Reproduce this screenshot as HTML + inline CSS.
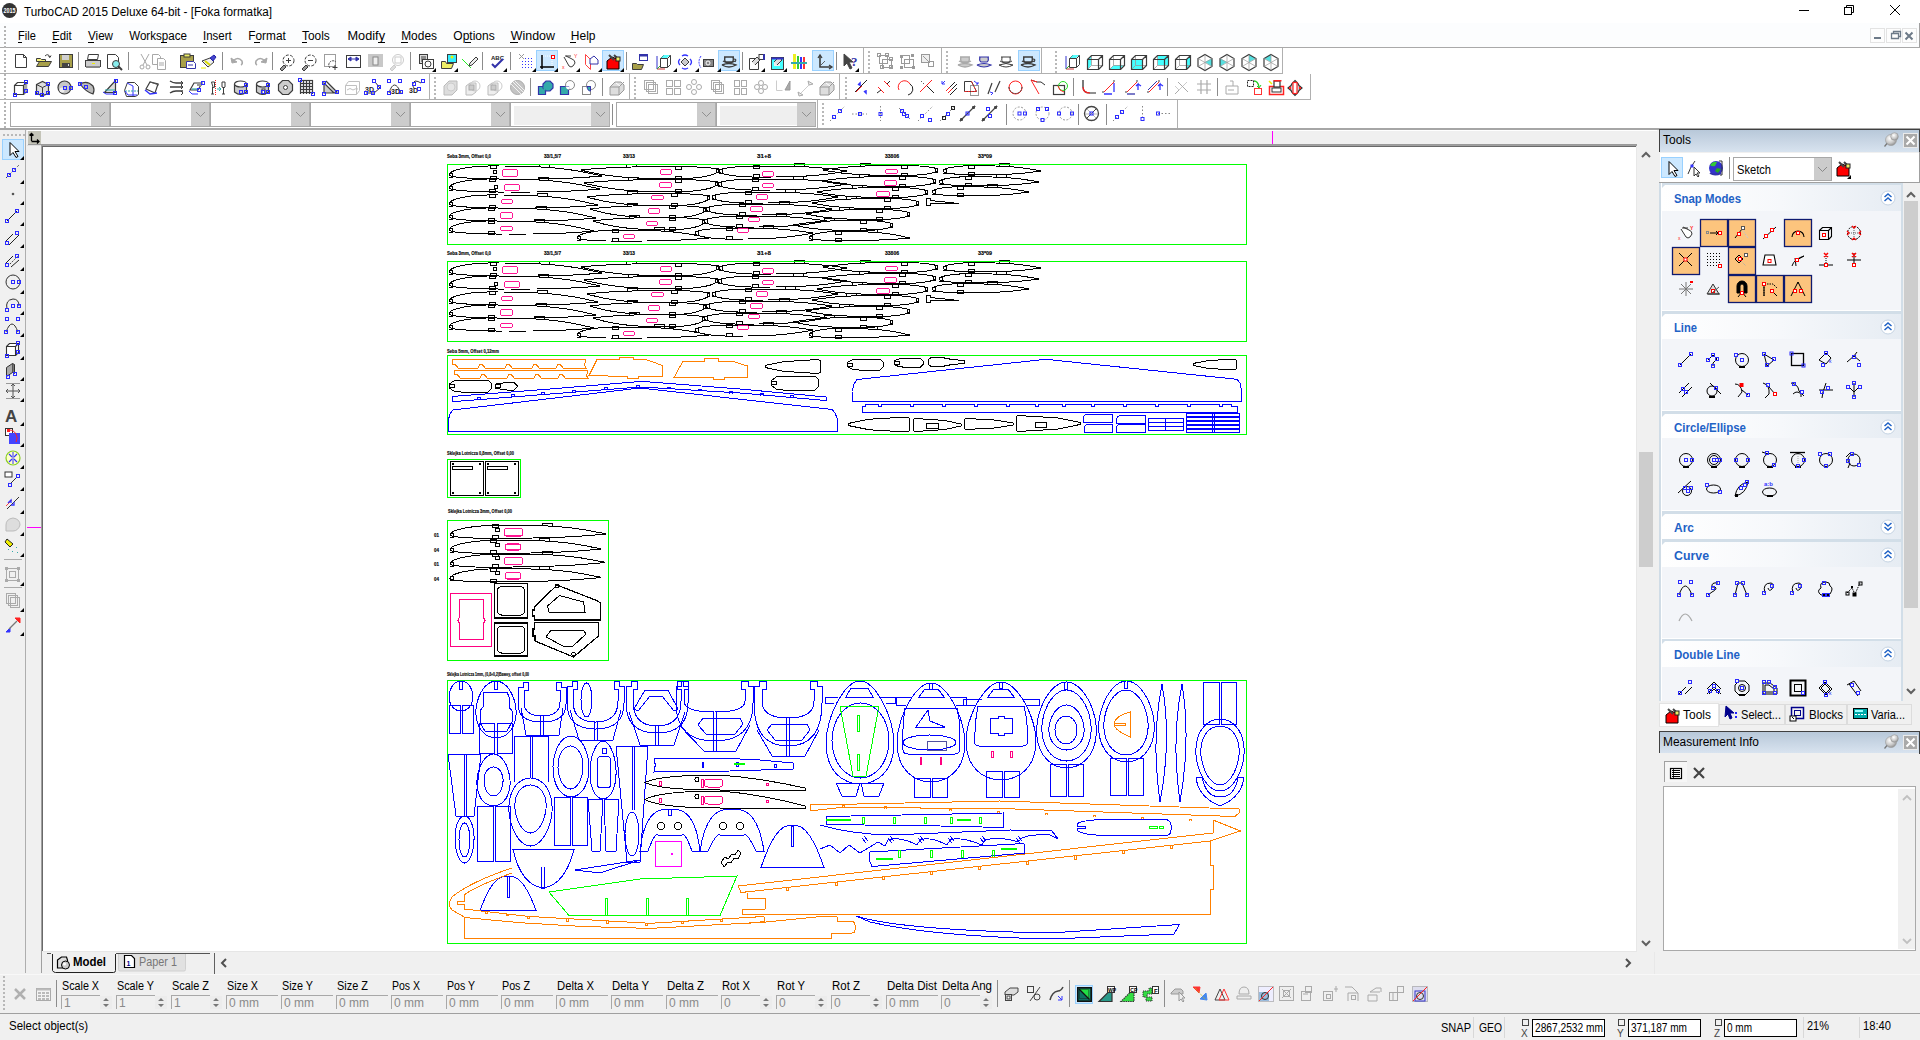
<!DOCTYPE html>
<html><head><meta charset="utf-8"><style>
html,body{margin:0;padding:0;}
body{width:1920px;height:1040px;overflow:hidden;background:#f0f0f0;}
svg{display:block;font-family:"Liberation Sans", sans-serif;}
</style></head><body>
<svg width="1920" height="1040" viewBox="0 0 1920 1040">
<rect x="0" y="0" width="1920" height="23" fill="#fff" />
<rect x="0" y="23" width="1920" height="24" fill="#fcfdfe" />
<rect x="0" y="47" width="1920" height="1" fill="#a9a9a9"/>
<rect x="0" y="48" width="1920" height="80" fill="#fff" />
<rect x="0" y="128" width="1920" height="2" fill="#a6a6a6" />
<rect x="0" y="130" width="25" height="843" fill="#f0f0f0" />
<rect x="25" y="130" width="1" height="843" fill="#aeaeae"/>
<rect x="27" y="130" width="1630" height="1" fill="#fff"/>
<rect x="28" y="144" width="1609" height="1" fill="#9a9a9a"/>
<rect x="42" y="145" width="1595" height="806" fill="#fff" />
<rect x="42" y="145" width="1595" height="1" fill="#a0a0a0"/>
<rect x="43" y="146" width="1594" height="1" fill="#696969"/>
<rect x="41" y="145" width="1" height="828" fill="#a0a0a0"/>
<rect x="42" y="146" width="1" height="805" fill="#696969"/>
<rect x="1637" y="146" width="20" height="805" fill="#f0f0f0" />
<rect x="1639" y="452" width="14" height="115" fill="#cdcdcd" />
<rect x="1037" y="956" width="166" height="15" fill="#cdcdcd" />
<rect x="0" y="1013" width="1920" height="1" fill="#a0a0a0"/>
<circle cx="9.5" cy="10.5" r="7.5" fill="#333"/>
<text x="3.5" y="13" font-size="6.5" fill="#fff" font-weight="700" textLength="12" lengthAdjust="spacingAndGlyphs" >2015</text>
<text x="24" y="16" font-size="12" fill="#000" font-weight="400" textLength="248" lengthAdjust="spacingAndGlyphs" >TurboCAD 2015 Deluxe 64-bit - [Foka formatka]</text>
<rect x="1799" y="10" width="10" height="1" fill="#000"/>
<rect x="1844.5" y="7.5" width="7" height="7" fill="none" stroke="#000"/><path d="M1846.5 7.5V5.5H1853.5V12.5H1851.5" fill="none" stroke="#000"/>
<path d="M1890 5L1900 15M1900 5L1890 15" stroke="#000" stroke-width="1"/>
<text x="18" y="40" font-size="12" fill="#000" font-weight="400" textLength="17.8" lengthAdjust="spacingAndGlyphs" >File</text>
<text x="52.2" y="40" font-size="12" fill="#000" font-weight="400" textLength="19.5" lengthAdjust="spacingAndGlyphs" >Edit</text>
<text x="88" y="40" font-size="12" fill="#000" font-weight="400" textLength="25" lengthAdjust="spacingAndGlyphs" >View</text>
<text x="129.2" y="40" font-size="12" fill="#000" font-weight="400" textLength="57.8" lengthAdjust="spacingAndGlyphs" >Workspace</text>
<text x="203" y="40" font-size="12" fill="#000" font-weight="400" textLength="28.7" lengthAdjust="spacingAndGlyphs" >Insert</text>
<text x="248.3" y="40" font-size="12" fill="#000" font-weight="400" textLength="37.5" lengthAdjust="spacingAndGlyphs" >Format</text>
<text x="302" y="40" font-size="12" fill="#000" font-weight="400" textLength="27.7" lengthAdjust="spacingAndGlyphs" >Tools</text>
<text x="347.5" y="40" font-size="12" fill="#000" font-weight="400" textLength="37.5" lengthAdjust="spacingAndGlyphs" >Modify</text>
<text x="401.2" y="40" font-size="12" fill="#000" font-weight="400" textLength="35.8" lengthAdjust="spacingAndGlyphs" >Modes</text>
<text x="453.3" y="40" font-size="12" fill="#000" font-weight="400" textLength="41.4" lengthAdjust="spacingAndGlyphs" >Options</text>
<text x="510.8" y="40" font-size="12" fill="#000" font-weight="400" textLength="44.2" lengthAdjust="spacingAndGlyphs" >Window</text>
<text x="570.8" y="40" font-size="12" fill="#000" font-weight="400" textLength="24.7" lengthAdjust="spacingAndGlyphs" >Help</text>
<rect x="1870.5" y="28.5" width="14" height="14" fill="#fdfdfd" stroke="#e3e3e3"/>
<rect x="1886.5" y="28.5" width="14" height="14" fill="#fdfdfd" stroke="#e3e3e3"/>
<rect x="1902.5" y="28.5" width="14" height="14" fill="#fdfdfd" stroke="#e3e3e3"/>
<rect x="1874" y="37" width="7" height="2" fill="#6d7a88"/>
<path d="M1891.5 33.5h7v5h-7zM1893.5 33.5v-2h7v5h-2" fill="none" stroke="#6d7a88" stroke-width="1.3"/>
<path d="M1905.5 32.5l7 7M1912.5 32.5l-7 7" stroke="#6d7a88" stroke-width="2"/>
<rect x="1919" y="23" width="1" height="24" fill="#a0a0a0"/>
<rect x="4" y="26" width="2" height="2" fill="#b4b4b4" />
<rect x="4" y="30" width="2" height="2" fill="#b4b4b4" />
<rect x="4" y="34" width="2" height="2" fill="#b4b4b4" />
<rect x="4" y="38" width="2" height="2" fill="#b4b4b4" />
<rect x="4" y="42" width="2" height="2" fill="#b4b4b4" />
<rect x="4" y="46" width="2" height="2" fill="#b4b4b4" />
<rect x="4" y="50" width="2" height="2" fill="#b4b4b4" />
<rect x="4" y="54" width="2" height="2" fill="#b4b4b4" />
<rect x="4" y="58" width="2" height="2" fill="#b4b4b4" />
<rect x="4" y="62" width="2" height="2" fill="#b4b4b4" />
<rect x="4" y="66" width="2" height="2" fill="#b4b4b4" />
<rect x="4" y="70" width="2" height="2" fill="#b4b4b4" />
<rect x="4" y="74" width="2" height="2" fill="#b4b4b4" />
<rect x="4" y="78" width="2" height="2" fill="#b4b4b4" />
<rect x="4" y="82" width="2" height="2" fill="#b4b4b4" />
<rect x="4" y="86" width="2" height="2" fill="#b4b4b4" />
<rect x="4" y="90" width="2" height="2" fill="#b4b4b4" />
<rect x="4" y="94" width="2" height="2" fill="#b4b4b4" />
<rect x="4" y="98" width="2" height="2" fill="#b4b4b4" />
<rect x="4" y="102" width="2" height="2" fill="#b4b4b4" />
<rect x="4" y="106" width="2" height="2" fill="#b4b4b4" />
<rect x="4" y="110" width="2" height="2" fill="#b4b4b4" />
<rect x="4" y="114" width="2" height="2" fill="#b4b4b4" />
<rect x="4" y="118" width="2" height="2" fill="#b4b4b4" />
<rect x="4" y="122" width="2" height="2" fill="#b4b4b4" />
<rect x="4" y="126" width="2" height="2" fill="#b4b4b4" />
<g transform="translate(14,54)"><path d="M1.5 0.5h8l3 3v10h-11z" stroke="#3c3c3c" fill="#fff" stroke-width="1" /><path d="M9.5 0.5v3h3" stroke="#3c3c3c" fill="none" stroke-width="1" /></g>
<g transform="translate(36,54)"><path d="M0.5 4.5h4l1 1h4v2h-9z" stroke="#3c3c3c" fill="#f6f27a" stroke-width="1" /><path d="M0.5 12.5l3-5h12l-3 5z" stroke="#3c3c3c" fill="#a8a04a" stroke-width="1" /><path d="M9 2q3-3 5 1" stroke="#3c3c3c" fill="none" stroke-width="1" /><path d="M12.5 2.5l1.5 1l1-2" stroke="#3c3c3c" fill="none" stroke-width="1" /></g>
<g transform="translate(59,54)"><rect x="0.5" y="0.5" width="13" height="13" stroke="#3c3c3c" fill="#a8a04a" stroke-width="1" /><rect x="3" y="1" width="7" height="5" stroke="none" fill="#d0d0d0" stroke-width="1" /><rect x="3" y="9" width="8" height="4" stroke="none" fill="#444" stroke-width="1" /><rect x="9" y="10" width="1" height="2" stroke="none" fill="#ddd" stroke-width="1" /></g>
<g transform="translate(85,54)"><path d="M3.5 0.5h10l-1 5h-10z" stroke="#3c3c3c" fill="#fff" stroke-width="1" /><rect x="0.5" y="6.5" width="15" height="6" stroke="#3c3c3c" fill="#ccc" stroke-width="1" /><rect x="7" y="9" width="3" height="1" stroke="none" fill="#ee0" stroke-width="1" /><rect x="1" y="12" width="14" height="2" stroke="none" fill="#888" stroke-width="1" /></g>
<g transform="translate(107,54)"><path d="M0.5 0.5h8l3 3v11h-11z" stroke="#3c3c3c" fill="#fff" stroke-width="1" /><circle cx="9" cy="10" r="3.5" stroke="#3c3c3c" fill="#8ee" stroke-width="1" /><line x1="11" y1="12" x2="15" y2="16" stroke="#3c3c3c" stroke-width="2" /></g>
<g transform="translate(138,54)"><circle cx="4" cy="13" r="2" stroke="#a8a8a8" fill="none" stroke-width="1" /><circle cx="10" cy="13" r="2" stroke="#a8a8a8" fill="none" stroke-width="1" /><line x1="3" y1="0" x2="9" y2="11" stroke="#a8a8a8" stroke-width="1" /><line x1="11" y1="0" x2="5" y2="11" stroke="#a8a8a8" stroke-width="1" /></g>
<g transform="translate(152,54)"><path d="M0.5 0.5h6l2 2v8h-8z" stroke="#a8a8a8" fill="#fff" stroke-width="1" /><path d="M5.5 4.5h6l2 2v9h-8z" stroke="#a8a8a8" fill="#fff" stroke-width="1" /><line x1="7" y1="9" x2="12" y2="9" stroke="#a8a8a8" stroke-width="1" /><line x1="7" y1="11" x2="12" y2="11" stroke="#a8a8a8" stroke-width="1" /></g>
<g transform="translate(180,54)"><rect x="0.5" y="1.5" width="13" height="12" stroke="#3c3c3c" fill="#a8a04a" stroke-width="1" /><rect x="4" y="0" width="6" height="3" stroke="#3c3c3c" fill="#ee6" stroke-width="1" /><path d="M6.5 7.5h7l2 2v5h-9z" stroke="#33a" fill="#fff" stroke-width="1" /><line x1="8" y1="11" x2="13" y2="11" stroke="#33a" stroke-width="1" /></g>
<g transform="translate(201,54)"><path d="M1 7l8-3l4 4l-6 5z" stroke="#3c3c3c" fill="#eee" stroke-width="1" /><line x1="4" y1="7" x2="9" y2="11" stroke="#dd0" stroke-width="2" /><path d="M9 4l4-3l2 2l-3 4z" stroke="#22a" fill="#44c" stroke-width="1" /><path d="M0 14h5" stroke="#ee0" fill="1" stroke-width="stroke-dasharray="1 1"" /></g>
<g transform="translate(230,54)"><path d="M3 7q5-5 9 0q1 3-1 4" stroke="#a8a8a8" fill="none" stroke-width="1.5" /><path d="M1 4l1 5l5-1z" stroke="#a8a8a8" fill="#a8a8a8" stroke-width="1" /></g>
<g transform="translate(252,54)"><path d="M13 7q-5-5-9 0q-1 3 1 4" stroke="#a8a8a8" fill="none" stroke-width="1.5" /><path d="M15 4l-1 5l-5-1z" stroke="#a8a8a8" fill="#a8a8a8" stroke-width="1" /></g>
<g transform="translate(279,54)"><circle cx="9.5" cy="6.5" r="5.5" stroke="#3c3c3c" fill="none" stroke-width="1" stroke-dasharray="3 1.5"/><line x1="7" y1="6.5" x2="12" y2="6.5" stroke="#3c3c3c" stroke-width="1" /><line x1="9.5" y1="4" x2="9.5" y2="9" stroke="#3c3c3c" stroke-width="1" /><path d="M1 15l4-4l2 2l-4 4z" stroke="#3c3c3c" fill="#999" stroke-width="1" /></g>
<g transform="translate(301,54)"><circle cx="9.5" cy="6.5" r="5.5" stroke="#3c3c3c" fill="none" stroke-width="1" stroke-dasharray="3 1.5"/><line x1="7" y1="6.5" x2="12" y2="6.5" stroke="#3c3c3c" stroke-width="1" /><path d="M1 15l4-4l2 2l-4 4z" stroke="#3c3c3c" fill="#999" stroke-width="1" /></g>
<g transform="translate(324,54)"><rect x="0.5" y="0.5" width="11" height="12" stroke="#3c3c3c" fill="none" stroke-width="1" stroke-dasharray="1 1"/><path d="M6 14a4 4 0 0 1 6-6" stroke="#3c3c3c" fill="none" stroke-width="1" stroke-dasharray="2 1"/><line x1="11" y1="11" x2="11" y2="16" stroke="#3c3c3c" stroke-width="1" /><line x1="8.5" y1="13.5" x2="13.5" y2="13.5" stroke="#3c3c3c" stroke-width="1" /></g>
<g transform="translate(346,54)"><rect x="0.5" y="1.5" width="14" height="12" stroke="#3c3c3c" fill="#fff" stroke-width="1" /><path d="M2 5h11" stroke="#33a" fill="none" stroke-width="1" /><path d="M2 5l3-2v4zM13 5l-3-2v4z" stroke="#33a" fill="#33a" stroke-width="1" /></g>
<g transform="translate(368,54)"><rect x="0" y="0" width="15" height="13" stroke="none" fill="#c8c8c8" stroke-width="1" /><rect x="5" y="3" width="5" height="8" stroke="#888" fill="#eee" stroke-width="1" /></g>
<g transform="translate(389,54)"><circle cx="9" cy="6" r="5.5" stroke="#ccc" fill="none" stroke-width="1" /><rect x="6" y="3" width="6" height="6" stroke="#ccc" fill="none" stroke-width="1" /><path d="M1 15l4-4l2 2l-4 4z" stroke="#ccc" fill="#ddd" stroke-width="1" /></g>
<g transform="translate(419,54)"><rect x="0.5" y="0.5" width="8" height="9" stroke="#3c3c3c" fill="#ddd" stroke-width="1" /><line x1="2" y1="3" x2="7" y2="3" stroke="#3c3c3c" stroke-width="1" /><line x1="2" y1="5" x2="7" y2="5" stroke="#3c3c3c" stroke-width="1" /><line x1="2" y1="7" x2="7" y2="7" stroke="#3c3c3c" stroke-width="1" /><rect x="3.5" y="5.5" width="11" height="9" stroke="#3c3c3c" fill="#fff" stroke-width="1" /><circle cx="9" cy="10" r="3" stroke="#3c3c3c" fill="none" stroke-width="1" /></g>
<g transform="translate(441,54)"><rect x="6.5" y="0.5" width="9" height="8" stroke="#3c3c3c" fill="#3ef" stroke-width="1" /><circle cx="11" cy="3" r="1.5" stroke="none" fill="#ee0" stroke-width="1" /><path d="M0.5 7.5h4l1 2h7l-2 5h-10z" stroke="#3c3c3c" fill="#ee6" stroke-width="1" /></g>
<g transform="translate(462,54)"><line x1="0" y1="5" x2="9" y2="14" stroke="#2e2" stroke-width="1" /><path d="M8 9l6-6l2 2l-6 6l-3 1z" stroke="#3c3c3c" fill="#eee" stroke-width="1" /></g>
<rect x="78" y="52" width="1" height="18" fill="#8c8c8c"/>
<rect x="128" y="52" width="1" height="18" fill="#8c8c8c"/>
<rect x="222" y="52" width="1" height="18" fill="#8c8c8c"/>
<rect x="272" y="52" width="1" height="18" fill="#8c8c8c"/>
<rect x="410" y="52" width="1" height="18" fill="#8c8c8c"/>
<rect x="482" y="52" width="1" height="18" fill="#8c8c8c"/>
<rect x="510" y="52" width="1" height="18" fill="#8c8c8c"/>
<rect x="626" y="52" width="1" height="18" fill="#8c8c8c"/>
<rect x="742" y="52" width="1" height="18" fill="#8c8c8c"/>
<rect x="836" y="52" width="1" height="18" fill="#8c8c8c"/>
<path d="M436 72h-4l4-4z" fill="#000"/>
<path d="M458 72h-4l4-4z" fill="#000"/>
<path d="M507 72h-4l4-4z" fill="#000"/>
<rect x="536.5" y="50.5" width="21" height="20" fill="#cce8ff" stroke="#99d1ff"/>
<rect x="602.5" y="50.5" width="21" height="20" fill="#cce8ff" stroke="#99d1ff"/>
<rect x="718.5" y="50.5" width="21" height="20" fill="#cce8ff" stroke="#99d1ff"/>
<rect x="812.5" y="50.5" width="21" height="20" fill="#cce8ff" stroke="#99d1ff"/>
<g transform="translate(490,54)"><text x="1" y="6" font-size="6" font-weight="700" fill="#222">ABC</text><path d="M2 10l3 3l8-8" stroke="#33a" fill="none" stroke-width="2" /></g>
<g transform="translate(519,54)"><line x1="0" y1="0" x2="5" y2="5" stroke="#999" stroke-width="1" /><line x1="5" y1="0" x2="0" y2="5" stroke="#999" stroke-width="1" /><rect x="3" y="7" width="1" height="1" fill="#33f"/><rect x="3" y="10" width="1" height="1" fill="#33f"/><rect x="3" y="13" width="1" height="1" fill="#33f"/><rect x="6" y="4" width="1" height="1" fill="#33f"/><rect x="6" y="7" width="1" height="1" fill="#33f"/><rect x="6" y="10" width="1" height="1" fill="#33f"/><rect x="6" y="13" width="1" height="1" fill="#33f"/><rect x="9" y="4" width="1" height="1" fill="#33f"/><rect x="9" y="7" width="1" height="1" fill="#33f"/><rect x="9" y="10" width="1" height="1" fill="#33f"/><rect x="9" y="13" width="1" height="1" fill="#33f"/><rect x="12" y="4" width="1" height="1" fill="#33f"/><rect x="12" y="7" width="1" height="1" fill="#33f"/><rect x="12" y="10" width="1" height="1" fill="#33f"/><rect x="12" y="13" width="1" height="1" fill="#33f"/></g>
<g transform="translate(540,54)"><line x1="2" y1="1" x2="2" y2="15" stroke="#000" stroke-width="1.5" /><line x1="0" y1="13" x2="14" y2="13" stroke="#000" stroke-width="1.5" /><path d="M3 2h9v10" stroke="#fff" fill="none" stroke-width="1" stroke-dasharray="1 1"/><rect x="11.5" y="1.5" width="3" height="3" stroke="#f00" fill="#fff" stroke-width="1" /></g>
<g transform="translate(562,54)"><path d="M3 2h6M2 3l5 9q2 2 4 0l2-3q0-3-3-4l-6-3" stroke="#3c3c3c" fill="#fff" stroke-width="1" /><text x="12" y="4" font-size="5" fill="#f22">Y</text><text x="0" y="15" font-size="5" fill="#f22">x</text></g>
<g transform="translate(585,54)"><path d="M0.5 0.5l5 5v10l-5-5z" stroke="#f44" fill="none" stroke-width="1" /><path d="M5 5l4-3l4 4v4h-8z" stroke="#33a" fill="#fff" stroke-width="1" /></g>
<g transform="translate(606,54)"><path d="M1 7l5-4l7 3v9h-12z" stroke="#000" fill="#f00" stroke-width="1" /><path d="M3 1l5 5M8 1l4 4" stroke="#444" fill="#fff" stroke-width="2" /><rect x="10" y="3" width="4" height="4" stroke="#222" fill="#ee6" stroke-width="1" /></g>
<g transform="translate(632,54)"><rect x="7.5" y="0.5" width="8" height="6" stroke="#33a" fill="#fff" stroke-width="1" /><rect x="7.5" y="0.5" width="8" height="2" stroke="none" fill="#33a" stroke-width="1" /><path d="M0.5 9.5h4l1 1h6l-2 5h-9z" stroke="#3c3c3c" fill="#a8a04a" stroke-width="1" /></g>
<g transform="translate(655,54)"><path d="M5.5 4.5l3-3h7v9l-3 3h-7z" stroke="#3c3c3c" fill="#fff" stroke-width="1" /><path d="M5.5 4.5h7v9M12.5 4.5l3-3" stroke="#3c3c3c" fill="none" stroke-width="1" /><path d="M6 4l3-3h6l-3 3z" stroke="none" fill="#5ff" stroke-width="1" /><line x1="2" y1="2" x2="2" y2="15" stroke="#33c" stroke-width="1" /><line x1="2" y1="15" x2="10" y2="15" stroke="#c33" stroke-width="1" /><line x1="2" y1="15" x2="5" y2="12" stroke="#3a3" stroke-width="1" /></g>
<g transform="translate(677,54)"><path d="M8 4l4 4l-4 4l-4-4z" stroke="#3c3c3c" fill="#ccc" stroke-width="1" /><path d="M3 5q-3 3 0 6M13 5q3 3 0 6M5 2q3-2 6 0M5 14q3 2 6 0" stroke="#33f" fill="none" stroke-width="1.3" /></g>
<g transform="translate(698,54)"><rect x="5.5" y="5.5" width="10" height="7" stroke="#3c3c3c" fill="#888" stroke-width="1" /><circle cx="10" cy="9" r="2" stroke="#fff" fill="none" stroke-width="1" /><path d="M3 2q-4 6 0 12" stroke="#33f" fill="none" stroke-width="1" stroke-dasharray="2 1"/></g>
<g transform="translate(722,54)"><path d="M2 3h10M1 7q6 4 12 0M3 3q-1 4 1 5h6q2-1 1-5M0 11q7 4 14 0q-7-3-14 0" stroke="#3c3c3c" fill="none" stroke-width="1.4" /><path d="M12 5q3 0 1 3" stroke="#3c3c3c" fill="none" stroke-width="1.2" /></g>
<g transform="translate(749,54)"><path d="M0.5 4.5h9v11h-9z" stroke="#3c3c3c" fill="#fff" stroke-width="1" /><path d="M3 8l5-5l3 3l-5 5" stroke="#3c3c3c" fill="#ddd" stroke-width="1" /><rect x="10" y="0.5" width="5" height="5" stroke="#3c3c3c" fill="#fff" stroke-width="1" /><line x1="15" y1="0" x2="15" y2="6" stroke="#33a" stroke-width="2" /></g>
<g transform="translate(771,54)"><rect x="0.5" y="3.5" width="12" height="12" stroke="#3c3c3c" fill="#4ff" stroke-width="1" /><rect x="3" y="7" width="6" height="5" stroke="none" fill="#eee" stroke-width="1" /><path d="M3 8l5-5l3 3l-5 5" stroke="#3c3c3c" fill="#ddd" stroke-width="1" /><rect x="0.5" y="3.5" width="12" height="2" stroke="none" fill="#33c" stroke-width="1" /></g>
<g transform="translate(791,54)"><rect x="2" y="0" width="3" height="15" stroke="none" fill="#ee2" stroke-width="1" /><rect x="6" y="2" width="2" height="13" stroke="none" fill="#3c3" stroke-width="1" /><rect x="9" y="3" width="2" height="12" stroke="none" fill="#33f" stroke-width="1" /><rect x="12" y="3" width="2" height="12" stroke="none" fill="#f33" stroke-width="1" /><rect x="0" y="8" width="16" height="2" stroke="none" fill="#3aa" stroke-width="1" /></g>
<g transform="translate(816,54)"><path d="M4 2v11h11" stroke="#3c3c3c" fill="none" stroke-width="1.6" /><path d="M2 4l2-3l2 3M13 11l3 2l-3 2" stroke="#3c3c3c" fill="none" stroke-width="1.3" /><line x1="5" y1="11" x2="9" y2="7" stroke="#3c3c3c" stroke-width="0.8" /></g>
<g transform="translate(843,54)"><path d="M1 0l9 8h-4l3 6l-2 1l-3-6l-3 3z" stroke="#444" fill="#444" stroke-width="1" /><text x="8" y="12" font-size="13" font-weight="700" fill="#33a" font-family="Liberation Serif">?</text></g>
<path d="M536 72h-4l4-4z" fill="#000"/>
<path d="M558 72h-4l4-4z" fill="#000"/>
<path d="M580 72h-4l4-4z" fill="#000"/>
<path d="M602 72h-4l4-4z" fill="#000"/>
<path d="M624 72h-4l4-4z" fill="#000"/>
<path d="M677 72h-4l4-4z" fill="#000"/>
<path d="M699 72h-4l4-4z" fill="#000"/>
<path d="M721 72h-4l4-4z" fill="#000"/>
<path d="M740 72h-4l4-4z" fill="#000"/>
<path d="M765 72h-4l4-4z" fill="#000"/>
<path d="M787 72h-4l4-4z" fill="#000"/>
<path d="M859 72h-4l4-4z" fill="#000"/>
<rect x="863" y="48" width="1" height="26" fill="#b0b0b0"/>
<rect x="868" y="51" width="2" height="2" fill="#b8b8b8"/>
<rect x="868" y="55" width="2" height="2" fill="#b8b8b8"/>
<rect x="868" y="59" width="2" height="2" fill="#b8b8b8"/>
<rect x="868" y="63" width="2" height="2" fill="#b8b8b8"/>
<rect x="868" y="67" width="2" height="2" fill="#b8b8b8"/>
<rect x="868" y="71" width="2" height="2" fill="#b8b8b8"/>
<g transform="translate(877,54)"><rect x="2.5" y="1.5" width="8" height="8" stroke="#999" fill="none" stroke-width="1" /><rect x="5.5" y="5.5" width="9" height="8" stroke="#999" fill="none" stroke-width="1" /><rect x="0.5" y="-0.5" width="3" height="3" fill="none" stroke="#999" stroke-width="1"/><rect x="8.5" y="-0.5" width="3" height="3" fill="none" stroke="#999" stroke-width="1"/><rect x="3.5" y="11.5" width="3" height="3" fill="none" stroke="#999" stroke-width="1"/><rect x="12.5" y="11.5" width="3" height="3" fill="none" stroke="#999" stroke-width="1"/><rect x="12.5" y="3.5" width="3" height="3" fill="none" stroke="#999" stroke-width="1"/></g>
<g transform="translate(899,54)"><rect x="2.5" y="1.5" width="8" height="8" stroke="#999" fill="none" stroke-width="1" /><rect x="5.5" y="5.5" width="9" height="8" stroke="#999" fill="none" stroke-width="1" /><rect x="1" y="1" width="3" height="3" stroke="none" fill="#999" stroke-width="1" /><rect x="12" y="0" width="3" height="3" stroke="none" fill="#999" stroke-width="1" /><rect x="1" y="12" width="3" height="3" stroke="none" fill="#999" stroke-width="1" /><rect x="13" y="12" width="3" height="3" stroke="none" fill="#999" stroke-width="1" /></g>
<g transform="translate(921,54)"><rect x="0.5" y="0.5" width="8" height="8" stroke="#999" fill="#eee" stroke-width="1" /><rect x="7.5" y="7.5" width="5" height="5" stroke="#999" fill="none" stroke-width="1" /><line x1="2" y1="2" x2="7" y2="7" stroke="#999" stroke-width="1" /></g>
<rect x="941" y="48" width="1" height="26" fill="#b0b0b0"/>
<rect x="946" y="51" width="2" height="2" fill="#b8b8b8"/>
<rect x="946" y="55" width="2" height="2" fill="#b8b8b8"/>
<rect x="946" y="59" width="2" height="2" fill="#b8b8b8"/>
<rect x="946" y="63" width="2" height="2" fill="#b8b8b8"/>
<rect x="946" y="67" width="2" height="2" fill="#b8b8b8"/>
<rect x="946" y="71" width="2" height="2" fill="#b8b8b8"/>
<g transform="translate(958,54)"><path d="M2 3h10M1 7q6 4 12 0M3 3q-1 4 1 5h6q2-1 1-5M0 11q7 4 14 0q-7-3-14 0" stroke="#aaa" fill="#ccc" stroke-width="1.4" /></g>
<g transform="translate(977,54)"><path d="M2 3h10M3 3q-1 4 1 5h6q2-1 1-5M0 11q7 4 14 0q-7-3-14 0" stroke="#33a" fill="#ccc" stroke-width="1.2" /></g>
<g transform="translate(999,54)"><path d="M2 3h10M1 7q6 4 12 0M3 3q-1 4 1 5h6q2-1 1-5M0 11q7 4 14 0q-7-3-14 0" stroke="#3c3c3c" fill="none" stroke-width="1" /></g>
<rect x="1018.5" y="50.5" width="21" height="20" fill="#cce8ff" stroke="#99d1ff"/>
<g transform="translate(1021,54)"><path d="M2 3h10M1 7q6 4 12 0M3 3q-1 4 1 5h6q2-1 1-5M0 11q7 4 14 0q-7-3-14 0" stroke="#3c3c3c" fill="none" stroke-width="1.4" /><path d="M12 5q3 0 1 3" stroke="#3c3c3c" fill="none" stroke-width="1.2" /></g>
<rect x="1041" y="48" width="1" height="26" fill="#b0b0b0"/>
<rect x="1055" y="51" width="2" height="2" fill="#b8b8b8"/>
<rect x="1055" y="55" width="2" height="2" fill="#b8b8b8"/>
<rect x="1055" y="59" width="2" height="2" fill="#b8b8b8"/>
<rect x="1055" y="63" width="2" height="2" fill="#b8b8b8"/>
<rect x="1055" y="67" width="2" height="2" fill="#b8b8b8"/>
<rect x="1055" y="71" width="2" height="2" fill="#b8b8b8"/>
<g transform="translate(1064,54)"><path d="M5.5 4.5l3-3h7v9l-3 3h-7z" stroke="#3c3c3c" fill="#fff" stroke-width="1" /><path d="M5.5 4.5h7v9M12.5 4.5l3-3" stroke="#3c3c3c" fill="none" stroke-width="1" /><path d="M6 4l3-3h6l-3 3z" stroke="none" fill="#5ff" stroke-width="1" /><line x1="2" y1="2" x2="2" y2="15" stroke="#33c" stroke-width="1" /><line x1="2" y1="15" x2="10" y2="15" stroke="#c33" stroke-width="1" /><line x1="2" y1="15" x2="5" y2="12" stroke="#3a3" stroke-width="1" /></g>
<g transform="translate(1087,54)"><path d="M1 5l3-3v9l-3 4z" fill="#4ff"/><path d="M4.5 1.5v10h11M4.5 11.5l-4 4" stroke="#999" fill="none" stroke-width="0.8" /><path d="M0.5 5.5h11v10h-11zM0.5 5.5l4-4h11v10l-4 4M11.5 5.5l4-4" stroke="#3c3c3c" fill="none" stroke-width="1.2" /></g>
<g transform="translate(1109,54)"><path d="M1 15l4-4h10l-4 4z" fill="#4ff"/><path d="M4.5 1.5v10h11M4.5 11.5l-4 4" stroke="#999" fill="none" stroke-width="0.8" /><path d="M0.5 5.5h11v10h-11zM0.5 5.5l4-4h11v10l-4 4M11.5 5.5l4-4" stroke="#3c3c3c" fill="none" stroke-width="1.2" /></g>
<g transform="translate(1131,54)"><path d="M1 6h10v9h-10z" fill="#4ff"/><path d="M4.5 1.5v10h11M4.5 11.5l-4 4" stroke="#999" fill="none" stroke-width="0.8" /><path d="M0.5 5.5h11v10h-11zM0.5 5.5l4-4h11v10l-4 4M11.5 5.5l4-4" stroke="#3c3c3c" fill="none" stroke-width="1.2" /></g>
<g transform="translate(1153,54)"><path d="M5 2h10v9h-10z" fill="#4ff"/><path d="M4.5 1.5v10h11M4.5 11.5l-4 4" stroke="#999" fill="none" stroke-width="0.8" /><path d="M0.5 5.5h11v10h-11zM0.5 5.5l4-4h11v10l-4 4M11.5 5.5l4-4" stroke="#3c3c3c" fill="none" stroke-width="1.2" /></g>
<g transform="translate(1175,54)"><path d="M12 5l3-3v9l-3 4z" fill="#4ff"/><path d="M4.5 1.5v10h11M4.5 11.5l-4 4" stroke="#999" fill="none" stroke-width="0.8" /><path d="M0.5 5.5h11v10h-11zM0.5 5.5l4-4h11v10l-4 4M11.5 5.5l4-4" stroke="#3c3c3c" fill="none" stroke-width="1.2" /></g>
<g transform="translate(1197,54)"><path d="M8 8l7-3.5v8z" fill="#4dd" opacity="0.9"/><path d="M8 0.5l7 4v8l-7 4l-7-4v-8z" stroke="#3c3c3c" fill="none" stroke-width="1.2" /><path d="M8 0.5v16M1 4.5l14 8M15 4.5l-14 8" stroke="#999" fill="none" stroke-width="0.7" /></g>
<g transform="translate(1219,54)"><path d="M8 8l-7-3.5v8z" fill="#4dd" opacity="0.9"/><path d="M8 0.5l7 4v8l-7 4l-7-4v-8z" stroke="#3c3c3c" fill="none" stroke-width="1.2" /><path d="M8 0.5v16M1 4.5l14 8M15 4.5l-14 8" stroke="#999" fill="none" stroke-width="0.7" /></g>
<g transform="translate(1241,54)"><path d="M8 8v-7.5l7 4z" fill="#4dd" opacity="0.9"/><path d="M8 0.5l7 4v8l-7 4l-7-4v-8z" stroke="#3c3c3c" fill="none" stroke-width="1.2" /><path d="M8 0.5v16M1 4.5l14 8M15 4.5l-14 8" stroke="#999" fill="none" stroke-width="0.7" /></g>
<g transform="translate(1263,54)"><path d="M8 8v-7.5l-7 4z" fill="#4dd" opacity="0.9"/><path d="M8 0.5l7 4v8l-7 4l-7-4v-8z" stroke="#3c3c3c" fill="none" stroke-width="1.2" /><path d="M8 0.5v16M1 4.5l14 8M15 4.5l-14 8" stroke="#999" fill="none" stroke-width="0.7" /></g>
<rect x="1282" y="48" width="1" height="26" fill="#b0b0b0"/>
<rect x="0" y="73" width="1283" height="1" fill="#b0b0b0"/>
<g transform="translate(14,80)"><path d="M0.5 5.5h9v9h-9zM0.5 5.5l3-3h9v9l-3 3M9.5 5.5l3-3" stroke="#3c3c3c" fill="none" stroke-width="1.2" /><path d="M10 6l3-3v8l-3 3z" fill="#aaa"/><rect x="-0.5" y="13.5" width="3" height="3" fill="none" stroke="#2b2bff" stroke-width="1"/><rect x="10.5" y="0.5" width="3" height="3" fill="none" stroke="#2b2bff" stroke-width="1"/><rect x="10.5" y="9.5" width="3" height="3" fill="none" stroke="#2b2bff" stroke-width="1"/></g>
<g transform="translate(36,80)"><path d="M0.5 4.5l6-3l6 3v9l-6 2l-6-2z" stroke="#3c3c3c" fill="#ddd" stroke-width="1.2" /><path d="M0.5 4.5l6 3l6-3M6.5 7.5v8" stroke="#3c3c3c" fill="none" stroke-width="1" /><rect x="-0.5" y="11.5" width="3" height="3" fill="none" stroke="#2b2bff" stroke-width="1"/><rect x="4.5" y="13.5" width="3" height="3" fill="none" stroke="#2b2bff" stroke-width="1"/><rect x="10.5" y="2.5" width="3" height="3" fill="none" stroke="#2b2bff" stroke-width="1"/><rect x="10.5" y="11.5" width="3" height="3" fill="none" stroke="#2b2bff" stroke-width="1"/></g>
<g transform="translate(57,80)"><circle cx="7.5" cy="7.5" r="6.5" stroke="#3c3c3c" fill="#c8c8c8" stroke-width="1.2" /><circle cx="5" cy="10" r="2.5" stroke="none" fill="#eee" stroke-width="1" /><rect x="6.5" y="6.5" width="3" height="3" fill="none" stroke="#2b2bff" stroke-width="1"/><rect x="12.5" y="6.5" width="3" height="3" fill="none" stroke="#2b2bff" stroke-width="1"/></g>
<g transform="translate(79,80)"><path d="M1 4q7-4 13 2q2 4 0 8q-7-2-13-10z" stroke="#3c3c3c" fill="#bbb" stroke-width="1.2" /><rect x="-0.5" y="2.5" width="3" height="3" fill="none" stroke="#2b2bff" stroke-width="1"/><rect x="5.5" y="5.5" width="3" height="3" fill="none" stroke="#2b2bff" stroke-width="1"/></g>
<g transform="translate(102,80)"><path d="M13.5 0.5v12h-11z" stroke="#3c3c3c" fill="#ddd" stroke-width="1.2" /><line x1="3" y1="10" x2="13" y2="10" stroke="#3aa" stroke-width="1" /><rect x="12.5" y="-0.5" width="3" height="3" fill="none" stroke="#2b2bff" stroke-width="1"/><rect x="11.5" y="11.5" width="3" height="3" fill="none" stroke="#2b2bff" stroke-width="1"/><path d="M1 12l3 2h9" stroke="#33f" fill="none" stroke-width="1" /></g>
<g transform="translate(124,80)"><path d="M0.5 10.5l3-8h7l4 4v8l-3 2h-9z" stroke="#3c3c3c" fill="none" stroke-width="1" /><path d="M3 3l6 3v10" stroke="#3333ff" fill="none" stroke-width="1" /><line x1="1" y1="11" x2="14" y2="11" stroke="#3aa" stroke-width="1" stroke-dasharray="2 1"/><path d="M1 11l3 4h9" stroke="#33f" fill="none" stroke-width="1" /></g>
<g transform="translate(145,80)"><path d="M1 9l4-7l8 2l-3 9z" stroke="#3c3c3c" fill="#fff" stroke-width="1.2" /><path d="M5 2l9 3" stroke="#555" fill="none" stroke-width="1" /><path d="M0 10l5 4l7-1" stroke="#33f" fill="none" stroke-width="1.5" /></g>
<g transform="translate(168,80)"><path d="M2 1q3 2 6 2h7M2 7h13M2 13q3-2 6-2h7" stroke="#3c3c3c" fill="none" stroke-width="1.5" /><path d="M13 1l2 2l-2 2M13 5l2 2l-2 2M13 11l2 2l-2 2" stroke="#3c3c3c" fill="none" stroke-width="1" /></g>
<g transform="translate(189,80)"><path d="M1 10l4-7h8l-4 7z" stroke="#3c3c3c" fill="#fff" stroke-width="1.2" /><line x1="3" y1="9" x2="9" y2="9" stroke="#3aa" stroke-width="1.2" /><path d="M8 5l5 0" stroke="#999" fill="none" stroke-width="2" /><rect x="12.5" y="1.5" width="3" height="3" fill="none" stroke="#2b2bff" stroke-width="1"/><rect x="8.5" y="8.5" width="3" height="3" fill="none" stroke="#2b2bff" stroke-width="1"/><path d="M0 11l3 3h6" stroke="#33f" fill="none" stroke-width="1" /></g>
<g transform="translate(211,80)"><path d="M0.5 2h3v5q-1 2-1.5 0zM1.5 7v7M0 14h3" stroke="#3c3c3c" fill="none" stroke-width="1" /><line x1="4.5" y1="0" x2="4.5" y2="16" stroke="#f22" stroke-width="1" stroke-dasharray="1 1"/><path d="M6 9h4M8 7l2 2l-2 2" stroke="#3aa" fill="none" stroke-width="1" /><path d="M11 2h3v5q-1 2-3 0zM12.5 7v7M11 14h3" stroke="#3c3c3c" fill="none" stroke-width="1" /></g>
<g transform="translate(234,80)"><path d="M0.5 4v8q6 5 12 0v-8" stroke="#3c3c3c" fill="#ccc" stroke-width="1.2" /><ellipse cx="6.5" cy="4" rx="6" ry="3" fill="#fff" stroke="#3c3c3c" stroke-width="1.2"/><rect x="10.5" y="3.5" width="3" height="3" fill="none" stroke="#2b2bff" stroke-width="1"/><rect x="5.5" y="10.5" width="3" height="3" fill="none" stroke="#2b2bff" stroke-width="1"/><rect x="10.5" y="10.5" width="3" height="3" fill="none" stroke="#2b2bff" stroke-width="1"/></g>
<g transform="translate(256,80)"><path d="M0.5 4v8q6 5 12 0v-8" stroke="#3c3c3c" fill="#ccc" stroke-width="1.2" /><ellipse cx="6.5" cy="4" rx="6" ry="3" fill="#fff" stroke="#3c3c3c" stroke-width="1.2"/><rect x="6" y="9" width="3" height="5" stroke="#3c3c3c" fill="#fff" stroke-width="1" /><rect x="5.5" y="10.5" width="3" height="3" fill="none" stroke="#2b2bff" stroke-width="1"/><rect x="10.5" y="10.5" width="3" height="3" fill="none" stroke="#2b2bff" stroke-width="1"/><rect x="10.5" y="3.5" width="3" height="3" fill="none" stroke="#2b2bff" stroke-width="1"/></g>
<g transform="translate(278,80)"><path d="M4.5 0.5h6l4 4v6l-4 4h-6l-4-4v-6z" stroke="#3c3c3c" fill="#ccc" stroke-width="1.2" /><circle cx="7.5" cy="7.5" r="2" stroke="#3c3c3c" fill="#fff" stroke-width="1" /></g>
<g transform="translate(300,80)"><line x1="0.5" y1="0" x2="0.5" y2="14" stroke="#3c3c3c" stroke-width="1.2" /><line x1="3.5" y1="0" x2="3.5" y2="14" stroke="#3c3c3c" stroke-width="1.2" /><line x1="6.5" y1="0" x2="6.5" y2="14" stroke="#3c3c3c" stroke-width="1.2" /><line x1="9.5" y1="0" x2="9.5" y2="14" stroke="#3c3c3c" stroke-width="1.2" /><line x1="12.5" y1="0" x2="12.5" y2="14" stroke="#3c3c3c" stroke-width="1.2" /><line x1="0" y1="0.5" x2="13" y2="0.5" stroke="#3c3c3c" stroke-width="1.2" /><line x1="0" y1="3.5" x2="13" y2="3.5" stroke="#3c3c3c" stroke-width="1.2" /><line x1="0" y1="6.5" x2="13" y2="6.5" stroke="#3c3c3c" stroke-width="1.2" /><line x1="0" y1="9.5" x2="13" y2="9.5" stroke="#3c3c3c" stroke-width="1.2" /><line x1="0" y1="12.5" x2="13" y2="12.5" stroke="#3c3c3c" stroke-width="1.2" /><rect x="-1.5" y="-1.5" width="3" height="3" fill="none" stroke="#2b2bff" stroke-width="1"/><rect x="11.5" y="12.5" width="3" height="3" fill="none" stroke="#2b2bff" stroke-width="1"/></g>
<g transform="translate(323,80)"><path d="M1 3v10h10zM3 1l11 11l-3 1" stroke="#3c3c3c" fill="#ccc" stroke-width="1.2" /><rect x="-0.5" y="1.5" width="3" height="3" fill="none" stroke="#2b2bff" stroke-width="1"/><rect x="-0.5" y="12.5" width="3" height="3" fill="none" stroke="#2b2bff" stroke-width="1"/><rect x="12.5" y="10.5" width="3" height="3" fill="none" stroke="#2b2bff" stroke-width="1"/></g>
<g transform="translate(345,80)"><path d="M0.5 5.5h11v9h-11zM0.5 5.5l3-4h11v9l-3 4" stroke="#c0c0c0" fill="none" stroke-width="1" /><path d="M2 10q3-3 6 0q3-2 5-1" stroke="#c0c0c0" fill="none" stroke-width="1" /></g>
<g transform="translate(365,80)"><text x="0" y="12" font-size="7" font-weight="700" fill="#222">3D</text><path d="M1 13h8l6-5l-5-6" stroke="#333" fill="none" stroke-width="1" /><rect x="-0.5" y="11.5" width="3" height="3" fill="none" stroke="#2b2bff" stroke-width="1"/><rect x="6.5" y="11.5" width="3" height="3" fill="none" stroke="#2b2bff" stroke-width="1"/><rect x="12.5" y="5.5" width="3" height="3" fill="none" stroke="#2b2bff" stroke-width="1"/><rect x="7.5" y="-0.5" width="3" height="3" fill="none" stroke="#2b2bff" stroke-width="1"/></g>
<g transform="translate(387,80)"><path d="M2 13q5-16 12 0" stroke="#3c3c3c" fill="none" stroke-width="1" /><text x="4" y="14" font-size="7" font-weight="700" fill="#222">3D</text><rect x="0.5" y="11.5" width="3" height="3" fill="none" stroke="#2b2bff" stroke-width="1"/><rect x="0.5" y="-0.5" width="3" height="3" fill="none" stroke="#2b2bff" stroke-width="1"/><rect x="11.5" y="-0.5" width="3" height="3" fill="none" stroke="#2b2bff" stroke-width="1"/><rect x="12.5" y="10.5" width="3" height="3" fill="none" stroke="#2b2bff" stroke-width="1"/></g>
<g transform="translate(409,80)"><text x="0" y="13" font-size="7" font-weight="700" fill="#222">3D</text><path d="M5 8q-3-4 1-7q3 0 6 2" stroke="#3c3c3c" fill="none" stroke-width="1" /><rect x="3.5" y="2.5" width="3" height="3" fill="none" stroke="#2b2bff" stroke-width="1"/><rect x="12.5" y="-0.5" width="3" height="3" fill="none" stroke="#2b2bff" stroke-width="1"/><rect x="8.5" y="7.5" width="3" height="3" fill="none" stroke="#2b2bff" stroke-width="1"/></g>
<rect x="429" y="74" width="1" height="26" fill="#b0b0b0"/>
<rect x="434" y="77" width="2" height="2" fill="#b8b8b8"/>
<rect x="434" y="81" width="2" height="2" fill="#b8b8b8"/>
<rect x="434" y="85" width="2" height="2" fill="#b8b8b8"/>
<rect x="434" y="89" width="2" height="2" fill="#b8b8b8"/>
<rect x="434" y="93" width="2" height="2" fill="#b8b8b8"/>
<rect x="434" y="97" width="2" height="2" fill="#b8b8b8"/>
<g transform="translate(443,80)"><path d="M1 6l5-5h8v9l-5 5h-8z" stroke="#bbb" fill="#ddd" stroke-width="1" /><circle cx="8" cy="7" r="4" stroke="#ccc" fill="#e6e6e6" stroke-width="1" /></g>
<g transform="translate(487,80)"><path d="M1 6l4-3h6v9l-4 3h-6z" stroke="#bbb" fill="#eee" stroke-width="1" /><circle cx="10" cy="6" r="5" stroke="#ccc" fill="none" stroke-width="1" /><rect x="4" y="5" width="5" height="5" stroke="#aaa" fill="#ccc" stroke-width="1" /></g>
<g transform="translate(510,80)"><circle cx="7.5" cy="7.5" r="7" stroke="#aaa" fill="#c4c4c4" stroke-width="1" /><path d="M1 4l10 10M3 2l10 10M5 1l10 10" stroke="#fff" fill="none" stroke-width="0.8" /></g>
<g transform="translate(538,80)"><path d="M0.5 6.5h7v8h-7z" stroke="#33a" fill="#3aa" stroke-width="1.2" /><path d="M5 4l3-3h4l3 3v4l-3 3h-4l-3-3z" stroke="#33a" fill="#3aa" stroke-width="1.2" /><rect x="5.5" y="6.5" width="2" height="4" stroke="none" fill="#3aa" stroke-width="1" /></g>
<g transform="translate(560,80)"><path d="M0.5 6.5h8v8h-8z" stroke="#33a" fill="#3aa" stroke-width="1.2" /><circle cx="10" cy="5" r="4.5" stroke="#888" fill="none" stroke-width="1" /><path d="M6 6.5h3v3q-3 0-3-3" stroke="none" fill="#fff" stroke-width="1" /></g>
<g transform="translate(582,80)"><rect x="0.5" y="6.5" width="8" height="8" stroke="#888" fill="none" stroke-width="1" /><circle cx="9" cy="5" r="4.5" stroke="#888" fill="none" stroke-width="1" /><path d="M5 6.5h3.5v4.5q-3 0-3.5-4.5z" stroke="#33a" fill="#3aa" stroke-width="1" /></g>
<g transform="translate(609,80)"><path d="M1 7l5-5h6l3 3v5l-5 5h-9z" stroke="#999" fill="#ddd" stroke-width="1" /><path d="M1 7h9l5-5M10 7v8" stroke="#999" fill="none" stroke-width="1" /><path d="M7 3l4 3" stroke="#fff" fill="none" stroke-width="1" /></g>
<g transform="translate(465,80)"><path d="M1 6l4-3h6v9l-4 3h-6z" stroke="#bbb" fill="#eee" stroke-width="1" /><circle cx="10" cy="6" r="5" stroke="#ccc" fill="none" stroke-width="1" /><rect x="4" y="5" width="5" height="5" stroke="#aaa" fill="#ccc" stroke-width="1" /></g>
<rect x="530" y="78" width="1" height="18" fill="#8c8c8c"/>
<rect x="602" y="78" width="1" height="18" fill="#8c8c8c"/>
<rect x="629" y="74" width="1" height="26" fill="#b0b0b0"/>
<rect x="634" y="77" width="2" height="2" fill="#b8b8b8"/>
<rect x="634" y="81" width="2" height="2" fill="#b8b8b8"/>
<rect x="634" y="85" width="2" height="2" fill="#b8b8b8"/>
<rect x="634" y="89" width="2" height="2" fill="#b8b8b8"/>
<rect x="634" y="93" width="2" height="2" fill="#b8b8b8"/>
<rect x="634" y="97" width="2" height="2" fill="#b8b8b8"/>
<g transform="translate(644,80)"><rect x="0.5" y="0.5" width="9" height="9" stroke="#aaa" fill="none" stroke-width="1" /><rect x="2.5" y="2.5" width="9" height="9" stroke="#aaa" fill="none" stroke-width="1" /><rect x="4.5" y="4.5" width="9" height="9" stroke="#aaa" fill="none" stroke-width="1" /></g>
<g transform="translate(666,80)"><rect x="0.5" y="0.5" width="6" height="6" stroke="#aaa" fill="none" stroke-width="1" /><rect x="0.5" y="8.5" width="6" height="6" stroke="#aaa" fill="none" stroke-width="1" /><rect x="8.5" y="0.5" width="6" height="6" stroke="#aaa" fill="none" stroke-width="1" /><rect x="8.5" y="8.5" width="6" height="6" stroke="#aaa" fill="none" stroke-width="1" /></g>
<g transform="translate(687,80)"><circle cx="7" cy="2" r="2.5" stroke="#aaa" fill="none" stroke-width="1" /><circle cx="2" cy="7" r="2.5" stroke="#aaa" fill="none" stroke-width="1" /><circle cx="12" cy="7" r="2.5" stroke="#aaa" fill="none" stroke-width="1" /><circle cx="7" cy="12" r="2.5" stroke="#aaa" fill="none" stroke-width="1" /></g>
<g transform="translate(711,80)"><rect x="0.5" y="0.5" width="8" height="9" stroke="#aaa" fill="none" stroke-width="1" /><rect x="2.5" y="2.5" width="8" height="9" stroke="#aaa" fill="none" stroke-width="1" /><rect x="4.5" y="4.5" width="8" height="9" stroke="#aaa" fill="none" stroke-width="1" /></g>
<g transform="translate(734,80)"><rect x="0.5" y="0.5" width="5" height="6" stroke="#aaa" fill="none" stroke-width="1" /><rect x="0.5" y="8.5" width="5" height="6" stroke="#aaa" fill="none" stroke-width="1" /><rect x="7.5" y="0.5" width="5" height="6" stroke="#aaa" fill="none" stroke-width="1" /><rect x="7.5" y="8.5" width="5" height="6" stroke="#aaa" fill="none" stroke-width="1" /></g>
<g transform="translate(754,80)"><circle cx="7" cy="3" r="2.5" stroke="#aaa" fill="none" stroke-width="1" /><circle cx="3" cy="7" r="2.5" stroke="#aaa" fill="none" stroke-width="1" /><circle cx="11" cy="7" r="2.5" stroke="#aaa" fill="none" stroke-width="1" /><circle cx="7" cy="11" r="2.5" stroke="#aaa" fill="none" stroke-width="1" /></g>
<g transform="translate(776,80)"><path d="M0.5 0.5v10h6" stroke="#ccc" fill="none" stroke-width="1" /><path d="M9 10l5-9v9z" stroke="#999" fill="#aaa" stroke-width="1" /></g>
<g transform="translate(798,80)"><path d="M1 15l12-12" stroke="#ccc" fill="none" stroke-width="1" /><path d="M10 1l5 3l-4 1zM0 12l5 3l-4 1z" stroke="#aaa" fill="#eee" stroke-width="1" /></g>
<g transform="translate(819,80)"><path d="M1 7l5-5h6l3 3v5l-5 5h-9z" stroke="#999" fill="#ddd" stroke-width="1" /><path d="M1 7h9l5-5M10 7v8" stroke="#999" fill="none" stroke-width="1" /><path d="M7 3l4 3" stroke="#fff" fill="none" stroke-width="1" /></g>
<rect x="839" y="74" width="1" height="26" fill="#b0b0b0"/>
<rect x="845" y="77" width="2" height="2" fill="#b8b8b8"/>
<rect x="845" y="81" width="2" height="2" fill="#b8b8b8"/>
<rect x="845" y="85" width="2" height="2" fill="#b8b8b8"/>
<rect x="845" y="89" width="2" height="2" fill="#b8b8b8"/>
<rect x="845" y="93" width="2" height="2" fill="#b8b8b8"/>
<rect x="845" y="97" width="2" height="2" fill="#b8b8b8"/>
<g transform="translate(855,80)"><line x1="0" y1="12" x2="12" y2="0" stroke="#222" stroke-width="1" /><line x1="1" y1="12" x2="7" y2="6" stroke="#f22" stroke-width="1" /><path d="M3 5l2-2l0 3M9 11l2 2l0-3" stroke="#33f" fill="none" stroke-width="1.5" /></g>
<g transform="translate(877,80)"><line x1="1" y1="7" x2="7" y2="13" stroke="#f22" stroke-width="1" /><line x1="0" y1="13" x2="4" y2="10" stroke="#222" stroke-width="1" /><line x1="7" y1="1" x2="13" y2="7" stroke="#f22" stroke-width="1" /><line x1="10" y1="4" x2="13" y2="1" stroke="#222" stroke-width="1" /></g>
<g transform="translate(898,80)"><path d="M1 10a6 6 0 0 1 11-6" stroke="#f22" fill="none" stroke-width="1" /><path d="M12 4a6 6 0 0 1 -2 11" stroke="#222" fill="none" stroke-width="1" /></g>
<g transform="translate(920,80)"><line x1="0" y1="12" x2="12" y2="0" stroke="#f22" stroke-width="1" /><line x1="7" y1="6" x2="14" y2="13" stroke="#222" stroke-width="1" /><line x1="1" y1="1" x2="5" y2="5" stroke="#222" stroke-width="1" stroke-dasharray="1 2"/></g>
<g transform="translate(942,80)"><path d="M4 11l9-9M6 13l9-9M8 15l7-7" stroke="#222" fill="none" stroke-width="1" /><path d="M4 11l4-4M6 13l4-4" stroke="#f22" fill="none" stroke-width="1" /><path d="M0 4l3 -3M0 4h3M0 4v-3" stroke="#33f" fill="none" stroke-width="1" /></g>
<g transform="translate(964,80)"><path d="M0.5 1.5h7l5 10h-12z" stroke="#3c3c3c" fill="none" stroke-width="1" /><path d="M7.5 1.5l5 10h-12" stroke="#f22" fill="none" stroke-width="1" stroke-dasharray="2 1"/><rect x="6.5" y="5.5" width="8" height="10" stroke="#333" fill="none" stroke-width="1" stroke-dasharray="1 1"/><path d="M10 1l4 3M14 4v-2M14 4h-2" stroke="#33f" fill="none" stroke-width="1" /></g>
<g transform="translate(987,80)"><line x1="1" y1="14" x2="5" y2="3" stroke="#3c3c3c" stroke-width="1.2" /><line x1="8" y1="12" x2="13" y2="1" stroke="#3c3c3c" stroke-width="1.2" /><path d="M3 12l3 1l-2 2" stroke="#33f" fill="none" stroke-width="1" /></g>
<g transform="translate(1008,80)"><circle cx="7.5" cy="7.5" r="6.5" stroke="#f22" fill="none" stroke-width="1" /><path d="M1 7a6.5 6.5 0 0 0 13 0" stroke="#333" fill="none" stroke-width="1" stroke-dasharray="2 1"/></g>
<g transform="translate(1030,80)"><path d="M1 0l8 14" stroke="#f22" fill="none" stroke-width="1" /><path d="M1 0l6 2h4l4 3" stroke="#333" fill="none" stroke-width="1" /><path d="M1 0l6 2" stroke="#f22" fill="none" stroke-width="1" /></g>
<g transform="translate(1053,80)"><rect x="0.5" y="5.5" width="11" height="9" stroke="#3c3c3c" fill="none" stroke-width="1.2" /><circle cx="10" cy="6" r="4.5" stroke="#2d2" fill="none" stroke-width="1" /><path d="M5 6q1 5 6 6" stroke="#f22" fill="none" stroke-width="1" /></g>
<g transform="translate(1082,80)"><path d="M1 0v7q0 6 7 6h6" stroke="#222" fill="none" stroke-width="1.2" /><path d="M1 7q0 6 7 6" stroke="#f22" fill="none" stroke-width="1.2" /></g>
<g transform="translate(1102,80)"><line x1="2" y1="12" x2="12" y2="2" stroke="#f22" stroke-width="1" /><path d="M0 12h2M12 0v2" stroke="#3c3c3c" fill="none" stroke-width="1" /><path d="M2 14h8M12 3v9" stroke="#33f" fill="none" stroke-width="1.3" /></g>
<g transform="translate(1125,80)"><line x1="2" y1="12" x2="12" y2="2" stroke="#f22" stroke-width="1" /><path d="M0 12h2M12 0v2" stroke="#3c3c3c" fill="none" stroke-width="1" /><path d="M2 14h8" stroke="#33a" fill="none" stroke-width="1.3" /><path d="M11 6l2-2v6M13 4l3 2" stroke="#33f" fill="none" stroke-width="1.3" /></g>
<g transform="translate(1147,80)"><line x1="2" y1="12" x2="12" y2="2" stroke="#f22" stroke-width="1" /><line x1="1" y1="10" x2="10" y2="1" stroke="#33a" stroke-width="1" /><path d="M0 12h2M12 0v2" stroke="#3c3c3c" fill="none" stroke-width="1" /><path d="M11 6l2-2v6M13 4l3 2" stroke="#33f" fill="none" stroke-width="1.3" /></g>
<g transform="translate(1174,80)"><line x1="1" y1="14" x2="9" y2="6" stroke="#aaa" stroke-width="1" /><line x1="5" y1="10" x2="13" y2="2" stroke="#ccc" stroke-width="1" /><line x1="4" y1="2" x2="14" y2="12" stroke="#aaa" stroke-width="1" /><line x1="1" y1="6" x2="5" y2="10" stroke="#ccc" stroke-width="1" /></g>
<g transform="translate(1197,80)"><path d="M4 0v14M10 0v14M0 4h14M0 10h14" stroke="#aaa" fill="none" stroke-width="1.2" /></g>
<g transform="translate(1225,80)"><path d="M1 6h12v8h-12zM5 1h3v5" stroke="#aaa" fill="#fff" stroke-width="1" /><path d="M3 10h6" stroke="#aaa" fill="none" stroke-width="1" /></g>
<g transform="translate(1247,80)"><rect x="0.5" y="0.5" width="6" height="6" stroke="#222" fill="none" stroke-width="1" stroke-dasharray="2 1"/><rect x="7.5" y="8.5" width="7" height="6" stroke="#f33" fill="none" stroke-width="1" /><path d="M7 1q4 0 5 6" stroke="#2c2" fill="none" stroke-width="1.3" /><path d="M10 6l2 2l2-3" stroke="#2c2" fill="none" stroke-width="1" /></g>
<g transform="translate(1269,80)"><rect x="0.5" y="6.5" width="14" height="8" stroke="#f22" fill="#fff" stroke-width="1.5" /><rect x="3" y="8" width="9" height="4" stroke="#333" fill="#fff" stroke-width="1" /><rect x="5" y="1" width="6" height="6" stroke="#333" fill="#fff" stroke-width="1.2" /><rect x="5" y="0.5" width="7" height="0.5" stroke="#f22" fill="none" stroke-width="1" /><line x1="0" y1="1" x2="3" y2="4" stroke="#ee0" stroke-width="1.5" /></g>
<g transform="translate(1287,80)"><path d="M8 0.5l3 3l1 2l3 2.5l-3 2.5l-1 2l-3 3l-3-3l-1-2l-3-2.5l3-2.5l1-2z" stroke="#333" fill="#ccc" stroke-width="1.2" /><rect x="6" y="2.5" width="4" height="11" stroke="#f22" fill="#fff" stroke-width="1.2" /><rect x="2" y="7" width="2" height="2" stroke="none" fill="#f22" stroke-width="1" /><rect x="12" y="7" width="2" height="2" stroke="none" fill="#f22" stroke-width="1" /></g>
<rect x="1073" y="78" width="1" height="18" fill="#8c8c8c"/>
<rect x="1167" y="78" width="1" height="18" fill="#8c8c8c"/>
<rect x="1217" y="78" width="1" height="18" fill="#8c8c8c"/>
<rect x="1310" y="74" width="1" height="26" fill="#b0b0b0"/>
<rect x="0" y="99" width="1311" height="1" fill="#b0b0b0"/>
<rect x="10" y="102" width="100" height="25" fill="#fff" />
<rect x="10.5" y="102.5" width="99" height="24" fill="none" stroke="#a6a6a6" stroke-width="1" />
<rect x="91" y="103" width="18" height="23" fill="#cccccc" />
<rect x="109" y="103" width="1" height="23" fill="#b0b0b0"/>
<path d="M96 112l4.5 4.5l4.5-4.5" fill="none" stroke="#909090"/>
<rect x="110" y="102" width="100" height="25" fill="#fff" />
<rect x="110.5" y="102.5" width="99" height="24" fill="none" stroke="#a6a6a6" stroke-width="1" />
<rect x="191" y="103" width="18" height="23" fill="#cccccc" />
<rect x="209" y="103" width="1" height="23" fill="#b0b0b0"/>
<path d="M196 112l4.5 4.5l4.5-4.5" fill="none" stroke="#909090"/>
<rect x="210" y="102" width="100" height="25" fill="#fff" />
<rect x="210.5" y="102.5" width="99" height="24" fill="none" stroke="#a6a6a6" stroke-width="1" />
<rect x="291" y="103" width="18" height="23" fill="#cccccc" />
<rect x="309" y="103" width="1" height="23" fill="#b0b0b0"/>
<path d="M296 112l4.5 4.5l4.5-4.5" fill="none" stroke="#909090"/>
<rect x="310" y="102" width="100" height="25" fill="#fff" />
<rect x="310.5" y="102.5" width="99" height="24" fill="none" stroke="#a6a6a6" stroke-width="1" />
<rect x="391" y="103" width="18" height="23" fill="#cccccc" />
<rect x="409" y="103" width="1" height="23" fill="#b0b0b0"/>
<path d="M396 112l4.5 4.5l4.5-4.5" fill="none" stroke="#909090"/>
<rect x="410" y="102" width="100" height="25" fill="#fff" />
<rect x="410.5" y="102.5" width="99" height="24" fill="none" stroke="#a6a6a6" stroke-width="1" />
<rect x="491" y="103" width="18" height="23" fill="#cccccc" />
<rect x="509" y="103" width="1" height="23" fill="#b0b0b0"/>
<path d="M496 112l4.5 4.5l4.5-4.5" fill="none" stroke="#909090"/>
<rect x="510" y="102" width="100" height="25" fill="#fff" />
<rect x="510.5" y="102.5" width="99" height="24" fill="none" stroke="#a6a6a6" stroke-width="1" />
<rect x="514" y="106" width="77" height="19" fill="#efefef" />
<rect x="591" y="103" width="18" height="23" fill="#cccccc" />
<rect x="609" y="103" width="1" height="23" fill="#b0b0b0"/>
<path d="M596 112l4.5 4.5l4.5-4.5" fill="none" stroke="#909090"/>
<rect x="616" y="102" width="100" height="25" fill="#fff" />
<rect x="616.5" y="102.5" width="99" height="24" fill="none" stroke="#a6a6a6" stroke-width="1" />
<rect x="697" y="103" width="18" height="23" fill="#cccccc" />
<rect x="715" y="103" width="1" height="23" fill="#b0b0b0"/>
<path d="M702 112l4.5 4.5l4.5-4.5" fill="none" stroke="#909090"/>
<rect x="716" y="102" width="100" height="25" fill="#fff" />
<rect x="716.5" y="102.5" width="99" height="24" fill="none" stroke="#a6a6a6" stroke-width="1" />
<rect x="720" y="106" width="77" height="19" fill="#efefef" />
<rect x="797" y="103" width="18" height="23" fill="#cccccc" />
<rect x="815" y="103" width="1" height="23" fill="#b0b0b0"/>
<path d="M802 112l4.5 4.5l4.5-4.5" fill="none" stroke="#909090"/>
<rect x="612" y="104" width="1" height="21" fill="#8c8c8c"/>
<rect x="817" y="100" width="1" height="28" fill="#b0b0b0"/>
<rect x="822" y="103" width="2" height="2" fill="#b8b8b8"/>
<rect x="822" y="107" width="2" height="2" fill="#b8b8b8"/>
<rect x="822" y="111" width="2" height="2" fill="#b8b8b8"/>
<rect x="822" y="115" width="2" height="2" fill="#b8b8b8"/>
<rect x="822" y="119" width="2" height="2" fill="#b8b8b8"/>
<rect x="822" y="123" width="2" height="2" fill="#b8b8b8"/>
<g transform="translate(830,106)"><line x1="0" y1="15" x2="15" y2="0" stroke="#666" stroke-width="0.8" stroke-dasharray="1.5 2"/><rect x="2.5" y="9.5" width="3" height="3" fill="none" stroke="#2b2bff" stroke-width="1"/><rect x="8.5" y="3.5" width="3" height="3" fill="none" stroke="#2b2bff" stroke-width="1"/></g>
<g transform="translate(852,106)"><line x1="0" y1="8" x2="15" y2="8" stroke="#666" stroke-width="0.8" stroke-dasharray="1.5 2"/><rect x="6.5" y="6.5" width="3" height="3" fill="none" stroke="#2b2bff" stroke-width="1"/></g>
<g transform="translate(873,106)"><line x1="7.5" y1="0" x2="7.5" y2="15" stroke="#666" stroke-width="0.8" stroke-dasharray="1.5 2"/><rect x="6.0" y="6.5" width="3" height="3" fill="none" stroke="#2b2bff" stroke-width="1"/></g>
<g transform="translate(897,106)"><line x1="2" y1="2" x2="14" y2="14" stroke="#666" stroke-width="0.8" stroke-dasharray="1.5 2"/><rect x="3.5" y="3.5" width="3" height="3" fill="none" stroke="#2b2bff" stroke-width="1"/><rect x="8.5" y="8.5" width="3" height="3" fill="none" stroke="#2b2bff" stroke-width="1"/><rect x="5.5" y="6.5" width="3" height="3" fill="none" stroke="#2b2bff" stroke-width="1"/></g>
<g transform="translate(918,106)"><line x1="0" y1="15" x2="15" y2="0" stroke="#666" stroke-width="0.8" stroke-dasharray="1.5 2"/><rect x="2.5" y="8.5" width="3" height="3" fill="none" stroke="#2b2bff" stroke-width="1"/><rect x="10.5" y="12.5" width="3" height="3" fill="none" stroke="#2b2bff" stroke-width="1"/></g>
<g transform="translate(940,106)"><line x1="0" y1="15" x2="15" y2="0" stroke="#666" stroke-width="0.8" stroke-dasharray="1.5 2"/><rect x="2.5" y="10.5" width="3" height="3" fill="none" stroke="#222" stroke-width="1"/><rect x="11.5" y="0.5" width="3" height="3" fill="none" stroke="#222" stroke-width="1"/><rect x="6.5" y="6.5" width="3" height="3" fill="none" stroke="#2b2bff" stroke-width="1"/></g>
<g transform="translate(960,106)"><line x1="0" y1="15" x2="15" y2="0" stroke="#444" stroke-width="1.2" /><path d="M0 15l3-1l-2-2zM15 0l-1 3l-2-2z" stroke="#444" fill="#444" stroke-width="1" /><rect x="6.0" y="6.0" width="3" height="3" fill="none" stroke="#2b2bff" stroke-width="1"/></g>
<g transform="translate(982,106)"><line x1="0" y1="15" x2="15" y2="0" stroke="#444" stroke-width="1.2" /><path d="M0 15l3-1l-2-2zM15 0l-1 3l-2-2z" stroke="#444" fill="#444" stroke-width="1" /><rect x="4.5" y="1.5" width="3" height="3" fill="none" stroke="#2b2bff" stroke-width="1"/><rect x="6.5" y="8.5" width="3" height="3" fill="none" stroke="#2b2bff" stroke-width="1"/></g>
<g transform="translate(1012,106)"><circle cx="7.5" cy="7.5" r="6.5" stroke="#999" fill="none" stroke-width="1" stroke-dasharray="2 1.5"/><rect x="6.0" y="6.0" width="3" height="3" fill="none" stroke="#2b2bff" stroke-width="1"/><rect x="11.5" y="6.0" width="3" height="3" fill="none" stroke="#2b2bff" stroke-width="1"/></g>
<g transform="translate(1035,106)"><circle cx="7.5" cy="7.5" r="6.5" stroke="#999" fill="none" stroke-width="1" stroke-dasharray="2 1.5"/><rect x="1.5" y="1.5" width="3" height="3" fill="none" stroke="#2b2bff" stroke-width="1"/><rect x="10.5" y="1.5" width="3" height="3" fill="none" stroke="#2b2bff" stroke-width="1"/><rect x="6.0" y="12.5" width="3" height="3" fill="none" stroke="#2b2bff" stroke-width="1"/></g>
<g transform="translate(1058,106)"><circle cx="7.5" cy="7.5" r="6.5" stroke="#999" fill="none" stroke-width="1" stroke-dasharray="2 1.5"/><rect x="-0.5" y="6.0" width="3" height="3" fill="none" stroke="#2b2bff" stroke-width="1"/><rect x="12.5" y="6.0" width="3" height="3" fill="none" stroke="#2b2bff" stroke-width="1"/></g>
<g transform="translate(1084,106)"><circle cx="7.5" cy="7.5" r="7" stroke="#444" fill="#fff" stroke-width="1.3" /><path d="M2 13l11-11" stroke="#444" fill="none" stroke-width="1" /><path d="M3 3l9 9M1 8h13" stroke="#999" fill="none" stroke-width="0.7" /><rect x="6.0" y="6.0" width="3" height="3" fill="none" stroke="#2b2bff" stroke-width="1"/></g>
<g transform="translate(1113,106)"><line x1="0" y1="15" x2="15" y2="0" stroke="#666" stroke-width="0.8" stroke-dasharray="1.5 2"/><rect x="2.5" y="9.5" width="3" height="3" fill="none" stroke="#2b2bff" stroke-width="1"/><rect x="7.5" y="4.5" width="3" height="3" fill="none" stroke="#2b2bff" stroke-width="1"/></g>
<g transform="translate(1135,106)"><line x1="7.5" y1="0" x2="7.5" y2="15" stroke="#666" stroke-width="0.8" stroke-dasharray="1.5 2"/><rect x="6.0" y="11.5" width="3" height="3" fill="none" stroke="#2b2bff" stroke-width="1"/></g>
<g transform="translate(1156,106)"><line x1="2" y1="7.5" x2="15" y2="7.5" stroke="#666" stroke-width="0.8" stroke-dasharray="1.5 2"/><rect x="0.5" y="6.0" width="3" height="3" fill="none" stroke="#2b2bff" stroke-width="1"/></g>
<rect x="1006" y="104" width="1" height="21" fill="#8c8c8c"/>
<rect x="1078" y="104" width="1" height="21" fill="#8c8c8c"/>
<rect x="1106" y="104" width="1" height="21" fill="#8c8c8c"/>
<rect x="1177" y="100" width="1" height="28" fill="#b0b0b0"/>
<rect x="18" y="42" width="4" height="1" fill="#000"/>
<rect x="52" y="42" width="5" height="1" fill="#000"/>
<rect x="88" y="42" width="6" height="1" fill="#000"/>
<rect x="161" y="42" width="6" height="1" fill="#000"/>
<rect x="203" y="42" width="4" height="1" fill="#000"/>
<rect x="254" y="42" width="6" height="1" fill="#000"/>
<rect x="302" y="42" width="5" height="1" fill="#000"/>
<rect x="378" y="42" width="7" height="1" fill="#000"/>
<rect x="401" y="42" width="7" height="1" fill="#000"/>
<rect x="465" y="42" width="6" height="1" fill="#000"/>
<rect x="510" y="42" width="8" height="1" fill="#000"/>
<rect x="570" y="42" width="6" height="1" fill="#000"/>
<rect x="3" y="134" width="2" height="2" fill="#b8b8b8" />
<rect x="7" y="134" width="2" height="2" fill="#b8b8b8" />
<rect x="11" y="134" width="2" height="2" fill="#b8b8b8" />
<rect x="15" y="134" width="2" height="2" fill="#b8b8b8" />
<rect x="19" y="134" width="2" height="2" fill="#b8b8b8" />
<rect x="23" y="134" width="2" height="2" fill="#b8b8b8" />
<rect x="2.5" y="139.5" width="21" height="20" fill="#cce8ff" stroke="#99d1ff"/>
<g transform="translate(9,142)"><path d="M1 0.5v13l3-3l3 5l2-1l-3-5h4z" stroke="#000" fill="#fff" stroke-width="1" /></g>
<path d="M24 160h-4l4-4z" fill="#000"/>
<g transform="translate(5,164)"><line x1="1" y1="14" x2="14" y2="1" stroke="#444" stroke-width="1" stroke-dasharray="2 2"/><rect x="2.5" y="9.5" width="3" height="3" fill="none" stroke="#2b2bff" stroke-width="1"/><rect x="7.5" y="4.5" width="3" height="3" fill="none" stroke="#2b2bff" stroke-width="1"/></g>
<path d="M24 184h-4l4-4z" fill="#000"/>
<g transform="translate(5,186)"><circle cx="8" cy="8" r="1.3" stroke="none" fill="#555" stroke-width="1" /></g>
<path d="M24 205h-4l4-4z" fill="#000"/>
<g transform="translate(5,207)"><line x1="2" y1="14" x2="12" y2="4" stroke="#222" stroke-width="1" /><rect x="0.5" y="12.5" width="3" height="3" fill="none" stroke="#2b2bff" stroke-width="1"/><rect x="10.5" y="2.5" width="3" height="3" fill="none" stroke="#2b2bff" stroke-width="1"/></g>
<path d="M24 226h-4l4-4z" fill="#000"/>
<g transform="translate(5,230)"><line x1="1" y1="11" x2="8" y2="4" stroke="#222" stroke-width="1" /><line x1="4" y1="15" x2="14" y2="5" stroke="#222" stroke-width="1" /><rect x="0.5" y="11.5" width="3" height="3" fill="none" stroke="#2b2bff" stroke-width="1"/><rect x="10.5" y="1.5" width="3" height="3" fill="none" stroke="#2b2bff" stroke-width="1"/></g>
<path d="M24 248h-4l4-4z" fill="#000"/>
<g transform="translate(5,252)"><line x1="1" y1="11" x2="8" y2="4" stroke="#222" stroke-width="1" /><line x1="3" y1="14" x2="13" y2="4" stroke="#222" stroke-width="1" stroke-dasharray="1.5 1.5"/><line x1="6" y1="15" x2="14" y2="8" stroke="#222" stroke-width="1" /><rect x="0.5" y="11.5" width="3" height="3" fill="none" stroke="#2b2bff" stroke-width="1"/><rect x="10.5" y="2.5" width="3" height="3" fill="none" stroke="#2b2bff" stroke-width="1"/></g>
<path d="M24 271h-4l4-4z" fill="#000"/>
<g transform="translate(5,274)"><circle cx="8" cy="8" r="7" stroke="#333" fill="none" stroke-width="1" /><rect x="6.5" y="6.5" width="3" height="3" fill="none" stroke="#2b2bff" stroke-width="1"/><rect x="12.5" y="6.5" width="3" height="3" fill="none" stroke="#2b2bff" stroke-width="1"/></g>
<path d="M24 294h-4l4-4z" fill="#000"/>
<g transform="translate(5,296)"><path d="M2 13q-2-9 6-10q6 0 6 7" stroke="#333" fill="none" stroke-width="1" /><rect x="0.5" y="12.5" width="3" height="3" fill="none" stroke="#2b2bff" stroke-width="1"/><rect x="6.5" y="8.5" width="3" height="3" fill="none" stroke="#2b2bff" stroke-width="1"/><rect x="12.5" y="8.5" width="3" height="3" fill="none" stroke="#2b2bff" stroke-width="1"/></g>
<path d="M24 315h-4l4-4z" fill="#000"/>
<g transform="translate(5,318)"><path d="M1 14q6-16 12 0" stroke="#333" fill="none" stroke-width="1" /><rect x="-0.5" y="12.5" width="3" height="3" fill="none" stroke="#2b2bff" stroke-width="1"/><rect x="0.5" y="-0.5" width="3" height="3" fill="none" stroke="#2b2bff" stroke-width="1"/><rect x="11.5" y="-0.5" width="3" height="3" fill="none" stroke="#2b2bff" stroke-width="1"/><rect x="11.5" y="12.5" width="3" height="3" fill="none" stroke="#2b2bff" stroke-width="1"/></g>
<path d="M24 337h-4l4-4z" fill="#000"/>
<g transform="translate(5,341)"><path d="M1.5 5.5h9v9h-9zM1.5 5.5l3-3h9v9l-3 3M10.5 5.5l3-3" stroke="#333" fill="#fff" stroke-width="1.1" /><rect x="0.5" y="13.5" width="3" height="3" fill="none" stroke="#2b2bff" stroke-width="1"/><rect x="11.5" y="0.5" width="3" height="3" fill="none" stroke="#2b2bff" stroke-width="1"/><rect x="11.5" y="9.5" width="3" height="3" fill="none" stroke="#2b2bff" stroke-width="1"/></g>
<path d="M24 360h-4l4-4z" fill="#000"/>
<g transform="translate(5,362)"><path d="M1.5 5.5l6-4v9l-6 4z" stroke="#333" fill="#aaa" stroke-width="1" /><path d="M7.5 1.5l2 1v9l-2-1" stroke="#333" fill="#777" stroke-width="1" /><rect x="1.5" y="13.5" width="3" height="3" fill="none" stroke="#2b2bff" stroke-width="1"/><rect x="8.5" y="10.5" width="3" height="3" fill="none" stroke="#2b2bff" stroke-width="1"/></g>
<path d="M24 381h-4l4-4z" fill="#000"/>
<g transform="translate(5,383)"><path d="M8 1v14M1 8h14M8 1l-2 2M8 1l2 2M8 15l-2-2M8 15l2-2M1 8l2-2M1 8l2 2M15 8l-2-2M15 8l-2 2" stroke="#555" fill="none" stroke-width="1" /><line x1="1" y1="0.5" x2="15" y2="0.5" stroke="#999" stroke-width="1" /><line x1="1" y1="15.5" x2="15" y2="15.5" stroke="#999" stroke-width="1" /></g>
<path d="M24 402h-4l4-4z" fill="#000"/>
<g transform="translate(5,407)"><text x="0" y="15" font-size="17" font-weight="700" fill="#444" font-family="Liberation Sans">A</text></g>
<path d="M24 426h-4l4-4z" fill="#000"/>
<g transform="translate(5,428)"><rect x="0.5" y="0.5" width="7" height="7" stroke="#333" fill="#fff" stroke-width="1" /><rect x="4" y="5" width="11" height="11" stroke="none" fill="#44f" stroke-width="1" /><path d="M4 2a8 8 0 0 1 7 12" stroke="#f22" fill="none" stroke-width="1" /><rect x="2" y="1" width="3" height="3" stroke="none" fill="#f22" stroke-width="1" /></g>
<path d="M24 447h-4l4-4z" fill="#000"/>
<g transform="translate(5,450)"><circle cx="8" cy="8" r="7" stroke="#8c2" fill="#ffc" stroke-width="1.2" /><path d="M4 4l3 3M12 4l-3 3M4 12l3-3M12 12l-3-3" stroke="#33f" fill="none" stroke-width="1.2" /><path d="M8 2v12" stroke="#33f" fill="none" stroke-width="1" /></g>
<path d="M24 469h-4l4-4z" fill="#000"/>
<g transform="translate(5,472)"><rect x="0" y="0" width="7" height="5" stroke="#333" fill="#fff" stroke-width="1" /><line x1="5" y1="12" x2="12" y2="5" stroke="#333" stroke-width="1" /><rect x="3.5" y="11.5" width="3" height="3" fill="none" stroke="#2b2bff" stroke-width="1"/><rect x="11.5" y="2.5" width="3" height="3" fill="none" stroke="#2b2bff" stroke-width="1"/></g>
<path d="M24 491h-4l4-4z" fill="#000"/>
<g transform="translate(5,494)"><line x1="2" y1="15" x2="14" y2="3" stroke="#333" stroke-width="1" /><line x1="1" y1="12" x2="7" y2="6" stroke="#f44" stroke-width="1" /><path d="M3 9l3-3v3M6 11l3 0l0-3" stroke="#33f" fill="none" stroke-width="1.3" /></g>
<path d="M24 514h-4l4-4z" fill="#000"/>
<g transform="translate(5,517)"><path d="M1 8q0-6 7-7q7 1 7 7q-2 6-7 6h-7z" stroke="#bbb" fill="#ddd" stroke-width="1" /></g>
<path d="M24 536h-4l4-4z" fill="#000"/>
<g transform="translate(5,538)"><path d="M2 1l6 5l-3 3l-5-5z" stroke="#222" fill="#ee0" stroke-width="1" /><path d="M3 11l1 1M7 13l1 1M11 9l1 1M12 14l1 1" stroke="#3aa" fill="none" stroke-width="1" /></g>
<path d="M24 557h-4l4-4z" fill="#000"/>
<g transform="translate(5,567)"><rect x="1.5" y="1.5" width="12" height="12" stroke="#aaa" fill="none" stroke-width="1" /><rect x="0" y="0" width="3" height="3" stroke="none" fill="#aaa" stroke-width="1" /><rect x="12" y="0" width="3" height="3" stroke="none" fill="#aaa" stroke-width="1" /><rect x="0" y="12" width="3" height="3" stroke="none" fill="#aaa" stroke-width="1" /><rect x="12" y="12" width="3" height="3" stroke="none" fill="#aaa" stroke-width="1" /><rect x="4.5" y="4.5" width="6" height="6" stroke="#aaa" fill="none" stroke-width="1" /></g>
<path d="M24 586h-4l4-4z" fill="#000"/>
<g transform="translate(5,593)"><rect x="1.5" y="0.5" width="9" height="10" stroke="#aaa" fill="none" stroke-width="1" /><rect x="3.5" y="2.5" width="9" height="10" stroke="#aaa" fill="none" stroke-width="1" /><rect x="5.5" y="4.5" width="9" height="10" stroke="#aaa" fill="none" stroke-width="1" /></g>
<path d="M24 612h-4l4-4z" fill="#000"/>
<g transform="translate(5,617)"><path d="M1 15l4-4l0 4z" stroke="#33f" fill="#33f" stroke-width="1" /><path d="M15 1l-5 0l5 5z" stroke="#f22" fill="#f22" stroke-width="1" /><path d="M4 12l8-8" stroke="#777" fill="none" stroke-width="1.2" /></g>
<path d="M24 636h-4l4-4z" fill="#000"/>
<rect x="4" y="559" width="18" height="1" fill="#aaaaaa"/>
<rect x="4" y="587" width="18" height="1" fill="#aaaaaa"/>
<rect x="28" y="131" width="13" height="13" fill="#c4c4b8" />
<path d="M31.5 141V133.5M29.5 135.5l2-2l2 2M31.5 141.5H39M37 139.5l2 2l-2 2" fill="none" stroke="#000" stroke-width="1.3"/>
<rect x="27" y="145" width="14" height="1" fill="#e0e0e0"/>
<rect x="1272" y="131" width="1" height="13" fill="#ff00ff" />
<rect x="27" y="527" width="14" height="1" fill="#ff00ff" />
<path d="M1642 157l4-4l4 4" fill="none" stroke="#606060" stroke-width="2"/>
<path d="M1642 941l4 4l4-4" fill="none" stroke="#606060" stroke-width="2"/>
<rect x="1636" y="146" width="1" height="806" fill="#e8e8e8"/>
<defs>
<linearGradient id="tbar" x1="0" y1="0" x2="0" y2="1"><stop offset="0" stop-color="#b8c8d9"/><stop offset="1" stop-color="#d8e3ef"/></linearGradient>
<linearGradient id="shdr" x1="0" y1="0" x2="1" y2="0"><stop offset="0" stop-color="#ffffff"/><stop offset="0.5" stop-color="#f6f8fb"/><stop offset="1" stop-color="#e6ecf3"/></linearGradient>
<radialGradient id="pin" cx="0.4" cy="0.35" r="0.7"><stop offset="0" stop-color="#fff"/><stop offset="0.6" stop-color="#c8c8c8"/><stop offset="1" stop-color="#8a8a8a"/></radialGradient>
</defs>
<rect x="1657" y="130" width="263" height="822" fill="#f0f0f0" />
<rect x="1659" y="129" width="261" height="1" fill="#404040" />
<rect x="1659" y="129" width="1" height="23" fill="#404040"/>
<rect x="1919" y="129" width="1" height="24" fill="#404040"/>
<rect x="1660" y="130" width="259" height="22" fill="url(#tbar)" />
<text x="1663" y="144" font-size="12" fill="#000" font-weight="400" textLength="28" lengthAdjust="spacingAndGlyphs" >Tools</text>
<g transform="translate(1884,132)"><circle cx="7" cy="8" r="5.5" fill="url(#pin)" stroke="#9a9a9a" stroke-width="0.6"/><circle cx="10.5" cy="4.5" r="3.8" fill="url(#pin)" stroke="#9a9a9a" stroke-width="0.6"/><line x1="3" y1="11.5" x2="0.5" y2="14.5" stroke="#777" stroke-width="1.2"/></g>
<rect x="1903.5" y="133.5" width="14" height="14" fill="#a9a9a9" stroke="#eaeaea"/>
<path d="M1906.5 136.5l8 8M1914.5 136.5l-8 8" stroke="#fff" stroke-width="2"/>
<rect x="1660" y="153" width="259" height="29" fill="#ffffff" />
<rect x="1659" y="182" width="261" height="1" fill="#a0a0a0"/>
<rect x="1919" y="152" width="1" height="31" fill="#a0a0a0"/>
<rect x="1661.5" y="157.5" width="21" height="20" fill="#cce8ff" stroke="#99d1ff"/>
<g transform="translate(1668,161)"><path d="M1 0.5v13l3-3l3 5l2-1l-3-5h4z" stroke="#000" fill="#fff" stroke-width="1" /></g>
<g transform="translate(1688,161)"><line x1="0" y1="13" x2="3" y2="6" stroke="#333" stroke-width="1" /><line x1="3" y1="6" x2="7" y2="0" stroke="#333" stroke-width="1" /><rect x="2.5" y="3.5" width="3" height="3" stroke="none" fill="#33f" stroke-width="1" /><path d="M6 6v9l2-2l2 3l1-1l-2-3h3z" stroke="#333" fill="#fff" stroke-width="1" /></g>
<g transform="translate(1708,160)"><circle cx="8" cy="8" r="7" stroke="none" fill="#33c" stroke-width="1" /><path d="M2 5q3-4 7-3l-2 4q-3 1-5-1z" stroke="none" fill="#3c3" stroke-width="1" /><path d="M9 8l4 1l-3 4l-3-2z" stroke="none" fill="#2a2" stroke-width="1" /><path d="M11 1h3v14h-2" stroke="#333" fill="none" stroke-width="1" /><path d="M2 13q5 3 11 0" stroke="#33a" fill="none" stroke-width="2" /></g>
<rect x="1729" y="157" width="1" height="22" fill="#8c8c8c"/>
<rect x="1733" y="157" width="99" height="24" fill="#fff" />
<rect x="1733.5" y="157.5" width="98" height="23" fill="none" stroke="#a8a8a8" stroke-width="1" />
<rect x="1814" y="158" width="17" height="22" fill="#cccccc" />
<path d="M1818 167l4.5 4.5l4.5-4.5" fill="none" stroke="#888"/>
<text x="1737" y="174" font-size="12" fill="#000" font-weight="400" textLength="34" lengthAdjust="spacingAndGlyphs" >Sketch</text>
<g transform="translate(1836,161)"><path d="M1 7l5-4l7 3v9h-12z" stroke="#000" fill="#f00" stroke-width="1" /><path d="M3 1l5 5M8 1l4 4" stroke="#444" fill="#fff" stroke-width="2" /><rect x="10" y="3" width="4" height="4" stroke="#222" fill="#ee6" stroke-width="1" /></g>
<path d="M1851 179h-4l4-4z" fill="#000"/>
<rect x="1659" y="183" width="261" height="520" fill="#f0f0f0" />
<rect x="1659" y="183" width="1" height="518" fill="#d0dce6"/>
<rect x="1660" y="183" width="1" height="518" fill="#d0dce6"/>
<rect x="1661" y="183" width="1" height="518" fill="#ffffff"/>
<rect x="1662" y="183" width="241" height="518" fill="#d2dee8" />
<rect x="1903" y="183" width="16" height="518" fill="#f0f0f0" />
<rect x="1904" y="201" width="14" height="407" fill="#cdcdcd" />
<path d="M1907 197l4-4l4 4" fill="none" stroke="#606060" stroke-width="2"/>
<path d="M1907 689l4 4l4-4" fill="none" stroke="#606060" stroke-width="2"/>
<path d="M1662 211V188l3-3H1901V211z" fill="url(#shdr)"/>
<text x="1674" y="203" font-size="12.3" fill="#1f62c6" font-weight="700" textLength="67" lengthAdjust="spacingAndGlyphs" >Snap Modes</text>
<circle cx="1888" cy="198" r="7" fill="#fff" stroke="#c5d3e3"/>
<path d="M1884.5 197l3.5-3l3.5 3M1884.5 201l3.5-3l3.5 3" fill="none" stroke="#1f62c6" stroke-width="1.5"/>
<rect x="1662" y="211" width="239" height="99" fill="#f3f5f9" />
<rect x="1662" y="310" width="239" height="1" fill="#ffffff"/>
<path d="M1662 339V317l3-3H1901V339z" fill="url(#shdr)"/>
<text x="1674" y="332" font-size="12.3" fill="#1f62c6" font-weight="700" textLength="23" lengthAdjust="spacingAndGlyphs" >Line</text>
<circle cx="1888" cy="327" r="7" fill="#fff" stroke="#c5d3e3"/>
<path d="M1884.5 326l3.5-3l3.5 3M1884.5 330l3.5-3l3.5 3" fill="none" stroke="#1f62c6" stroke-width="1.5"/>
<rect x="1662" y="339" width="239" height="71" fill="#f3f5f9" />
<rect x="1662" y="410" width="239" height="1" fill="#ffffff"/>
<path d="M1662 438V417l3-3H1901V438z" fill="url(#shdr)"/>
<text x="1674" y="432" font-size="12.3" fill="#1f62c6" font-weight="700" textLength="72" lengthAdjust="spacingAndGlyphs" >Circle/Ellipse</text>
<circle cx="1888" cy="427" r="7" fill="#fff" stroke="#c5d3e3"/>
<path d="M1884.5 426l3.5-3l3.5 3M1884.5 430l3.5-3l3.5 3" fill="none" stroke="#1f62c6" stroke-width="1.5"/>
<rect x="1662" y="438" width="239" height="72" fill="#f3f5f9" />
<rect x="1662" y="510" width="239" height="1" fill="#ffffff"/>
<path d="M1662 539V517l3-3H1901V539z" fill="url(#shdr)"/>
<text x="1674" y="532" font-size="12.3" fill="#1f62c6" font-weight="700" textLength="20" lengthAdjust="spacingAndGlyphs" >Arc</text>
<circle cx="1888" cy="527" r="7" fill="#fff" stroke="#c5d3e3"/>
<path d="M1884.5 523l3.5 3l3.5-3M1884.5 527l3.5 3l3.5-3" fill="none" stroke="#1f62c6" stroke-width="1.5"/>
<path d="M1662 567V545l3-3H1901V567z" fill="url(#shdr)"/>
<text x="1674" y="560" font-size="12.3" fill="#1f62c6" font-weight="700" textLength="35" lengthAdjust="spacingAndGlyphs" >Curve</text>
<circle cx="1888" cy="555" r="7" fill="#fff" stroke="#c5d3e3"/>
<path d="M1884.5 554l3.5-3l3.5 3M1884.5 558l3.5-3l3.5 3" fill="none" stroke="#1f62c6" stroke-width="1.5"/>
<rect x="1662" y="567" width="239" height="71" fill="#f3f5f9" />
<rect x="1662" y="638" width="239" height="1" fill="#ffffff"/>
<path d="M1662 667V644l3-3H1901V667z" fill="url(#shdr)"/>
<text x="1674" y="659" font-size="12.3" fill="#1f62c6" font-weight="700" textLength="66" lengthAdjust="spacingAndGlyphs" >Double Line</text>
<circle cx="1888" cy="654" r="7" fill="#fff" stroke="#c5d3e3"/>
<path d="M1884.5 653l3.5-3l3.5 3M1884.5 657l3.5-3l3.5 3" fill="none" stroke="#1f62c6" stroke-width="1.5"/>
<rect x="1662" y="667" width="239" height="34" fill="#f3f5f9" />
<rect x="1662" y="701" width="239" height="1" fill="#ffffff"/>
<rect x="1657" y="701" width="263" height="30" fill="#f0f0f0" />
<rect x="1659" y="703" width="60" height="23" fill="#ffffff" />
<rect x="1659.5" y="703.5" width="59" height="23" fill="none" stroke="#e3e3e3" stroke-width="1" />
<rect x="1719.5" y="704.5" width="65" height="20" fill="none" stroke="#dcdcdc" stroke-width="1" />
<rect x="1785.5" y="704.5" width="61" height="20" fill="none" stroke="#dcdcdc" stroke-width="1" />
<rect x="1847.5" y="704.5" width="64" height="20" fill="none" stroke="#dcdcdc" stroke-width="1" />
<g transform="translate(1665,708)"><path d="M1 7l5-4l7 3v9h-12z" stroke="#000" fill="#f00" stroke-width="1" /><path d="M3 1l5 5M8 1l4 4" stroke="#444" fill="#fff" stroke-width="2" /><rect x="10" y="3" width="4" height="4" stroke="#222" fill="#ee6" stroke-width="1" /></g>
<text x="1683" y="719" font-size="12" fill="#000" font-weight="400" textLength="28" lengthAdjust="spacingAndGlyphs" >Tools</text>
<g transform="translate(1726,706)"><path d="M0 0l8 7h-4l2 5l-2 1l-2-5l-3 3z" stroke="#00008b" fill="#00008b" stroke-width="1" /><rect x="9" y="6" width="2" height="2" stroke="none" fill="#22f" stroke-width="1" /><rect x="9" y="10" width="2" height="2" stroke="none" fill="#22f" stroke-width="1" /></g>
<text x="1741" y="719" font-size="12" fill="#000" font-weight="400" textLength="40" lengthAdjust="spacingAndGlyphs" >Select...</text>
<g transform="translate(1790,706)"><rect x="1.5" y="1.5" width="12" height="11" stroke="#00008b" fill="none" stroke-width="1.5" /><rect x="4.5" y="4.5" width="6" height="5" stroke="#00008b" fill="none" stroke-width="1" /><rect x="0" y="10" width="6" height="5" stroke="#000" fill="#fff" stroke-width="1" /><line x1="2" y1="11" x2="4" y2="13" stroke="#000" stroke-width="1" /></g>
<text x="1809" y="719" font-size="12" fill="#000" font-weight="400" textLength="34" lengthAdjust="spacingAndGlyphs" >Blocks</text>
<g transform="translate(1853,708)"><rect x="0.5" y="0.5" width="14" height="10" stroke="#000" fill="#0aa" stroke-width="1" /><rect x="2" y="6" width="2" height="1" stroke="none" fill="#fff" stroke-width="1" /><rect x="5" y="6" width="2" height="1" stroke="none" fill="#fff" stroke-width="1" /><rect x="8" y="6" width="2" height="1" stroke="none" fill="#fff" stroke-width="1" /><rect x="11" y="6" width="2" height="1" stroke="none" fill="#fff" stroke-width="1" /><rect x="2" y="2" width="8" height="2" stroke="none" fill="#9ff" stroke-width="1" /></g>
<text x="1871" y="719" font-size="12" fill="#000" font-weight="400" textLength="34" lengthAdjust="spacingAndGlyphs" >Varia...</text>
<rect x="1659" y="731" width="261" height="1" fill="#404040" />
<rect x="1659" y="731" width="1" height="22" fill="#404040"/>
<rect x="1919" y="731" width="1" height="23" fill="#404040"/>
<rect x="1660" y="732" width="259" height="21" fill="url(#tbar)" />
<text x="1663" y="746" font-size="12" fill="#000" font-weight="400" textLength="96" lengthAdjust="spacingAndGlyphs" >Measurement Info</text>
<g transform="translate(1884,734)"><circle cx="7" cy="8" r="5.5" fill="url(#pin)" stroke="#9a9a9a" stroke-width="0.6"/><circle cx="10.5" cy="4.5" r="3.8" fill="url(#pin)" stroke="#9a9a9a" stroke-width="0.6"/><line x1="3" y1="11.5" x2="0.5" y2="14.5" stroke="#777" stroke-width="1.2"/></g>
<rect x="1903.5" y="735.5" width="14" height="14" fill="#a9a9a9" stroke="#eaeaea"/>
<path d="M1906.5 738.5l8 8M1914.5 738.5l-8 8" stroke="#fff" stroke-width="2"/>
<rect x="1660" y="754" width="259" height="198" fill="#f0f0f0" />
<rect x="1664" y="761" width="23" height="21" fill="#f6f6f6" />
<rect x="1664" y="761" width="23" height="1" fill="#a0a0a0"/>
<rect x="1664" y="761" width="1" height="21" fill="#a0a0a0"/>
<g transform="translate(1670,768)"><rect x="0.5" y="0.5" width="11" height="10" stroke="#000" fill="#fff" stroke-width="1.2" /><line x1="2" y1="2.5" x2="10" y2="2.5" stroke="#000" stroke-width="1" /><line x1="2" y1="4.5" x2="10" y2="4.5" stroke="#000" stroke-width="1" /><line x1="2" y1="6.5" x2="10" y2="6.5" stroke="#000" stroke-width="1" /><line x1="2" y1="8.5" x2="10" y2="8.5" stroke="#000" stroke-width="1" /><line x1="3.5" y1="1" x2="3.5" y2="10" stroke="#000" stroke-width="0.8" /></g>
<path d="M1694 768l10 10M1704 768l-10 10" stroke="#444" stroke-width="2.2"/>
<rect x="1663" y="786" width="253" height="165" fill="#fff" />
<rect x="1663.5" y="786.5" width="252" height="164" fill="none" stroke="#a9a9a9" stroke-width="1" />
<rect x="1898" y="789" width="17" height="160" fill="#f0f0f0" />
<path d="M1903 800l4-4l4 4M1903 939l4 4l4-4" fill="none" stroke="#c0c0c0" stroke-width="1.8"/>
<rect x="1700.5" y="219.5" width="27" height="27" fill="#fcc47d" stroke="#0e1a70" stroke-width="1.3"/>
<rect x="1728.5" y="219.5" width="27" height="27" fill="#fcc47d" stroke="#0e1a70" stroke-width="1.3"/>
<rect x="1784.5" y="219.5" width="27" height="27" fill="#fcc47d" stroke="#0e1a70" stroke-width="1.3"/>
<rect x="1672.5" y="247.5" width="27" height="27" fill="#fcc47d" stroke="#0e1a70" stroke-width="1.3"/>
<rect x="1728.5" y="247.5" width="27" height="27" fill="#fcc47d" stroke="#0e1a70" stroke-width="1.3"/>
<rect x="1728.5" y="275.5" width="27" height="27" fill="#fcc47d" stroke="#0e1a70" stroke-width="1.3"/>
<rect x="1756.5" y="275.5" width="27" height="27" fill="#fcc47d" stroke="#0e1a70" stroke-width="1.3"/>
<rect x="1784.5" y="275.5" width="27" height="27" fill="#fcc47d" stroke="#0e1a70" stroke-width="1.3"/>
<g transform="translate(1678,225)"><path d="M4 3h6M3 4l5 8q2 2 4 0l2-3q0-3-3-4l-6-3" stroke="#333" fill="#fff" stroke-width="1" /><text x="12" y="5" font-size="5" fill="#f22" font-weight="700">Y</text><text x="0" y="15" font-size="5" fill="#f22">x</text></g>
<g transform="translate(1706,225)"><rect x="0.5" y="6.5" width="2" height="2" stroke="#888" fill="none" stroke-width="1" /><line x1="4" y1="8" x2="12" y2="8" stroke="#000" stroke-width="1" /><path d="M10 6l2 2l-2 2" stroke="#000" fill="none" stroke-width="1" /><rect x="12.5" y="6.5" width="3" height="3" fill="#fff" stroke="#f00" stroke-width="1"/></g>
<g transform="translate(1734,225)"><line x1="1" y1="13" x2="8" y2="4" stroke="#000" stroke-width="1" /><line x1="8" y1="4" x2="14" y2="13" stroke="#fff" stroke-width="1" stroke-dasharray="1 1"/><path d="M8 4l6 9" stroke="#aaa" fill="none" stroke-width="1" stroke-dasharray="1 1"/><rect x="3.5" y="7.5" width="3" height="3" fill="#fff" stroke="#f00" stroke-width="1"/><rect x="7.5" y="1.5" width="3" height="3" stroke="#555" fill="#fff" stroke-width="1" /></g>
<g transform="translate(1762,225)"><line x1="1" y1="14" x2="14" y2="2" stroke="#000" stroke-width="1" /><rect x="2.5" y="9.5" width="3" height="3" fill="#fff" stroke="#f00" stroke-width="1"/><rect x="8.5" y="3.5" width="3" height="3" fill="#fff" stroke="#f00" stroke-width="1"/></g>
<g transform="translate(1790,225)"><path d="M2 12a6 6 0 1 1 12 0" stroke="#000" fill="none" stroke-width="1.1" /><rect x="6.5" y="6.5" width="3" height="3" fill="#fff" stroke="#f00" stroke-width="1"/></g>
<g transform="translate(1818,225)"><path d="M1.5 5.5h9v9h-9zM1.5 5.5l3-3h9v9l-3 3M10.5 5.5l3-3" stroke="#000" fill="none" stroke-width="1.1" /><rect x="4.5" y="8.5" width="3" height="3" fill="#fff" stroke="#f00" stroke-width="1"/></g>
<g transform="translate(1846,225)"><circle cx="8" cy="8" r="6.5" stroke="#000" fill="none" stroke-width="1" stroke-dasharray="2 1"/><line x1="8" y1="3" x2="8" y2="13" stroke="#000" stroke-width="0.6" stroke-dasharray="1 1"/><line x1="3" y1="8" x2="13" y2="8" stroke="#000" stroke-width="0.6" stroke-dasharray="1 1"/><path d="M6 1l2 2l2-2M6 15l2-2l2 2M1 6l2 2l-2 2M15 6l-2 2l2 2" stroke="#f00" fill="none" stroke-width="1.2" /></g>
<g transform="translate(1678,252)"><line x1="1" y1="1" x2="14" y2="14" stroke="#000" stroke-width="1" /><line x1="14" y1="1" x2="1" y2="14" stroke="#000" stroke-width="1" /><rect x="6.0" y="6.0" width="3" height="3" fill="#fff" stroke="#f00" stroke-width="1"/></g>
<g transform="translate(1706,252)"><rect x="1" y="1" width="1" height="1" fill="#000"/><rect x="1" y="4" width="1" height="1" fill="#000"/><rect x="1" y="7" width="1" height="1" fill="#000"/><rect x="1" y="10" width="1" height="1" fill="#000"/><rect x="1" y="13" width="1" height="1" fill="#000"/><rect x="4" y="1" width="1" height="1" fill="#000"/><rect x="4" y="4" width="1" height="1" fill="#000"/><rect x="4" y="7" width="1" height="1" fill="#000"/><rect x="4" y="10" width="1" height="1" fill="#000"/><rect x="4" y="13" width="1" height="1" fill="#000"/><rect x="7" y="1" width="1" height="1" fill="#000"/><rect x="7" y="4" width="1" height="1" fill="#000"/><rect x="7" y="7" width="1" height="1" fill="#000"/><rect x="7" y="10" width="1" height="1" fill="#000"/><rect x="7" y="13" width="1" height="1" fill="#000"/><rect x="10" y="1" width="1" height="1" fill="#000"/><rect x="10" y="4" width="1" height="1" fill="#000"/><rect x="10" y="7" width="1" height="1" fill="#000"/><rect x="10" y="10" width="1" height="1" fill="#000"/><rect x="10" y="13" width="1" height="1" fill="#000"/><rect x="13" y="1" width="1" height="1" fill="#000"/><rect x="13" y="4" width="1" height="1" fill="#000"/><rect x="13" y="7" width="1" height="1" fill="#000"/><rect x="13" y="10" width="1" height="1" fill="#000"/><rect x="13" y="13" width="1" height="1" fill="#000"/><rect x="12.5" y="12.5" width="3" height="3" fill="#fff" stroke="#f00" stroke-width="1"/></g>
<g transform="translate(1734,252)"><path d="M1 7l4-4l4 4l-4 4z" stroke="#000" fill="none" stroke-width="1" /><line x1="6" y1="8" x2="12" y2="14" stroke="#aaa" stroke-width="1" stroke-dasharray="1 1"/><rect x="4.5" y="5.5" width="3" height="3" fill="#fff" stroke="#f00" stroke-width="1"/><rect x="10.5" y="1.5" width="3" height="3" stroke="#555" fill="#fff" stroke-width="1" /></g>
<g transform="translate(1762,252)"><path d="M1 13h13l-2-10h-9z" stroke="#000" fill="#fff" stroke-width="1.1" /><rect x="6.0" y="7.5" width="3" height="3" fill="#fff" stroke="#f00" stroke-width="1"/></g>
<g transform="translate(1790,252)"><path d="M2 14q2-7 12-10" stroke="#000" fill="none" stroke-width="1" /><line x1="5" y1="9" x2="14" y2="4" stroke="#000" stroke-width="1" /><line x1="5" y1="6" x2="6" y2="14" stroke="#000" stroke-width="1" /><rect x="5.5" y="6.5" width="3" height="3" fill="#fff" stroke="#f00" stroke-width="1"/></g>
<g transform="translate(1818,252)"><line x1="1" y1="13" x2="15" y2="13" stroke="#000" stroke-width="1" /><line x1="8" y1="4" x2="8" y2="13" stroke="#000" stroke-width="1" stroke-dasharray="1 1"/><rect x="6.5" y="11.5" width="3" height="3" fill="#fff" stroke="#f00" stroke-width="1"/><path d="M6 1l4 4M10 1l-4 4" stroke="#f00" fill="none" stroke-width="1.5" /></g>
<g transform="translate(1846,252)"><line x1="1" y1="8" x2="15" y2="8" stroke="#000" stroke-width="1" /><line x1="8" y1="1" x2="8" y2="15" stroke="#000" stroke-width="1" /><rect x="6.5" y="11.5" width="3" height="3" fill="#fff" stroke="#f00" stroke-width="1"/><path d="M6 1l4 4M10 1l-4 4" stroke="#f00" fill="none" stroke-width="1.5" /></g>
<g transform="translate(1678,281)"><path d="M8 1v14M1 8h14M3 3l10 10M13 3l-10 10" stroke="#777" fill="none" stroke-width="1" /><rect x="12" y="0" width="3" height="2" stroke="none" fill="#f00" stroke-width="1" /></g>
<g transform="translate(1706,281)"><path d="M1 13l6-10l6 10z" stroke="#333" fill="#ddd" stroke-width="1" /><path d="M2 13h12" stroke="#333" fill="none" stroke-width="1" /><rect x="5.5" y="8.5" width="3" height="3" fill="#fff" stroke="#f00" stroke-width="1"/><line x1="6" y1="12" x2="13" y2="6" stroke="#555" stroke-width="1" /></g>
<g transform="translate(1734,281)"><path d="M3 12v-7a5 5 0 0 1 10 0v7h-3v-7a2 2 0 0 0 -4 0v7z" stroke="#000" fill="#000" stroke-width="1" /><line x1="4" y1="16" x2="8" y2="11" stroke="#000" stroke-width="1" /><line x1="12" y1="16" x2="8" y2="11" stroke="#000" stroke-width="1" /><rect x="6.5" y="10.5" width="3" height="3" fill="#fff" stroke="#f00" stroke-width="1"/></g>
<g transform="translate(1762,281)"><path d="M2 15v-12h9l4 4" stroke="#000" fill="none" stroke-width="1" stroke-dasharray="1.5 1"/><line x1="2" y1="3" x2="2" y2="15" stroke="#000" stroke-width="1" /><line x1="10" y1="10" x2="15" y2="15" stroke="#000" stroke-width="1" /><rect x="0.5" y="1.5" width="3" height="3" fill="#fff" stroke="#f00" stroke-width="1"/><rect x="8.5" y="8.5" width="3" height="3" fill="#fff" stroke="#f00" stroke-width="1"/></g>
<g transform="translate(1790,281)"><path d="M1 15l7-14l7 14" stroke="#000" fill="none" stroke-width="1" /><line x1="8" y1="1" x2="8" y2="3" stroke="#000" stroke-width="1" /><rect x="3.5" y="8.5" width="3" height="3" fill="#fff" stroke="#f00" stroke-width="1"/><rect x="9.5" y="8.5" width="3" height="3" fill="#fff" stroke="#f00" stroke-width="1"/></g>
<g transform="translate(1678,352)"><line x1="2" y1="13" x2="13" y2="2" stroke="#000" stroke-width="1" /><rect x="0.5" y="11.5" width="3" height="3" fill="none" stroke="#2b2bff" stroke-width="1"/><rect x="11.5" y="0.5" width="3" height="3" fill="none" stroke="#2b2bff" stroke-width="1"/></g>
<g transform="translate(1706,352)"><path d="M2 8l5-5l4 4l-4 4v3" stroke="#000" fill="none" stroke-width="1" /><rect x="0.5" y="6.5" width="3" height="3" fill="none" stroke="#2b2bff" stroke-width="1"/><rect x="5.5" y="1.5" width="3" height="3" fill="none" stroke="#2b2bff" stroke-width="1"/><rect x="9.5" y="5.5" width="3" height="3" fill="none" stroke="#2b2bff" stroke-width="1"/><rect x="5.5" y="12.5" width="3" height="3" fill="none" stroke="#2b2bff" stroke-width="1"/></g>
<g transform="translate(1734,352)"><circle cx="8" cy="8" r="6.5" stroke="#000" fill="none" stroke-width="1" /><rect x="5" y="14" width="6" height="2" stroke="none" fill="#000" stroke-width="1" /><rect x="6.5" y="6.5" width="3" height="3" fill="none" stroke="#2b2bff" stroke-width="1"/><rect x="0.5" y="1.5" width="3" height="3" fill="none" stroke="#2b2bff" stroke-width="1"/></g>
<g transform="translate(1762,352)"><path d="M2 2l3 12l7-6z" stroke="#000" fill="none" stroke-width="1" /><rect x="0.5" y="0.5" width="3" height="3" fill="none" stroke="#2b2bff" stroke-width="1"/><rect x="10.5" y="5.5" width="3" height="3" fill="none" stroke="#2b2bff" stroke-width="1"/><rect x="3.5" y="11.5" width="3" height="3" fill="none" stroke="#2b2bff" stroke-width="1"/></g>
<g transform="translate(1790,352)"><rect x="1.5" y="1.5" width="12" height="12" stroke="#000" fill="none" stroke-width="1.3" /><rect x="0.0" y="0.0" width="3" height="3" fill="none" stroke="#2b2bff" stroke-width="1"/><rect x="12.0" y="12.0" width="3" height="3" fill="none" stroke="#2b2bff" stroke-width="1"/></g>
<g transform="translate(1818,352)"><path d="M1 8l7-7l5 5l-5 6z" stroke="#000" fill="none" stroke-width="1" /><rect x="6.5" y="-0.5" width="3" height="3" fill="none" stroke="#2b2bff" stroke-width="1"/><rect x="3.5" y="11.5" width="3" height="3" fill="none" stroke="#2b2bff" stroke-width="1"/><text x="11" y="11" font-size="5" fill="#33f">k</text></g>
<g transform="translate(1846,352)"><path d="M1 10l7-6l6 5M8 4l3-4" stroke="#000" fill="none" stroke-width="1" /><rect x="6.5" y="3.5" width="3" height="3" fill="none" stroke="#2b2bff" stroke-width="1"/><rect x="11.5" y="11.5" width="3" height="3" fill="none" stroke="#2b2bff" stroke-width="1"/></g>
<g transform="translate(1678,382)"><line x1="1" y1="11" x2="11" y2="1" stroke="#000" stroke-width="1" /><line x1="4" y1="15" x2="14" y2="5" stroke="#000" stroke-width="1" /><rect x="3.5" y="5.5" width="3" height="3" fill="none" stroke="#2b2bff" stroke-width="1"/><rect x="6.5" y="8.5" width="3" height="3" fill="none" stroke="#2b2bff" stroke-width="1"/></g>
<g transform="translate(1706,382)"><circle cx="6" cy="9" r="5" stroke="#000" fill="none" stroke-width="1" /><rect x="3" y="14" width="6" height="2" stroke="none" fill="#000" stroke-width="1" /><line x1="4" y1="1" x2="15" y2="12" stroke="#000" stroke-width="1" /><rect x="8.5" y="4.5" width="3" height="3" fill="none" stroke="#2b2bff" stroke-width="1"/></g>
<g transform="translate(1734,382)"><path d="M1 2q6 0 7 8l-4 5" stroke="#000" fill="none" stroke-width="1" /><line x1="8" y1="8" x2="14" y2="13" stroke="#000" stroke-width="1" /><rect x="6" y="1.5" width="3" height="3" stroke="#f00" fill="#f00" stroke-width="1" /><rect x="12.5" y="11.5" width="3" height="3" fill="none" stroke="#2b2bff" stroke-width="1"/></g>
<g transform="translate(1762,382)"><path d="M1 1q7 2 6 11l-4 4" stroke="#000" fill="none" stroke-width="1" /><line x1="7" y1="5" x2="13" y2="12" stroke="#000" stroke-width="1" /><rect x="4.5" y="1.5" width="3" height="3" fill="none" stroke="#2b2bff" stroke-width="1"/><rect x="11.5" y="10.5" width="3" height="3" stroke="#f00" fill="#fff" stroke-width="1" /></g>
<g transform="translate(1790,382)"><path d="M1 1q7 1 8 8l5 5M3 12q4-4 8 0v3" stroke="#000" fill="none" stroke-width="1" /><rect x="2.5" y="0.5" width="3" height="3" fill="none" stroke="#2b2bff" stroke-width="1"/><rect x="10.5" y="8.5" width="3" height="3" fill="none" stroke="#2b2bff" stroke-width="1"/></g>
<g transform="translate(1818,382)"><path d="M1 8h14M8 1l-3 9l-1 6" stroke="#000" fill="none" stroke-width="1" /><rect x="2.5" y="8.5" width="3" height="3" fill="none" stroke="#2b2bff" stroke-width="1"/><rect x="8.5" y="4.5" width="3" height="3" fill="none" stroke="#2b2bff" stroke-width="1"/></g>
<g transform="translate(1846,382)"><path d="M8 1v14M8 10l-5-5M8 10l5-5" stroke="#000" fill="none" stroke-width="1" /><rect x="6.5" y="-0.5" width="3" height="3" fill="none" stroke="#2b2bff" stroke-width="1"/><rect x="0.5" y="3.5" width="3" height="3" fill="none" stroke="#2b2bff" stroke-width="1"/><rect x="12.5" y="3.5" width="3" height="3" fill="none" stroke="#2b2bff" stroke-width="1"/><rect x="6.5" y="13.5" width="3" height="3" fill="none" stroke="#2b2bff" stroke-width="1"/></g>
<g transform="translate(1678,452)"><circle cx="8" cy="8" r="6.5" stroke="#000" fill="none" stroke-width="1" /><rect x="5" y="14" width="6" height="2" stroke="none" fill="#000" stroke-width="1" /><rect x="6.5" y="6.5" width="3" height="3" fill="none" stroke="#2b2bff" stroke-width="1"/><rect x="12.5" y="6.5" width="3" height="3" fill="none" stroke="#2b2bff" stroke-width="1"/></g>
<g transform="translate(1706,452)"><circle cx="8" cy="8" r="6.5" stroke="#000" fill="none" stroke-width="1" /><circle cx="8" cy="8" r="4.5" stroke="#000" fill="none" stroke-width="1" /><rect x="5" y="14" width="6" height="2" stroke="none" fill="#000" stroke-width="1" /><rect x="6.5" y="6.5" width="3" height="3" fill="none" stroke="#2b2bff" stroke-width="1"/><rect x="9.5" y="6.5" width="3" height="3" fill="none" stroke="#2b2bff" stroke-width="1"/><rect x="12.5" y="6.5" width="3" height="3" fill="none" stroke="#2b2bff" stroke-width="1"/></g>
<g transform="translate(1734,452)"><circle cx="8" cy="8" r="6.5" stroke="#000" fill="none" stroke-width="1" /><rect x="5" y="14" width="6" height="2" stroke="none" fill="#000" stroke-width="1" /><rect x="0.5" y="6.5" width="3" height="3" fill="none" stroke="#2b2bff" stroke-width="1"/><rect x="12.5" y="6.5" width="3" height="3" fill="none" stroke="#2b2bff" stroke-width="1"/></g>
<g transform="translate(1762,452)"><circle cx="8" cy="8" r="6.5" stroke="#000" fill="none" stroke-width="1" /><line x1="0" y1="0" x2="6" y2="2" stroke="#000" stroke-width="1" /><rect x="5" y="14" width="6" height="2" stroke="none" fill="#000" stroke-width="1" /><rect x="3.5" y="-0.5" width="3" height="3" fill="none" stroke="#2b2bff" stroke-width="1"/><rect x="10.5" y="11.5" width="3" height="3" fill="none" stroke="#2b2bff" stroke-width="1"/></g>
<g transform="translate(1790,452)"><circle cx="8" cy="8" r="6.5" stroke="#000" fill="none" stroke-width="1" /><line x1="0" y1="0.5" x2="15" y2="0.5" stroke="#000" stroke-width="1.3" /><line x1="8" y1="2" x2="8" y2="14" stroke="#888" stroke-width="0.7" stroke-dasharray="1 1"/><rect x="5" y="14" width="6" height="2" stroke="none" fill="#000" stroke-width="1" /><rect x="12.5" y="6.5" width="3" height="3" fill="none" stroke="#2b2bff" stroke-width="1"/><rect x="6.5" y="12.5" width="3" height="3" fill="none" stroke="#2b2bff" stroke-width="1"/></g>
<g transform="translate(1818,452)"><circle cx="8" cy="8" r="6.5" stroke="#000" fill="none" stroke-width="1" /><rect x="0.5" y="0.5" width="3" height="3" fill="none" stroke="#2b2bff" stroke-width="1"/><rect x="10.5" y="0.5" width="3" height="3" fill="none" stroke="#2b2bff" stroke-width="1"/><rect x="6.5" y="12.5" width="3" height="3" fill="none" stroke="#2b2bff" stroke-width="1"/></g>
<g transform="translate(1846,452)"><circle cx="8" cy="8" r="6" stroke="#000" fill="none" stroke-width="1" /><line x1="0" y1="5" x2="4" y2="1" stroke="#000" stroke-width="1" /><line x1="2" y1="16" x2="4" y2="11" stroke="#000" stroke-width="1" /><rect x="4.5" y="0.5" width="3" height="3" fill="none" stroke="#2b2bff" stroke-width="1"/><rect x="0.5" y="7.5" width="3" height="3" fill="none" stroke="#2b2bff" stroke-width="1"/><rect x="11.5" y="11.5" width="3" height="3" fill="none" stroke="#2b2bff" stroke-width="1"/></g>
<g transform="translate(1678,481)"><circle cx="9" cy="10" r="4.5" stroke="#000" fill="none" stroke-width="1" /><line x1="0" y1="12" x2="13" y2="0" stroke="#000" stroke-width="1" /><rect x="5.5" y="5.5" width="3" height="3" fill="none" stroke="#2b2bff" stroke-width="1"/><rect x="8.5" y="8.5" width="3" height="3" fill="none" stroke="#2b2bff" stroke-width="1"/><rect x="11.5" y="5.5" width="3" height="3" fill="none" stroke="#2b2bff" stroke-width="1"/></g>
<g transform="translate(1706,481)"><ellipse cx="7.5" cy="8" rx="7" ry="4" fill="none" stroke="#000"/><rect x="-0.5" y="2.5" width="3" height="3" fill="none" stroke="#2b2bff" stroke-width="1"/><rect x="12.5" y="9.5" width="3" height="3" fill="none" stroke="#2b2bff" stroke-width="1"/></g>
<g transform="translate(1734,481)"><path d="M1 15q2-12 13-14q-2 12-13 14z" stroke="#000" fill="none" stroke-width="1" /><rect x="1" y="13" width="3" height="3" stroke="none" fill="#000" stroke-width="1" /><rect x="5.5" y="5.5" width="3" height="3" fill="none" stroke="#2b2bff" stroke-width="1"/><rect x="9.5" y="2.5" width="3" height="3" fill="none" stroke="#2b2bff" stroke-width="1"/><rect x="11.5" y="-0.5" width="3" height="3" fill="none" stroke="#2b2bff" stroke-width="1"/></g>
<g transform="translate(1762,481)"><ellipse cx="7.5" cy="11" rx="7" ry="4" fill="none" stroke="#000"/><rect x="5" y="14" width="6" height="2" stroke="none" fill="#000" stroke-width="1" /><text x="2" y="5" font-size="6" fill="#33f" font-weight="700">a:b</text></g>
<g transform="translate(1678,581)"><path d="M1 14q6-18 13 0" stroke="#000" fill="none" stroke-width="1" /><rect x="-0.5" y="12.5" width="3" height="3" fill="none" stroke="#2b2bff" stroke-width="1"/><rect x="0.5" y="-0.5" width="3" height="3" fill="none" stroke="#2b2bff" stroke-width="1"/><rect x="11.5" y="-0.5" width="3" height="3" fill="none" stroke="#2b2bff" stroke-width="1"/><rect x="12.5" y="12.5" width="3" height="3" fill="none" stroke="#2b2bff" stroke-width="1"/></g>
<g transform="translate(1706,581)"><path d="M2 14l4-3q6-3 3-5h-3q-1-5 6-4" stroke="#000" fill="none" stroke-width="1" /><rect x="0.5" y="12.5" width="3" height="3" fill="none" stroke="#2b2bff" stroke-width="1"/><rect x="5.5" y="5.5" width="3" height="3" fill="none" stroke="#2b2bff" stroke-width="1"/><rect x="10.5" y="0.5" width="3" height="3" fill="none" stroke="#2b2bff" stroke-width="1"/></g>
<g transform="translate(1734,581)"><path d="M1 14l3-12h4l5 12" stroke="#000" fill="none" stroke-width="1" /><rect x="-0.5" y="12.5" width="3" height="3" fill="none" stroke="#2b2bff" stroke-width="1"/><rect x="1.5" y="0.5" width="3" height="3" fill="none" stroke="#2b2bff" stroke-width="1"/><rect x="7.5" y="0.5" width="3" height="3" fill="none" stroke="#2b2bff" stroke-width="1"/><rect x="11.5" y="12.5" width="3" height="3" fill="none" stroke="#2b2bff" stroke-width="1"/></g>
<g transform="translate(1762,581)"><path d="M3 12q-3-10 6-10q4 1 1 6q-3 3-4-1" stroke="#000" fill="none" stroke-width="1" /><rect x="0.5" y="10.5" width="3" height="3" fill="none" stroke="#2b2bff" stroke-width="1"/><rect x="8.5" y="3.5" width="3" height="3" fill="none" stroke="#2b2bff" stroke-width="1"/></g>
<g transform="translate(1790,581)"><path d="M3 12q-3-10 6-10q4 1 1 6q-3 3-4-1" stroke="#000" fill="none" stroke-width="1" /><rect x="0.5" y="10.5" width="3" height="3" fill="none" stroke="#2b2bff" stroke-width="1"/><rect x="8.5" y="3.5" width="3" height="3" fill="none" stroke="#2b2bff" stroke-width="1"/></g>
<g transform="translate(1818,581)"><path d="M3 14q-5-4 0-7q-2-6 5-6q4 0 4 4q4 2 0 8z" stroke="#000" fill="none" stroke-width="1" /><rect x="4" y="13" width="7" height="2" stroke="none" fill="#000" stroke-width="1" /><rect x="4.5" y="0.5" width="3" height="3" fill="none" stroke="#2b2bff" stroke-width="1"/><rect x="4.5" y="12.5" width="3" height="3" fill="none" stroke="#2b2bff" stroke-width="1"/><rect x="8.5" y="12.5" width="3" height="3" fill="none" stroke="#2b2bff" stroke-width="1"/></g>
<g transform="translate(1846,581)"><path d="M1 12l5-5l3 6l5-11" stroke="#000" fill="none" stroke-width="1" stroke-dasharray="1.5 1"/><rect x="0" y="11" width="3" height="3" stroke="#000" fill="none" stroke-width="1" /><rect x="7" y="12" width="3" height="3" stroke="#000" fill="#000" stroke-width="1" /><rect x="13" y="1" width="3" height="3" stroke="#000" fill="none" stroke-width="1" /><rect x="5" y="5" width="2" height="2" stroke="none" fill="#000" stroke-width="1" /></g>
<g transform="translate(1678,609)"><path d="M1 12q6-14 13 0" stroke="#aaa" fill="none" stroke-width="1.2" /></g>
<g transform="translate(1678,680)"><line x1="1" y1="14" x2="8" y2="7" stroke="#000" stroke-width="1" /><line x1="7" y1="14" x2="14" y2="7" stroke="#000" stroke-width="1" /><rect x="0.5" y="11.5" width="3" height="3" fill="none" stroke="#2b2bff" stroke-width="1"/><rect x="10.5" y="0.5" width="3" height="3" fill="none" stroke="#2b2bff" stroke-width="1"/></g>
<g transform="translate(1706,680)"><path d="M1 14l7-7l7 7M3 14l5-5l5 5M1 9l7-7l7 7" stroke="#000" fill="none" stroke-width="1" /><rect x="2.5" y="9.5" width="3" height="3" fill="none" stroke="#2b2bff" stroke-width="1"/><rect x="6.5" y="4.5" width="3" height="3" fill="none" stroke="#2b2bff" stroke-width="1"/><rect x="10.5" y="9.5" width="3" height="3" fill="none" stroke="#2b2bff" stroke-width="1"/></g>
<g transform="translate(1734,680)"><path d="M5 1h6l4 4v6l-4 4h-6l-4-4v-6z" stroke="#000" fill="none" stroke-width="1" /><circle cx="8" cy="8" r="3.5" stroke="#000" fill="none" stroke-width="1" /><rect x="6.5" y="6.5" width="3" height="3" fill="none" stroke="#2b2bff" stroke-width="1"/><rect x="1.5" y="-0.5" width="3" height="3" fill="none" stroke="#2b2bff" stroke-width="1"/><rect x="5" y="14" width="6" height="2" stroke="none" fill="#000" stroke-width="1" /></g>
<g transform="translate(1762,680)"><path d="M1 3h7l7 5v6h-14z" stroke="#000" fill="none" stroke-width="1" /><path d="M3 5h4l5 4v3h-9z" stroke="#000" fill="none" stroke-width="1" /><rect x="0.5" y="0.5" width="3" height="3" fill="none" stroke="#2b2bff" stroke-width="1"/><rect x="5.5" y="0.5" width="3" height="3" fill="none" stroke="#2b2bff" stroke-width="1"/><rect x="11.5" y="5.5" width="3" height="3" fill="none" stroke="#2b2bff" stroke-width="1"/><rect x="11.5" y="11.5" width="3" height="3" fill="none" stroke="#2b2bff" stroke-width="1"/><rect x="0.5" y="11.5" width="3" height="3" fill="none" stroke="#2b2bff" stroke-width="1"/></g>
<g transform="translate(1790,680)"><rect x="0.5" y="0.5" width="15" height="15" stroke="#000" fill="none" stroke-width="2" /><rect x="4.5" y="4.5" width="7" height="7" stroke="#000" fill="none" stroke-width="1" /><rect x="11.5" y="11.5" width="3" height="3" fill="none" stroke="#2b2bff" stroke-width="1"/></g>
<g transform="translate(1818,680)"><path d="M1 8l6-6l7 7l-6 6z" stroke="#000" fill="none" stroke-width="1" /><path d="M3 8l4-4l5 5l-4 4z" stroke="#000" fill="none" stroke-width="1" /><rect x="5.5" y="0.5" width="3" height="3" fill="none" stroke="#2b2bff" stroke-width="1"/><rect x="6.5" y="13.5" width="3" height="3" fill="none" stroke="#2b2bff" stroke-width="1"/><text x="11" y="15" font-size="5" fill="#33f">k</text></g>
<g transform="translate(1846,680)"><path d="M1 5l7-4l7 10M3 4l9 12" stroke="#000" fill="none" stroke-width="1" /><rect x="4.5" y="3.5" width="3" height="3" fill="none" stroke="#2b2bff" stroke-width="1"/><rect x="10.5" y="11.5" width="3" height="3" fill="none" stroke="#2b2bff" stroke-width="1"/></g>
<rect x="43" y="951" width="1594" height="1" fill="#e6e6e6"/>
<rect x="43" y="952" width="1594" height="22" fill="#f0f0f0" />
<path d="M52.5 953.5V970.5q1 2 3 2H113.5q2 0 2-2V953.5" fill="#f0f0f0" stroke="#222" stroke-width="1"/>
<rect x="52" y="953" width="64" height="1" fill="#f0f0f0"/>
<rect x="47" y="953" width="4" height="1" fill="#555"/>
<g transform="translate(57,956)"><path d="M0.5 4l4-3h5l1 3v6l-3 2h-7z" stroke="#000" fill="#ddd" stroke-width="1.2" /><circle cx="8.5" cy="9" r="4" fill="#ccc" stroke="#000" stroke-width="1"/><circle cx="7.5" cy="8" r="1.5" fill="#fff"/></g>
<text x="73" y="966" font-size="12" fill="#000" font-weight="700" textLength="33" lengthAdjust="spacingAndGlyphs" >Model</text>
<path d="M118.5 953.5H185.5V969.5q0 1.5-1.5 1.5H120q-1.5 0-1.5-1.5z" fill="#e1e1e1" stroke="#d0d0d0"/>
<rect x="116" y="953" width="94" height="1" fill="#555"/>
<g transform="translate(124,955)"><path d="M0.5 0.5h7l3 3v9h-10z" stroke="#000" fill="#fff" stroke-width="1.2" /><text x="2.5" y="11" font-size="7" font-weight="700" fill="#00008b">1</text></g>
<text x="139" y="966" font-size="12" fill="#777" font-weight="400" textLength="38" lengthAdjust="spacingAndGlyphs" >Paper 1</text>
<rect x="214" y="953" width="1" height="21" fill="#606060"/>
<path d="M226 959l-4 4l4 4" fill="none" stroke="#505050" stroke-width="2"/>
<path d="M1626 959l4 4l-4 4" fill="none" stroke="#505050" stroke-width="2"/>
<rect x="1654" y="952" width="1" height="22" fill="#e8e8e8"/>
<rect x="0" y="974" width="1920" height="39" fill="#f0f0f0" />
<rect x="0" y="974" width="1920" height="1" fill="#f8f8f8"/>
<rect x="3" y="976" width="2" height="2" fill="#b8b8b8" />
<rect x="3" y="980" width="2" height="2" fill="#b8b8b8" />
<rect x="3" y="984" width="2" height="2" fill="#b8b8b8" />
<rect x="3" y="988" width="2" height="2" fill="#b8b8b8" />
<rect x="3" y="992" width="2" height="2" fill="#b8b8b8" />
<rect x="3" y="996" width="2" height="2" fill="#b8b8b8" />
<rect x="3" y="1000" width="2" height="2" fill="#b8b8b8" />
<rect x="3" y="1004" width="2" height="2" fill="#b8b8b8" />
<rect x="3" y="1008" width="2" height="2" fill="#b8b8b8" />
<path d="M15 989l10 10M25 989l-10 10" stroke="#b0b0b0" stroke-width="2.5"/>
<g transform="translate(36,988)"><rect x="0.5" y="0.5" width="14" height="12" stroke="#aaa" fill="#f4f4f4" stroke-width="1" /><rect x="0.5" y="0.5" width="14" height="2" stroke="none" fill="#bbb" stroke-width="1" /><rect x="2" y="4" width="3" height="2" stroke="none" fill="#bbb" stroke-width="1" /><rect x="2" y="7" width="3" height="2" stroke="none" fill="#bbb" stroke-width="1" /><rect x="2" y="10" width="3" height="2" stroke="none" fill="#bbb" stroke-width="1" /><rect x="6" y="4" width="3" height="2" stroke="none" fill="#bbb" stroke-width="1" /><rect x="6" y="7" width="3" height="2" stroke="none" fill="#bbb" stroke-width="1" /><rect x="6" y="10" width="3" height="2" stroke="none" fill="#bbb" stroke-width="1" /><rect x="10" y="4" width="3" height="2" stroke="none" fill="#bbb" stroke-width="1" /><rect x="10" y="7" width="3" height="2" stroke="none" fill="#bbb" stroke-width="1" /><rect x="10" y="10" width="3" height="2" stroke="none" fill="#bbb" stroke-width="1" /></g>
<rect x="56" y="980" width="1" height="27" fill="#8c8c8c"/>
<text x="62" y="990" font-size="12" fill="#000" font-weight="400" textLength="37" lengthAdjust="spacingAndGlyphs" >Scale X</text>
<rect x="61" y="995" width="39" height="14" fill="#f0f0f0" />
<rect x="61" y="995" width="39" height="1" fill="#a8a8a8"/>
<rect x="61" y="995" width="1" height="14" fill="#a8a8a8"/>
<text x="64" y="1007" font-size="12" fill="#8a8a8a" font-weight="400" >1</text>
<rect x="100" y="996" width="12" height="13" fill="#ececec" />
<path d="M103 1001l3-3l3 3zM103 1004l3 3l3-3z" fill="#777"/>
<text x="117" y="990" font-size="12" fill="#000" font-weight="400" textLength="37" lengthAdjust="spacingAndGlyphs" >Scale Y</text>
<rect x="116" y="995" width="39" height="14" fill="#f0f0f0" />
<rect x="116" y="995" width="39" height="1" fill="#a8a8a8"/>
<rect x="116" y="995" width="1" height="14" fill="#a8a8a8"/>
<text x="119" y="1007" font-size="12" fill="#8a8a8a" font-weight="400" >1</text>
<rect x="155" y="996" width="12" height="13" fill="#ececec" />
<path d="M158 1001l3-3l3 3zM158 1004l3 3l3-3z" fill="#777"/>
<text x="172" y="990" font-size="12" fill="#000" font-weight="400" textLength="37" lengthAdjust="spacingAndGlyphs" >Scale Z</text>
<rect x="171" y="995" width="39" height="14" fill="#f0f0f0" />
<rect x="171" y="995" width="39" height="1" fill="#a8a8a8"/>
<rect x="171" y="995" width="1" height="14" fill="#a8a8a8"/>
<text x="174" y="1007" font-size="12" fill="#8a8a8a" font-weight="400" >1</text>
<rect x="210" y="996" width="12" height="13" fill="#ececec" />
<path d="M213 1001l3-3l3 3zM213 1004l3 3l3-3z" fill="#777"/>
<text x="227" y="990" font-size="12" fill="#000" font-weight="400" textLength="31" lengthAdjust="spacingAndGlyphs" >Size X</text>
<rect x="226" y="995" width="52" height="14" fill="#f0f0f0" />
<rect x="226" y="995" width="52" height="1" fill="#a8a8a8"/>
<rect x="226" y="995" width="1" height="14" fill="#a8a8a8"/>
<text x="229" y="1007" font-size="12" fill="#8a8a8a" font-weight="400" >0 mm</text>
<text x="282" y="990" font-size="12" fill="#000" font-weight="400" textLength="31" lengthAdjust="spacingAndGlyphs" >Size Y</text>
<rect x="281" y="995" width="52" height="14" fill="#f0f0f0" />
<rect x="281" y="995" width="52" height="1" fill="#a8a8a8"/>
<rect x="281" y="995" width="1" height="14" fill="#a8a8a8"/>
<text x="284" y="1007" font-size="12" fill="#8a8a8a" font-weight="400" >0 mm</text>
<text x="337" y="990" font-size="12" fill="#000" font-weight="400" textLength="31" lengthAdjust="spacingAndGlyphs" >Size Z</text>
<rect x="336" y="995" width="52" height="14" fill="#f0f0f0" />
<rect x="336" y="995" width="52" height="1" fill="#a8a8a8"/>
<rect x="336" y="995" width="1" height="14" fill="#a8a8a8"/>
<text x="339" y="1007" font-size="12" fill="#8a8a8a" font-weight="400" >0 mm</text>
<text x="392" y="990" font-size="12" fill="#000" font-weight="400" textLength="28" lengthAdjust="spacingAndGlyphs" >Pos X</text>
<rect x="391" y="995" width="52" height="14" fill="#f0f0f0" />
<rect x="391" y="995" width="52" height="1" fill="#a8a8a8"/>
<rect x="391" y="995" width="1" height="14" fill="#a8a8a8"/>
<text x="394" y="1007" font-size="12" fill="#8a8a8a" font-weight="400" >0 mm</text>
<text x="447" y="990" font-size="12" fill="#000" font-weight="400" textLength="28" lengthAdjust="spacingAndGlyphs" >Pos Y</text>
<rect x="446" y="995" width="52" height="14" fill="#f0f0f0" />
<rect x="446" y="995" width="52" height="1" fill="#a8a8a8"/>
<rect x="446" y="995" width="1" height="14" fill="#a8a8a8"/>
<text x="449" y="1007" font-size="12" fill="#8a8a8a" font-weight="400" >0 mm</text>
<text x="502" y="990" font-size="12" fill="#000" font-weight="400" textLength="28" lengthAdjust="spacingAndGlyphs" >Pos Z</text>
<rect x="501" y="995" width="52" height="14" fill="#f0f0f0" />
<rect x="501" y="995" width="52" height="1" fill="#a8a8a8"/>
<rect x="501" y="995" width="1" height="14" fill="#a8a8a8"/>
<text x="504" y="1007" font-size="12" fill="#8a8a8a" font-weight="400" >0 mm</text>
<text x="557" y="990" font-size="12" fill="#000" font-weight="400" textLength="37" lengthAdjust="spacingAndGlyphs" >Delta X</text>
<rect x="556" y="995" width="52" height="14" fill="#f0f0f0" />
<rect x="556" y="995" width="52" height="1" fill="#a8a8a8"/>
<rect x="556" y="995" width="1" height="14" fill="#a8a8a8"/>
<text x="559" y="1007" font-size="12" fill="#8a8a8a" font-weight="400" >0 mm</text>
<text x="612" y="990" font-size="12" fill="#000" font-weight="400" textLength="37" lengthAdjust="spacingAndGlyphs" >Delta Y</text>
<rect x="611" y="995" width="52" height="14" fill="#f0f0f0" />
<rect x="611" y="995" width="52" height="1" fill="#a8a8a8"/>
<rect x="611" y="995" width="1" height="14" fill="#a8a8a8"/>
<text x="614" y="1007" font-size="12" fill="#8a8a8a" font-weight="400" >0 mm</text>
<text x="667" y="990" font-size="12" fill="#000" font-weight="400" textLength="37" lengthAdjust="spacingAndGlyphs" >Delta Z</text>
<rect x="666" y="995" width="52" height="14" fill="#f0f0f0" />
<rect x="666" y="995" width="52" height="1" fill="#a8a8a8"/>
<rect x="666" y="995" width="1" height="14" fill="#a8a8a8"/>
<text x="669" y="1007" font-size="12" fill="#8a8a8a" font-weight="400" >0 mm</text>
<text x="722" y="990" font-size="12" fill="#000" font-weight="400" textLength="28" lengthAdjust="spacingAndGlyphs" >Rot X</text>
<rect x="721" y="995" width="39" height="14" fill="#f0f0f0" />
<rect x="721" y="995" width="39" height="1" fill="#a8a8a8"/>
<rect x="721" y="995" width="1" height="14" fill="#a8a8a8"/>
<text x="724" y="1007" font-size="12" fill="#8a8a8a" font-weight="400" >0</text>
<rect x="760" y="996" width="12" height="13" fill="#ececec" />
<path d="M763 1001l3-3l3 3zM763 1004l3 3l3-3z" fill="#777"/>
<text x="777" y="990" font-size="12" fill="#000" font-weight="400" textLength="28" lengthAdjust="spacingAndGlyphs" >Rot Y</text>
<rect x="776" y="995" width="39" height="14" fill="#f0f0f0" />
<rect x="776" y="995" width="39" height="1" fill="#a8a8a8"/>
<rect x="776" y="995" width="1" height="14" fill="#a8a8a8"/>
<text x="779" y="1007" font-size="12" fill="#8a8a8a" font-weight="400" >0</text>
<rect x="815" y="996" width="12" height="13" fill="#ececec" />
<path d="M818 1001l3-3l3 3zM818 1004l3 3l3-3z" fill="#777"/>
<text x="832" y="990" font-size="12" fill="#000" font-weight="400" textLength="28" lengthAdjust="spacingAndGlyphs" >Rot Z</text>
<rect x="831" y="995" width="39" height="14" fill="#f0f0f0" />
<rect x="831" y="995" width="39" height="1" fill="#a8a8a8"/>
<rect x="831" y="995" width="1" height="14" fill="#a8a8a8"/>
<text x="834" y="1007" font-size="12" fill="#8a8a8a" font-weight="400" >0</text>
<rect x="870" y="996" width="12" height="13" fill="#ececec" />
<path d="M873 1001l3-3l3 3zM873 1004l3 3l3-3z" fill="#777"/>
<text x="887" y="990" font-size="12" fill="#000" font-weight="400" textLength="50" lengthAdjust="spacingAndGlyphs" >Delta Dist</text>
<rect x="886" y="995" width="52" height="14" fill="#f0f0f0" />
<rect x="886" y="995" width="52" height="1" fill="#a8a8a8"/>
<rect x="886" y="995" width="1" height="14" fill="#a8a8a8"/>
<text x="889" y="1007" font-size="12" fill="#8a8a8a" font-weight="400" >0 mm</text>
<text x="942" y="990" font-size="12" fill="#000" font-weight="400" textLength="50" lengthAdjust="spacingAndGlyphs" >Delta Ang</text>
<rect x="941" y="995" width="39" height="14" fill="#f0f0f0" />
<rect x="941" y="995" width="39" height="1" fill="#a8a8a8"/>
<rect x="941" y="995" width="1" height="14" fill="#a8a8a8"/>
<text x="944" y="1007" font-size="12" fill="#8a8a8a" font-weight="400" >0</text>
<rect x="980" y="996" width="12" height="13" fill="#ececec" />
<path d="M983 1001l3-3l3 3zM983 1004l3 3l3-3z" fill="#777"/>
<rect x="997" y="980" width="1" height="27" fill="#8c8c8c"/>
<g transform="translate(1004,986)"><path d="M1 6l5-4h8v4l-4 3h-9z" stroke="#444" fill="#ddd" stroke-width="1" /><rect x="1.5" y="8.5" width="6" height="6" stroke="#444" fill="#fff" stroke-width="1" /><rect x="3" y="10" width="3" height="3" stroke="#444" fill="none" stroke-width="1" /></g>
<g transform="translate(1027,986)"><rect x="0.5" y="0.5" width="6" height="6" stroke="#444" fill="none" stroke-width="1" /><line x1="3" y1="15" x2="13" y2="1" stroke="#444" stroke-width="1" /><circle cx="10" cy="11" r="3" stroke="#444" fill="none" stroke-width="1" /></g>
<g transform="translate(1049,986)"><path d="M1 14q2-8 8-9q3 0 5-4" stroke="#444" fill="none" stroke-width="1.5" /><path d="M9 10l4 4M13 10v4h-4" stroke="#33f" fill="none" stroke-width="1" /></g>
<rect x="1069" y="980" width="1" height="27" fill="#8c8c8c"/>
<rect x="1075.5" y="985.5" width="17" height="18" fill="#cce8ff" stroke="#99d1ff"/>
<g transform="translate(1077,987)"><rect x="0.75" y="0.75" width="13.5" height="13.5" stroke="#111" fill="#0f7060" stroke-width="1.5" /><path d="M2 2H12.5V12.5z" fill="#22dd44"/><line x1="2" y1="2" x2="12.5" y2="12.5" stroke="#111" stroke-width="1.2" /><rect x="2.5" y="2.5" width="9" height="9" stroke="#111" fill="none" stroke-width="0.8" stroke-dasharray="1 1"/></g>
<g transform="translate(1098,986)"><path d="M1 15.5h13v-13z" stroke="#333" fill="#2a9a8a" stroke-width="1.2" /><rect x="9.5" y="0.5" width="7" height="6" stroke="#333" fill="#fff" stroke-width="1" /><text x="10" y="5.5" font-size="5" font-weight="700" fill="#000">WP</text></g>
<g transform="translate(1120,986)"><path d="M1 15.5h13v-13z" stroke="#333" fill="#33dd44" stroke-width="1.2" stroke-dasharray="1.5 0.8"/><rect x="9.5" y="0.5" width="7" height="6" stroke="#333" fill="#fff" stroke-width="1" /><text x="10.3" y="5.5" font-size="5" font-weight="700" fill="#000">CP</text></g>
<g transform="translate(1142,986)"><path d="M1 5h6v-3h3v6h-5v3h5v4h-6v-4h-3z" stroke="#333" fill="#33dd44" stroke-width="1" stroke-dasharray="1.2 0.8"/><rect x="10.5" y="0.5" width="6" height="7" stroke="#333" fill="#fff" stroke-width="1" /><text x="12" y="6.5" font-size="6" font-weight="700" fill="#000">F</text></g>
<rect x="1164" y="980" width="1" height="27" fill="#8c8c8c"/>
<g transform="translate(1170,986)"><path d="M1 7l4-4h6l2 2v3h-12z" stroke="#999" fill="#ccc" stroke-width="1" /><path d="M9 6l0 9l2-2l2 3l1-1l-2-3h3z" stroke="#999" fill="#eee" stroke-width="1" /></g>
<g transform="translate(1192,986)"><path d="M1 1h7l-1 6z" stroke="#f33" fill="#f33" stroke-width="1" /><path d="M8 13l6-6l1 7z" stroke="#4488ee" fill="#4488ee" stroke-width="1" /><line x1="3" y1="2" x2="13" y2="13" stroke="#bb2" stroke-width="1" stroke-dasharray="1 1"/></g>
<g transform="translate(1214,986)"><path d="M1 14l5-11l5 11z" stroke="#444" fill="none" stroke-width="1" /><path d="M5 14l5-11l5 11z" stroke="#f33" fill="none" stroke-width="1" /></g>
<g transform="translate(1236,986)"><path d="M3 8q0-7 5-7q5 0 5 7zM1 10h14v3h-14z" stroke="#aaa" fill="#eee" stroke-width="1" /></g>
<g transform="translate(1258,986)"><rect x="0.5" y="0.5" width="15" height="15" stroke="#888" fill="#eef" stroke-width="1" stroke-dasharray="1 1"/><rect x="1" y="6" width="10" height="9" stroke="none" fill="#9bd" stroke-width="1" /><circle cx="7" cy="10" r="3.5" stroke="#333" fill="none" stroke-width="1" /><line x1="1" y1="15" x2="15" y2="1" stroke="#f22" stroke-width="1" /></g>
<g transform="translate(1279,986)"><rect x="0.5" y="0.5" width="14" height="14" stroke="#aaa" fill="#eee" stroke-width="1" /><path d="M3 3l9 9M12 3l-9 9" stroke="#aaa" fill="none" stroke-width="1" /><rect x="4.5" y="4.5" width="6" height="6" stroke="#aaa" fill="none" stroke-width="1" /></g>
<g transform="translate(1301,986)"><rect x="0.5" y="5.5" width="9" height="9" stroke="#aaa" fill="none" stroke-width="1" /><rect x="4.5" y="0.5" width="6" height="6" stroke="#aaa" fill="none" stroke-width="1" /><line x1="2" y1="8" x2="7" y2="8" stroke="#aaa" stroke-width="1" /></g>
<g transform="translate(1323,986)"><rect x="0.5" y="5.5" width="9" height="9" stroke="#aaa" fill="none" stroke-width="1" /><rect x="3.5" y="8.5" width="4" height="4" stroke="#aaa" fill="none" stroke-width="1" /><line x1="13" y1="0" x2="13" y2="6" stroke="#aaa" stroke-width="1" /><line x1="11" y1="3" x2="15" y2="3" stroke="#aaa" stroke-width="1" /></g>
<g transform="translate(1345,986)"><path d="M0 1h7l6 6M3 15v-8h10v8" stroke="#aaa" fill="none" stroke-width="1" /><rect x="6.5" y="9.5" width="4" height="4" stroke="#aaa" fill="none" stroke-width="1" /></g>
<g transform="translate(1367,986)"><path d="M1 9h9v6h-9zM3 6l6-4h5v4M3 6h10" stroke="#aaa" fill="none" stroke-width="1" /></g>
<g transform="translate(1389,986)"><rect x="0.5" y="6.5" width="8" height="8" stroke="#aaa" fill="none" stroke-width="1" /><rect x="8.5" y="0.5" width="6" height="6" stroke="#aaa" fill="none" stroke-width="1" /><line x1="4" y1="7" x2="4" y2="15" stroke="#aaa" stroke-width="1" /></g>
<g transform="translate(1412,986)"><rect x="0.5" y="0.5" width="15" height="15" stroke="#888" fill="#dde" stroke-width="1" stroke-dasharray="1 1"/><rect x="3" y="5" width="10" height="10" stroke="#33c" fill="none" stroke-width="1" /><circle cx="8" cy="10" r="3.5" stroke="#333" fill="none" stroke-width="1" /><line x1="1" y1="15" x2="15" y2="1" stroke="#f22" stroke-width="1" /></g>
<rect x="0" y="1014" width="1920" height="26" fill="#f0f0f0" />
<text x="9" y="1030" font-size="12" fill="#000" font-weight="400" textLength="79" lengthAdjust="spacingAndGlyphs" >Select object(s)</text>
<text x="1441" y="1032" font-size="12" fill="#000" font-weight="400" textLength="30" lengthAdjust="spacingAndGlyphs" >SNAP</text>
<rect x="1473" y="1017" width="1" height="21" fill="#d8d8d8"/>
<text x="1479" y="1032" font-size="12" fill="#000" font-weight="400" textLength="23" lengthAdjust="spacingAndGlyphs" >GEO</text>
<rect x="1504" y="1017" width="1" height="21" fill="#d8d8d8"/>
<rect x="1522.5" y="1019.5" width="6" height="6" fill="none" stroke="#444"/>
<text x="1521" y="1037" font-size="10" fill="#444" font-weight="400" >X</text>
<rect x="1532" y="1019" width="73" height="18" fill="#fff" />
<rect x="1532.5" y="1019.5" width="72" height="17" fill="none" stroke="#000" stroke-width="1" />
<rect x="1618.5" y="1019.5" width="6" height="6" fill="none" stroke="#444"/>
<text x="1617" y="1037" font-size="10" fill="#444" font-weight="400" >Y</text>
<rect x="1628" y="1019" width="73" height="18" fill="#fff" />
<rect x="1628.5" y="1019.5" width="72" height="17" fill="none" stroke="#000" stroke-width="1" />
<rect x="1715.5" y="1019.5" width="6" height="6" fill="none" stroke="#444"/>
<text x="1714" y="1037" font-size="10" fill="#444" font-weight="400" >Z</text>
<rect x="1724" y="1019" width="73" height="18" fill="#fff" />
<rect x="1724.5" y="1019.5" width="72" height="17" fill="none" stroke="#000" stroke-width="1" />
<text x="1535" y="1032" font-size="12" fill="#000" font-weight="400" textLength="68" lengthAdjust="spacingAndGlyphs" >2867,2532 mm</text>
<text x="1631" y="1032" font-size="12" fill="#000" font-weight="400" textLength="56" lengthAdjust="spacingAndGlyphs" >371,187 mm</text>
<text x="1727" y="1032" font-size="12" fill="#000" font-weight="400" textLength="25" lengthAdjust="spacingAndGlyphs" >0 mm</text>
<rect x="1803" y="1017" width="1" height="21" fill="#d8d8d8"/>
<text x="1807" y="1030" font-size="12" fill="#000" font-weight="400" textLength="22" lengthAdjust="spacingAndGlyphs" >21%</text>
<rect x="1859" y="1017" width="1" height="21" fill="#d8d8d8"/>
<text x="1863" y="1030" font-size="12" fill="#000" font-weight="400" textLength="28" lengthAdjust="spacingAndGlyphs" >18:40</text>
<g shape-rendering="crispEdges" font-family="Liberation Sans"><text x="447" y="158" font-size="5.5" font-weight="700" fill="#000" stroke="#000" stroke-width="0.15" textLength="44" lengthAdjust="spacingAndGlyphs">Seba 3mm, Offset 0,0</text><text x="544" y="158" font-size="5.5" font-weight="700" fill="#000" stroke="#000" stroke-width="0.15" textLength="17" lengthAdjust="spacingAndGlyphs">33/1,5/7</text><text x="623" y="158" font-size="5.5" font-weight="700" fill="#000" stroke="#000" stroke-width="0.15" textLength="12" lengthAdjust="spacingAndGlyphs">33/13</text><text x="757" y="158" font-size="5.5" font-weight="700" fill="#000" stroke="#000" stroke-width="0.15" textLength="14" lengthAdjust="spacingAndGlyphs">31+8</text><text x="885" y="158" font-size="5.5" font-weight="700" fill="#000" stroke="#000" stroke-width="0.15" textLength="14" lengthAdjust="spacingAndGlyphs">33806</text><text x="978" y="158" font-size="5.5" font-weight="700" fill="#000" stroke="#000" stroke-width="0.15" textLength="14" lengthAdjust="spacingAndGlyphs">33*09</text><path d="M449.0 175.0 L449.7 173.3 L451.2 172.1 L453.3 171.1 L455.8 170.1 L458.7 169.3 L461.9 168.6 L465.5 167.9 L469.5 167.3 L473.7 166.8 L478.3 166.5 L483.1 166.2 L488.2 166.0 L493.5 165.9 L499.1 166.0 L505.0 166.0 L511.1 166.1 L517.4 166.2 L524.0 166.3 L530.7 166.5 L537.7 166.8 L544.9 167.3 L552.3 167.8 L560.0 168.5 L567.8 169.5 L575.8 170.6 L584.0 172.1 L592.4 173.9 L601.0 175.6 L601.0 176.1 L592.4 176.8 L584.0 177.4 L575.8 177.9 L567.8 178.2 L560.0 178.5 L552.3 178.7 L544.9 178.9 L537.7 179.0 L530.7 179.0 L524.0 179.1 L517.4 179.1 L511.1 179.0 L505.0 179.0 L499.1 179.0 L493.5 178.9 L488.2 178.9 L483.1 178.7 L478.3 178.6 L473.7 178.4 L469.5 178.2 L465.5 177.9 L461.9 177.6 L458.7 177.3 L455.8 177.0 L453.3 176.6 L451.2 176.1 L449.7 175.7 L449.0 175.0Z" stroke="#000" fill="none" stroke-width="1"/><path d="M449.0 173.0h3v4h-3" stroke="#000" fill="none"/><rect x="490.5" y="165.4" width="6" height="3" fill="none" stroke="#000"/><rect x="490.5" y="176.4" width="6" height="3" fill="none" stroke="#000"/><path d="M539.9 167.3v-3h10v3" fill="none" stroke="#000"/><rect x="502.5" y="169.5" width="15" height="7" rx="2" fill="none" stroke="#ff1493" stroke-width="1.2"/><circle cx="495" cy="172" r="2" fill="none" stroke="#000"/><path d="M449.0 188.0 L449.7 186.3 L451.2 185.1 L453.2 184.1 L455.7 183.1 L458.5 182.3 L461.8 181.6 L465.3 180.9 L469.2 180.3 L473.4 179.8 L477.9 179.5 L482.6 179.2 L487.7 179.0 L492.9 178.9 L498.5 179.0 L504.3 179.0 L510.3 179.1 L516.5 179.2 L523.0 179.3 L529.7 179.5 L536.6 179.8 L543.7 180.3 L551.0 180.8 L558.5 181.5 L566.2 182.5 L574.1 183.6 L582.2 185.1 L590.5 186.9 L599.0 188.6 L599.0 189.1 L590.5 189.8 L582.2 190.4 L574.1 190.9 L566.2 191.2 L558.5 191.5 L551.0 191.7 L543.7 191.9 L536.6 192.0 L529.7 192.0 L523.0 192.1 L516.5 192.1 L510.3 192.0 L504.3 192.0 L498.5 192.0 L492.9 191.9 L487.7 191.9 L482.6 191.7 L477.9 191.6 L473.4 191.4 L469.2 191.2 L465.3 190.9 L461.8 190.6 L458.5 190.3 L455.7 190.0 L453.2 189.6 L451.2 189.1 L449.7 188.7 L449.0 188.0Z" stroke="#000" fill="none" stroke-width="1"/><path d="M449.0 186.0h3v4h-3" stroke="#000" fill="none"/><rect x="489.9" y="178.4" width="6" height="3" fill="none" stroke="#000"/><rect x="489.9" y="189.4" width="6" height="3" fill="none" stroke="#000"/><path d="M538.7 180.3v-3h10v3" fill="none" stroke="#000"/><rect x="504.5" y="184.5" width="15" height="6" rx="2" fill="none" stroke="#ff1493" stroke-width="1.2"/><circle cx="496" cy="187" r="2" fill="none" stroke="#000"/><path d="M449.0 204.0 L449.7 202.3 L451.2 201.1 L453.2 200.1 L455.6 199.1 L458.4 198.3 L461.6 197.6 L465.1 196.9 L468.9 196.3 L473.1 195.8 L477.5 195.5 L482.2 195.2 L487.2 195.0 L492.4 194.9 L497.8 195.0 L503.5 195.0 L509.5 195.1 L515.6 195.2 L522.0 195.3 L528.6 195.5 L535.4 195.8 L542.4 196.3 L549.6 196.8 L557.0 197.5 L564.7 198.5 L572.5 199.6 L580.5 201.1 L588.6 202.9 L597.0 204.6 L597.0 205.1 L588.6 205.8 L580.5 206.4 L572.5 206.9 L564.7 207.2 L557.0 207.5 L549.6 207.7 L542.4 207.9 L535.4 208.0 L528.6 208.0 L522.0 208.1 L515.6 208.1 L509.5 208.0 L503.5 208.0 L497.8 208.0 L492.4 207.9 L487.2 207.9 L482.2 207.7 L477.5 207.6 L473.1 207.4 L468.9 207.2 L465.1 206.9 L461.6 206.6 L458.4 206.3 L455.6 206.0 L453.2 205.6 L451.2 205.1 L449.7 204.7 L449.0 204.0Z" stroke="#000" fill="none" stroke-width="1"/><path d="M449.0 202.0h3v4h-3" stroke="#000" fill="none"/><rect x="489.4" y="194.4" width="6" height="3" fill="none" stroke="#000"/><rect x="489.4" y="205.4" width="6" height="3" fill="none" stroke="#000"/><path d="M537.4 196.3v-3h10v3" fill="none" stroke="#000"/><rect x="501.5" y="199.5" width="11" height="4" rx="2" fill="none" stroke="#ff1493" stroke-width="1.2"/><path d="M449.0 217.0 L449.7 215.3 L451.1 214.1 L453.1 213.1 L455.5 212.1 L458.3 211.3 L461.4 210.6 L464.9 209.9 L468.7 209.3 L472.8 208.8 L477.1 208.5 L481.7 208.2 L486.6 208.0 L491.8 207.9 L497.2 208.0 L502.8 208.0 L508.6 208.1 L514.7 208.2 L521.0 208.3 L527.5 208.5 L534.2 208.8 L541.1 209.3 L548.3 209.8 L555.6 210.5 L563.1 211.5 L570.8 212.6 L578.7 214.1 L586.7 215.9 L595.0 217.6 L595.0 218.1 L586.7 218.8 L578.7 219.4 L570.8 219.9 L563.1 220.2 L555.6 220.5 L548.3 220.7 L541.1 220.9 L534.2 221.0 L527.5 221.0 L521.0 221.1 L514.7 221.1 L508.6 221.0 L502.8 221.0 L497.2 221.0 L491.8 220.9 L486.6 220.9 L481.7 220.7 L477.1 220.6 L472.8 220.4 L468.7 220.2 L464.9 219.9 L461.4 219.6 L458.3 219.3 L455.5 219.0 L453.1 218.6 L451.1 218.1 L449.7 217.7 L449.0 217.0Z" stroke="#000" fill="none" stroke-width="1"/><path d="M449.0 215.0h3v4h-3" stroke="#000" fill="none"/><rect x="488.8" y="207.4" width="6" height="3" fill="none" stroke="#000"/><rect x="488.8" y="218.4" width="6" height="3" fill="none" stroke="#000"/><path d="M536.1 209.3v-3h10v3" fill="none" stroke="#000"/><rect x="500.5" y="212.5" width="12" height="6" rx="2" fill="none" stroke="#ff1493" stroke-width="1.2"/><path d="M449.0 230.0 L449.7 228.3 L451.1 227.1 L453.0 226.1 L455.4 225.1 L458.1 224.3 L461.2 223.6 L464.7 222.9 L468.4 222.3 L472.4 221.8 L476.7 221.5 L481.3 221.2 L486.1 221.0 L491.2 220.9 L496.5 221.0 L502.0 221.0 L507.8 221.1 L513.8 221.2 L520.0 221.3 L526.4 221.5 L533.1 221.8 L539.9 222.3 L546.9 222.8 L554.1 223.5 L561.5 224.5 L569.1 225.6 L576.9 227.1 L584.9 228.9 L593.0 230.6 L593.0 231.1 L584.9 231.8 L576.9 232.4 L569.1 232.9 L561.5 233.2 L554.1 233.5 L546.9 233.7 L539.9 233.9 L533.1 234.0 L526.4 234.0 L520.0 234.1 L513.8 234.1 L507.8 234.0 L502.0 234.0 L496.5 234.0 L491.2 233.9 L486.1 233.9 L481.3 233.7 L476.7 233.6 L472.4 233.4 L468.4 233.2 L464.7 232.9 L461.2 232.6 L458.1 232.3 L455.4 232.0 L453.0 231.6 L451.1 231.1 L449.7 230.7 L449.0 230.0Z" stroke="#000" fill="none" stroke-width="1"/><path d="M449.0 228.0h3v4h-3" stroke="#000" fill="none"/><rect x="488.2" y="220.4" width="6" height="3" fill="none" stroke="#000"/><rect x="488.2" y="231.4" width="6" height="3" fill="none" stroke="#000"/><path d="M534.9 222.3v-3h10v3" fill="none" stroke="#000"/><rect x="500.5" y="226.5" width="12" height="4" rx="2" fill="none" stroke="#ff1493" stroke-width="1.2"/><path d="M719.0 170.0 L718.3 169.4 L717.0 169.0 L715.1 168.6 L712.9 168.2 L710.2 167.9 L707.3 167.7 L704.0 167.4 L700.4 167.2 L696.6 167.0 L692.4 166.9 L688.1 166.7 L683.4 166.7 L678.6 166.6 L673.5 166.6 L668.2 166.6 L662.6 166.7 L656.9 166.7 L650.9 166.7 L644.8 166.8 L638.4 166.9 L631.9 167.0 L625.2 167.2 L618.3 167.4 L611.2 167.7 L603.9 168.1 L596.4 168.6 L588.8 169.2 L581.0 169.9 L581.0 170.3 L588.8 171.9 L596.4 173.5 L603.9 174.8 L611.2 175.8 L618.3 176.6 L625.2 177.3 L631.9 177.7 L638.4 178.1 L644.8 178.3 L650.9 178.5 L656.9 178.6 L662.6 178.6 L668.2 178.6 L673.5 178.6 L678.6 178.6 L683.4 178.6 L688.1 178.4 L692.4 178.1 L696.6 177.7 L700.4 177.2 L704.0 176.7 L707.3 176.0 L710.2 175.3 L712.9 174.5 L715.1 173.6 L717.0 172.7 L718.3 171.5 L719.0 170.0Z" stroke="#000" fill="none" stroke-width="1"/><path d="M719.0 168.0h-3v4h3" stroke="#000" fill="none"/><rect x="675.6" y="166.1" width="6" height="3" fill="none" stroke="#000"/><rect x="675.6" y="176.1" width="6" height="3" fill="none" stroke="#000"/><path d="M626.9 167.0v-3h10v3" fill="none" stroke="#000"/><rect x="660.5" y="169.5" width="11" height="5" rx="2" fill="none" stroke="#ff1493" stroke-width="1.2"/><path d="M718.0 183.0 L717.4 182.4 L716.0 182.0 L714.2 181.6 L712.0 181.2 L709.5 180.9 L706.6 180.7 L703.4 180.4 L699.9 180.2 L696.2 180.0 L692.2 179.9 L687.9 179.7 L683.5 179.7 L678.7 179.6 L673.8 179.6 L668.6 179.6 L663.3 179.7 L657.7 179.7 L651.9 179.7 L645.9 179.8 L639.8 179.9 L633.4 180.0 L626.9 180.2 L620.2 180.4 L613.3 180.7 L606.2 181.1 L599.0 181.6 L591.6 182.2 L584.0 182.9 L584.0 183.3 L591.6 184.9 L599.0 186.5 L606.2 187.8 L613.3 188.8 L620.2 189.6 L626.9 190.3 L633.4 190.7 L639.8 191.1 L645.9 191.3 L651.9 191.5 L657.7 191.6 L663.3 191.6 L668.6 191.6 L673.8 191.6 L678.7 191.6 L683.5 191.6 L687.9 191.4 L692.2 191.1 L696.2 190.7 L699.9 190.2 L703.4 189.7 L706.6 189.0 L709.5 188.3 L712.0 187.5 L714.2 186.6 L716.0 185.7 L717.4 184.5 L718.0 183.0Z" stroke="#000" fill="none" stroke-width="1"/><path d="M718.0 181.0h-3v4h3" stroke="#000" fill="none"/><rect x="675.7" y="179.1" width="6" height="3" fill="none" stroke="#000"/><rect x="675.7" y="189.1" width="6" height="3" fill="none" stroke="#000"/><path d="M628.4 180.0v-3h10v3" fill="none" stroke="#000"/><rect x="659.5" y="182.5" width="12" height="5" rx="2" fill="none" stroke="#ff1493" stroke-width="1.2"/><path d="M710.0 197.0 L709.4 196.4 L708.2 196.0 L706.5 195.6 L704.5 195.2 L702.2 194.9 L699.5 194.7 L696.6 194.4 L693.4 194.2 L690.0 194.0 L686.3 193.9 L682.4 193.7 L678.3 193.7 L674.0 193.6 L669.4 193.6 L664.7 193.6 L659.8 193.7 L654.6 193.7 L649.3 193.7 L643.9 193.8 L638.2 193.9 L632.4 194.0 L626.4 194.2 L620.2 194.4 L613.9 194.7 L607.4 195.1 L600.8 195.6 L594.0 196.2 L587.0 196.9 L587.0 197.3 L594.0 198.9 L600.8 200.5 L607.4 201.8 L613.9 202.8 L620.2 203.6 L626.4 204.3 L632.4 204.7 L638.2 205.1 L643.9 205.3 L649.3 205.5 L654.6 205.6 L659.8 205.6 L664.7 205.6 L669.4 205.6 L674.0 205.6 L678.3 205.6 L682.4 205.4 L686.3 205.1 L690.0 204.7 L693.4 204.2 L696.6 203.7 L699.5 203.0 L702.2 202.3 L704.5 201.5 L706.5 200.6 L708.2 199.7 L709.4 198.5 L710.0 197.0Z" stroke="#000" fill="none" stroke-width="1"/><path d="M710.0 195.0h-3v4h3" stroke="#000" fill="none"/><rect x="671.0" y="193.1" width="6" height="3" fill="none" stroke="#000"/><rect x="671.0" y="203.1" width="6" height="3" fill="none" stroke="#000"/><path d="M627.4 194.0v-3h10v3" fill="none" stroke="#000"/><rect x="651.5" y="195.5" width="12" height="4" rx="2" fill="none" stroke="#ff1493" stroke-width="1.2"/><path d="M706.0 209.0 L705.4 208.4 L704.3 208.0 L702.7 207.6 L700.8 207.2 L698.6 206.9 L696.1 206.7 L693.4 206.4 L690.4 206.2 L687.1 206.0 L683.7 205.9 L680.0 205.7 L676.1 205.7 L672.0 205.6 L667.7 205.6 L663.3 205.6 L658.6 205.7 L653.8 205.7 L648.8 205.7 L643.6 205.8 L638.3 205.9 L632.8 206.0 L627.1 206.2 L621.3 206.4 L615.4 206.7 L609.2 207.1 L603.0 207.6 L596.6 208.2 L590.0 208.9 L590.0 209.3 L596.6 210.9 L603.0 212.5 L609.2 213.8 L615.4 214.8 L621.3 215.6 L627.1 216.3 L632.8 216.7 L638.3 217.1 L643.6 217.3 L648.8 217.5 L653.8 217.6 L658.6 217.6 L663.3 217.6 L667.7 217.6 L672.0 217.6 L676.1 217.6 L680.0 217.4 L683.7 217.1 L687.1 216.7 L690.4 216.2 L693.4 215.7 L696.1 215.0 L698.6 214.3 L700.8 213.5 L702.7 212.6 L704.3 211.7 L705.4 210.5 L706.0 209.0Z" stroke="#000" fill="none" stroke-width="1"/><path d="M706.0 207.0h-3v4h3" stroke="#000" fill="none"/><rect x="669.0" y="205.1" width="6" height="3" fill="none" stroke="#000"/><rect x="669.0" y="215.1" width="6" height="3" fill="none" stroke="#000"/><path d="M627.8 206.0v-3h10v3" fill="none" stroke="#000"/><rect x="648.5" y="208.5" width="11" height="5" rx="2" fill="none" stroke="#ff1493" stroke-width="1.2"/><path d="M705.0 221.0 L704.5 220.4 L703.4 220.0 L701.9 219.6 L700.0 219.2 L697.9 218.9 L695.5 218.7 L692.8 218.4 L689.9 218.2 L686.8 218.0 L683.4 217.9 L679.9 217.7 L676.1 217.7 L672.2 217.6 L668.1 217.6 L663.7 217.6 L659.3 217.7 L654.6 217.7 L649.8 217.7 L644.8 217.8 L639.6 217.9 L634.3 218.0 L628.9 218.2 L623.2 218.4 L617.5 218.7 L611.6 219.1 L605.5 219.6 L599.3 220.2 L593.0 220.9 L593.0 221.3 L599.3 222.9 L605.5 224.5 L611.6 225.8 L617.5 226.8 L623.2 227.6 L628.9 228.3 L634.3 228.7 L639.6 229.1 L644.8 229.3 L649.8 229.5 L654.6 229.6 L659.3 229.6 L663.7 229.6 L668.1 229.6 L672.2 229.6 L676.1 229.6 L679.9 229.4 L683.4 229.1 L686.8 228.7 L689.9 228.2 L692.8 227.7 L695.5 227.0 L697.9 226.3 L700.0 225.5 L701.9 224.6 L703.4 223.7 L704.5 222.5 L705.0 221.0Z" stroke="#000" fill="none" stroke-width="1"/><path d="M705.0 219.0h-3v4h3" stroke="#000" fill="none"/><rect x="669.2" y="217.1" width="6" height="3" fill="none" stroke="#000"/><rect x="669.2" y="227.1" width="6" height="3" fill="none" stroke="#000"/><path d="M629.3 218.0v-3h10v3" fill="none" stroke="#000"/><rect x="646.5" y="221.5" width="11" height="4" rx="2" fill="none" stroke="#ff1493" stroke-width="1.2"/><path d="M577.0 238.0 L577.6 236.6 L578.9 235.6 L580.7 234.7 L582.8 233.9 L585.3 233.1 L588.1 232.5 L591.3 231.9 L594.7 231.4 L598.3 231.0 L602.2 230.6 L606.4 230.3 L610.8 230.2 L615.4 230.1 L620.2 230.1 L625.3 230.1 L630.5 230.1 L636.0 230.2 L641.6 230.2 L647.4 230.4 L653.5 230.6 L659.7 230.9 L666.1 231.3 L672.6 231.9 L679.4 232.7 L686.3 233.6 L693.4 234.8 L700.6 236.2 L708.0 237.7 L708.0 238.1 L700.6 238.7 L693.4 239.3 L686.3 239.7 L679.4 240.1 L672.6 240.4 L666.1 240.6 L659.7 240.8 L653.5 240.9 L647.4 241.0 L641.6 241.0 L636.0 241.0 L630.5 241.1 L625.3 241.1 L620.2 241.1 L615.4 241.1 L610.8 241.0 L606.4 241.0 L602.2 240.9 L598.3 240.7 L594.7 240.6 L591.3 240.4 L588.1 240.1 L585.3 239.9 L582.8 239.6 L580.7 239.3 L578.9 239.0 L577.6 238.6 L577.0 238.0Z" stroke="#000" fill="none" stroke-width="1"/><path d="M577.0 236.0h3v4h-3" stroke="#000" fill="none"/><rect x="612.4" y="229.6" width="6" height="3" fill="none" stroke="#000"/><rect x="612.4" y="238.6" width="6" height="3" fill="none" stroke="#000"/><path d="M654.7 230.9v-3h10v3" fill="none" stroke="#000"/><rect x="623.5" y="234.5" width="11" height="4" rx="2" fill="none" stroke="#ff1493" stroke-width="1.2"/><path d="M719.0 171.0 L719.6 170.1 L720.9 169.5 L722.6 168.9 L724.6 168.4 L727.1 168.0 L729.8 167.5 L732.8 167.2 L736.1 166.9 L739.7 166.6 L743.5 166.4 L747.5 166.2 L751.7 166.1 L756.2 166.1 L760.9 166.1 L765.8 166.1 L770.9 166.1 L776.2 166.1 L781.6 166.2 L787.3 166.2 L793.1 166.4 L799.1 166.6 L805.3 166.8 L811.7 167.2 L818.2 167.7 L824.9 168.2 L831.8 169.0 L838.8 169.9 L846.0 170.8 L846.0 171.2 L838.8 172.4 L831.8 173.5 L824.9 174.4 L818.2 175.1 L811.7 175.6 L805.3 176.1 L799.1 176.4 L793.1 176.6 L787.3 176.8 L781.6 176.9 L776.2 177.0 L770.9 177.0 L765.8 177.0 L760.9 177.0 L756.2 177.0 L751.7 177.0 L747.5 176.9 L743.5 176.6 L739.7 176.4 L736.1 176.0 L732.8 175.7 L729.8 175.2 L727.1 174.7 L724.6 174.2 L722.6 173.6 L720.9 172.9 L719.6 172.1 L719.0 171.0Z" stroke="#000" fill="none" stroke-width="1"/><path d="M719.0 169.0h3v4h-3" stroke="#000" fill="none"/><rect x="753.2" y="165.6" width="6" height="3" fill="none" stroke="#000"/><rect x="753.2" y="174.5" width="6" height="3" fill="none" stroke="#000"/><path d="M794.1 166.6v-3h10v3" fill="none" stroke="#000"/><rect x="762.5" y="171.5" width="11" height="5" rx="2" fill="none" stroke="#ff1493" stroke-width="1.2"/><path d="M718.0 184.0 L718.6 183.1 L719.9 182.5 L721.6 181.9 L723.7 181.4 L726.1 181.0 L728.9 180.5 L731.9 180.2 L735.2 179.9 L738.8 179.6 L742.6 179.4 L746.7 179.2 L751.0 179.1 L755.5 179.1 L760.2 179.1 L765.2 179.1 L770.3 179.1 L775.6 179.1 L781.1 179.2 L786.8 179.2 L792.7 179.4 L798.8 179.6 L805.0 179.8 L811.4 180.2 L818.0 180.7 L824.8 181.2 L831.7 182.0 L838.8 182.9 L846.0 183.8 L846.0 184.2 L838.8 185.4 L831.7 186.5 L824.8 187.4 L818.0 188.1 L811.4 188.6 L805.0 189.1 L798.8 189.4 L792.7 189.6 L786.8 189.8 L781.1 189.9 L775.6 190.0 L770.3 190.0 L765.2 190.0 L760.2 190.0 L755.5 190.0 L751.0 190.0 L746.7 189.9 L742.6 189.6 L738.8 189.4 L735.2 189.0 L731.9 188.7 L728.9 188.2 L726.1 187.7 L723.7 187.2 L721.6 186.6 L719.9 185.9 L718.6 185.1 L718.0 184.0Z" stroke="#000" fill="none" stroke-width="1"/><path d="M718.0 182.0h3v4h-3" stroke="#000" fill="none"/><rect x="752.5" y="178.6" width="6" height="3" fill="none" stroke="#000"/><rect x="752.5" y="187.5" width="6" height="3" fill="none" stroke="#000"/><path d="M793.8 179.6v-3h10v3" fill="none" stroke="#000"/><rect x="762.5" y="183.5" width="11" height="4" rx="2" fill="none" stroke="#ff1493" stroke-width="1.2"/><path d="M712.0 197.0 L712.6 196.1 L713.8 195.5 L715.5 194.9 L717.6 194.4 L719.9 194.0 L722.6 193.5 L725.6 193.2 L728.8 192.9 L732.3 192.6 L736.1 192.4 L740.0 192.2 L744.2 192.1 L748.6 192.1 L753.2 192.1 L758.0 192.1 L763.1 192.1 L768.3 192.1 L773.6 192.2 L779.2 192.2 L785.0 192.4 L790.9 192.6 L797.0 192.8 L803.2 193.2 L809.7 193.7 L816.3 194.2 L823.0 195.0 L829.9 195.9 L837.0 196.8 L837.0 197.2 L829.9 198.4 L823.0 199.5 L816.3 200.4 L809.7 201.1 L803.2 201.6 L797.0 202.1 L790.9 202.4 L785.0 202.6 L779.2 202.8 L773.6 202.9 L768.3 203.0 L763.1 203.0 L758.0 203.0 L753.2 203.0 L748.6 203.0 L744.2 203.0 L740.0 202.9 L736.1 202.6 L732.3 202.4 L728.8 202.0 L725.6 201.7 L722.6 201.2 L719.9 200.7 L717.6 200.2 L715.5 199.6 L713.8 198.9 L712.6 198.1 L712.0 197.0Z" stroke="#000" fill="none" stroke-width="1"/><path d="M712.0 195.0h3v4h-3" stroke="#000" fill="none"/><rect x="745.6" y="191.6" width="6" height="3" fill="none" stroke="#000"/><rect x="745.6" y="200.5" width="6" height="3" fill="none" stroke="#000"/><path d="M785.9 192.6v-3h10v3" fill="none" stroke="#000"/><rect x="756.5" y="194.5" width="11" height="5" rx="2" fill="none" stroke="#ff1493" stroke-width="1.2"/><path d="M706.0 209.0 L706.6 208.1 L707.8 207.5 L709.5 206.9 L711.6 206.4 L713.9 206.0 L716.6 205.5 L719.6 205.2 L722.8 204.9 L726.3 204.6 L730.1 204.4 L734.0 204.2 L738.2 204.1 L742.6 204.1 L747.2 204.1 L752.0 204.1 L757.1 204.1 L762.3 204.1 L767.6 204.2 L773.2 204.2 L779.0 204.4 L784.9 204.6 L791.0 204.8 L797.2 205.2 L803.7 205.7 L810.3 206.2 L817.0 207.0 L823.9 207.9 L831.0 208.8 L831.0 209.2 L823.9 210.4 L817.0 211.5 L810.3 212.4 L803.7 213.1 L797.2 213.6 L791.0 214.1 L784.9 214.4 L779.0 214.6 L773.2 214.8 L767.6 214.9 L762.3 215.0 L757.1 215.0 L752.0 215.0 L747.2 215.0 L742.6 215.0 L738.2 215.0 L734.0 214.9 L730.1 214.6 L726.3 214.4 L722.8 214.0 L719.6 213.7 L716.6 213.2 L713.9 212.7 L711.6 212.2 L709.5 211.6 L707.8 210.9 L706.6 210.1 L706.0 209.0Z" stroke="#000" fill="none" stroke-width="1"/><path d="M706.0 207.0h3v4h-3" stroke="#000" fill="none"/><rect x="739.6" y="203.6" width="6" height="3" fill="none" stroke="#000"/><rect x="739.6" y="212.5" width="6" height="3" fill="none" stroke="#000"/><path d="M779.9 204.6v-3h10v3" fill="none" stroke="#000"/><rect x="750.5" y="206.5" width="12" height="5" rx="2" fill="none" stroke="#ff1493" stroke-width="1.2"/><path d="M704.0 221.0 L704.6 220.1 L705.8 219.5 L707.4 218.9 L709.4 218.4 L711.7 218.0 L714.4 217.5 L717.3 217.2 L720.4 216.9 L723.8 216.6 L727.5 216.4 L731.4 216.2 L735.4 216.1 L739.7 216.1 L744.2 216.1 L748.9 216.1 L753.8 216.1 L758.9 216.1 L764.2 216.2 L769.6 216.2 L775.2 216.4 L781.0 216.6 L786.9 216.8 L793.1 217.2 L799.3 217.7 L805.8 218.2 L812.4 219.0 L819.1 219.9 L826.0 220.8 L826.0 221.2 L819.1 222.4 L812.4 223.5 L805.8 224.4 L799.3 225.1 L793.1 225.6 L786.9 226.1 L781.0 226.4 L775.2 226.6 L769.6 226.8 L764.2 226.9 L758.9 227.0 L753.8 227.0 L748.9 227.0 L744.2 227.0 L739.7 227.0 L735.4 227.0 L731.4 226.9 L727.5 226.6 L723.8 226.4 L720.4 226.0 L717.3 225.7 L714.4 225.2 L711.7 224.7 L709.4 224.2 L707.4 223.6 L705.8 222.9 L704.6 222.1 L704.0 221.0Z" stroke="#000" fill="none" stroke-width="1"/><path d="M704.0 219.0h3v4h-3" stroke="#000" fill="none"/><rect x="736.7" y="215.6" width="6" height="3" fill="none" stroke="#000"/><rect x="736.7" y="224.5" width="6" height="3" fill="none" stroke="#000"/><path d="M776.0 216.6v-3h10v3" fill="none" stroke="#000"/><rect x="748.5" y="217.5" width="11" height="4" rx="2" fill="none" stroke="#ff1493" stroke-width="1.2"/><path d="M695.0 233.0 L695.6 232.1 L696.7 231.5 L698.3 230.9 L700.2 230.4 L702.4 230.0 L704.9 229.5 L707.7 229.2 L710.8 228.9 L714.0 228.6 L717.5 228.4 L721.2 228.2 L725.2 228.1 L729.3 228.1 L733.6 228.1 L738.1 228.1 L742.8 228.1 L747.7 228.1 L752.7 228.2 L757.9 228.2 L763.3 228.4 L768.8 228.6 L774.5 228.8 L780.4 229.2 L786.4 229.7 L792.6 230.2 L798.9 231.0 L805.4 231.9 L812.0 232.8 L812.0 233.2 L805.4 234.4 L798.9 235.5 L792.6 236.4 L786.4 237.1 L780.4 237.6 L774.5 238.1 L768.8 238.4 L763.3 238.6 L757.9 238.8 L752.7 238.9 L747.7 239.0 L742.8 239.0 L738.1 239.0 L733.6 239.0 L729.3 239.0 L725.2 239.0 L721.2 238.9 L717.5 238.6 L714.0 238.4 L710.8 238.0 L707.7 237.7 L704.9 237.2 L702.4 236.7 L700.2 236.2 L698.3 235.6 L696.7 234.9 L695.6 234.1 L695.0 233.0Z" stroke="#000" fill="none" stroke-width="1"/><path d="M695.0 231.0h3v4h-3" stroke="#000" fill="none"/><rect x="726.3" y="227.6" width="6" height="3" fill="none" stroke="#000"/><rect x="726.3" y="236.5" width="6" height="3" fill="none" stroke="#000"/><path d="M763.8 228.6v-3h10v3" fill="none" stroke="#000"/><rect x="737.5" y="228.5" width="11" height="4" rx="2" fill="none" stroke="#ff1493" stroke-width="1.2"/><path d="M938.0 170.0 L937.4 169.2 L936.3 168.6 L934.8 168.1 L932.9 167.6 L930.7 167.2 L928.2 166.9 L925.5 166.5 L922.5 166.2 L919.3 166.0 L915.9 165.8 L912.2 165.6 L908.4 165.5 L904.3 165.5 L900.1 165.5 L895.6 165.5 L891.0 165.5 L886.2 165.5 L881.3 165.6 L876.2 165.7 L870.9 165.8 L865.4 166.0 L859.8 166.2 L854.1 166.5 L848.1 167.0 L842.1 167.5 L835.9 168.2 L829.5 169.0 L823.0 169.8 L823.0 170.2 L829.5 171.2 L835.9 172.2 L842.1 173.1 L848.1 173.7 L854.1 174.2 L859.8 174.6 L865.4 174.9 L870.9 175.1 L876.2 175.3 L881.3 175.4 L886.2 175.4 L891.0 175.5 L895.6 175.5 L900.1 175.5 L904.3 175.5 L908.4 175.4 L912.2 175.3 L915.9 175.1 L919.3 174.9 L922.5 174.6 L925.5 174.2 L928.2 173.8 L930.7 173.4 L932.9 172.9 L934.8 172.3 L936.3 171.7 L937.4 171.0 L938.0 170.0Z" stroke="#000" fill="none" stroke-width="1"/><path d="M938.0 168.0h-3v4h3" stroke="#000" fill="none"/><rect x="901.3" y="165.0" width="6" height="3" fill="none" stroke="#000"/><rect x="901.3" y="173.0" width="6" height="3" fill="none" stroke="#000"/><path d="M860.4 166.0v-3h10v3" fill="none" stroke="#000"/><rect x="885.5" y="169.5" width="12" height="4" rx="2" fill="none" stroke="#ff1493" stroke-width="1.2"/><path d="M936.0 181.0 L935.4 180.2 L934.3 179.6 L932.8 179.1 L930.9 178.6 L928.8 178.2 L926.3 177.9 L923.6 177.5 L920.6 177.2 L917.5 177.0 L914.0 176.8 L910.4 176.6 L906.6 176.5 L902.6 176.5 L898.4 176.5 L894.0 176.5 L889.4 176.5 L884.7 176.5 L879.8 176.6 L874.7 176.7 L869.5 176.8 L864.1 177.0 L858.5 177.2 L852.8 177.5 L846.9 178.0 L840.9 178.5 L834.7 179.2 L828.4 180.0 L822.0 180.8 L822.0 181.2 L828.4 182.2 L834.7 183.2 L840.9 184.1 L846.9 184.7 L852.8 185.2 L858.5 185.6 L864.1 185.9 L869.5 186.1 L874.7 186.3 L879.8 186.4 L884.7 186.4 L889.4 186.5 L894.0 186.5 L898.4 186.5 L902.6 186.5 L906.6 186.4 L910.4 186.3 L914.0 186.1 L917.5 185.9 L920.6 185.6 L923.6 185.2 L926.3 184.8 L928.8 184.4 L930.9 183.9 L932.8 183.3 L934.3 182.7 L935.4 182.0 L936.0 181.0Z" stroke="#000" fill="none" stroke-width="1"/><path d="M936.0 179.0h-3v4h3" stroke="#000" fill="none"/><rect x="899.6" y="176.0" width="6" height="3" fill="none" stroke="#000"/><rect x="899.6" y="184.0" width="6" height="3" fill="none" stroke="#000"/><path d="M859.1 177.0v-3h10v3" fill="none" stroke="#000"/><rect x="884.5" y="180.5" width="12" height="5" rx="2" fill="none" stroke="#ff1493" stroke-width="1.2"/><path d="M928.0 192.0 L927.5 191.2 L926.4 190.6 L924.9 190.1 L923.1 189.6 L920.9 189.2 L918.6 188.9 L915.9 188.5 L913.0 188.2 L909.9 188.0 L906.6 187.8 L903.1 187.6 L899.4 187.5 L895.5 187.5 L891.4 187.5 L887.1 187.5 L882.7 187.5 L878.0 187.5 L873.3 187.6 L868.3 187.7 L863.2 187.8 L857.9 188.0 L852.5 188.2 L847.0 188.5 L841.3 189.0 L835.4 189.5 L829.4 190.2 L823.3 191.0 L817.0 191.8 L817.0 192.2 L823.3 193.2 L829.4 194.2 L835.4 195.1 L841.3 195.7 L847.0 196.2 L852.5 196.6 L857.9 196.9 L863.2 197.1 L868.3 197.3 L873.3 197.4 L878.0 197.4 L882.7 197.5 L887.1 197.5 L891.4 197.5 L895.5 197.5 L899.4 197.4 L903.1 197.3 L906.6 197.1 L909.9 196.9 L913.0 196.6 L915.9 196.2 L918.6 195.8 L920.9 195.4 L923.1 194.9 L924.9 194.3 L926.4 193.7 L927.5 193.0 L928.0 192.0Z" stroke="#000" fill="none" stroke-width="1"/><path d="M928.0 190.0h-3v4h3" stroke="#000" fill="none"/><rect x="892.5" y="187.0" width="6" height="3" fill="none" stroke="#000"/><rect x="892.5" y="195.0" width="6" height="3" fill="none" stroke="#000"/><path d="M852.9 188.0v-3h10v3" fill="none" stroke="#000"/><rect x="876.5" y="191.5" width="13" height="5" rx="2" fill="none" stroke="#ff1493" stroke-width="1.2"/><path d="M919.0 203.0 L918.5 202.2 L917.4 201.6 L916.0 201.1 L914.2 200.6 L912.2 200.2 L909.9 199.9 L907.4 199.5 L904.6 199.2 L901.6 199.0 L898.4 198.8 L895.0 198.6 L891.4 198.5 L887.6 198.5 L883.7 198.5 L879.6 198.5 L875.3 198.5 L870.8 198.5 L866.2 198.6 L861.5 198.7 L856.5 198.8 L851.5 199.0 L846.3 199.2 L840.9 199.5 L835.4 200.0 L829.7 200.5 L824.0 201.2 L818.0 202.0 L812.0 202.8 L812.0 203.2 L818.0 204.2 L824.0 205.2 L829.7 206.1 L835.4 206.7 L840.9 207.2 L846.3 207.6 L851.5 207.9 L856.5 208.1 L861.5 208.3 L866.2 208.4 L870.8 208.4 L875.3 208.5 L879.6 208.5 L883.7 208.5 L887.6 208.5 L891.4 208.4 L895.0 208.3 L898.4 208.1 L901.6 207.9 L904.6 207.6 L907.4 207.2 L909.9 206.8 L912.2 206.4 L914.2 205.9 L916.0 205.3 L917.4 204.7 L918.5 204.0 L919.0 203.0Z" stroke="#000" fill="none" stroke-width="1"/><path d="M919.0 201.0h-3v4h3" stroke="#000" fill="none"/><rect x="884.6" y="198.0" width="6" height="3" fill="none" stroke="#000"/><rect x="884.6" y="206.0" width="6" height="3" fill="none" stroke="#000"/><path d="M846.5 199.0v-3h10v3" fill="none" stroke="#000"/><path d="M910.0 214.0 L909.5 213.2 L908.5 212.6 L907.1 212.1 L905.4 211.6 L903.4 211.2 L901.2 210.9 L898.7 210.5 L896.0 210.2 L893.1 210.0 L890.0 209.8 L886.7 209.6 L883.2 209.5 L879.5 209.5 L875.7 209.5 L871.7 209.5 L867.5 209.5 L863.2 209.5 L858.7 209.6 L854.1 209.7 L849.3 209.8 L844.4 210.0 L839.3 210.2 L834.1 210.5 L828.7 211.0 L823.2 211.5 L817.6 212.2 L811.9 213.0 L806.0 213.8 L806.0 214.2 L811.9 215.2 L817.6 216.2 L823.2 217.1 L828.7 217.7 L834.1 218.2 L839.3 218.6 L844.4 218.9 L849.3 219.1 L854.1 219.3 L858.7 219.4 L863.2 219.4 L867.5 219.5 L871.7 219.5 L875.7 219.5 L879.5 219.5 L883.2 219.4 L886.7 219.3 L890.0 219.1 L893.1 218.9 L896.0 218.6 L898.7 218.2 L901.2 217.8 L903.4 217.4 L905.4 216.9 L907.1 216.3 L908.5 215.7 L909.5 215.0 L910.0 214.0Z" stroke="#000" fill="none" stroke-width="1"/><path d="M910.0 212.0h-3v4h3" stroke="#000" fill="none"/><rect x="876.5" y="209.0" width="6" height="3" fill="none" stroke="#000"/><rect x="876.5" y="217.0" width="6" height="3" fill="none" stroke="#000"/><path d="M839.4 210.0v-3h10v3" fill="none" stroke="#000"/><path d="M893.0 225.0 L892.5 224.2 L891.5 223.6 L890.2 223.1 L888.6 222.6 L886.6 222.2 L884.5 221.9 L882.1 221.5 L879.5 221.2 L876.7 221.0 L873.7 220.8 L870.6 220.6 L867.2 220.5 L863.7 220.5 L860.0 220.5 L856.2 220.5 L852.2 220.5 L848.0 220.5 L843.7 220.6 L839.2 220.7 L834.6 220.8 L829.9 221.0 L825.0 221.2 L820.0 221.5 L814.9 222.0 L809.6 222.5 L804.2 223.2 L798.7 224.0 L793.0 224.8 L793.0 225.2 L798.7 226.2 L804.2 227.2 L809.6 228.1 L814.9 228.7 L820.0 229.2 L825.0 229.6 L829.9 229.9 L834.6 230.1 L839.2 230.3 L843.7 230.4 L848.0 230.4 L852.2 230.5 L856.2 230.5 L860.0 230.5 L863.7 230.5 L867.2 230.4 L870.6 230.3 L873.7 230.1 L876.7 229.9 L879.5 229.6 L882.1 229.2 L884.5 228.8 L886.6 228.4 L888.6 227.9 L890.2 227.3 L891.5 226.7 L892.5 226.0 L893.0 225.0Z" stroke="#000" fill="none" stroke-width="1"/><path d="M893.0 223.0h-3v4h3" stroke="#000" fill="none"/><rect x="860.7" y="220.0" width="6" height="3" fill="none" stroke="#000"/><rect x="860.7" y="228.0" width="6" height="3" fill="none" stroke="#000"/><path d="M824.9 221.0v-3h10v3" fill="none" stroke="#000"/><path d="M809.0 238.0 L809.5 236.8 L810.5 236.0 L811.8 235.3 L813.4 234.6 L815.4 234.0 L817.5 233.5 L819.9 233.0 L822.5 232.6 L825.3 232.2 L828.3 231.9 L831.4 231.7 L834.8 231.6 L838.3 231.5 L842.0 231.5 L845.8 231.5 L849.8 231.5 L854.0 231.6 L858.3 231.7 L862.8 231.8 L867.4 232.0 L872.1 232.2 L877.0 232.6 L882.0 233.0 L887.1 233.6 L892.4 234.4 L897.8 235.4 L903.3 236.6 L909.0 237.7 L909.0 238.1 L903.3 238.6 L897.8 239.0 L892.4 239.4 L887.1 239.7 L882.0 239.9 L877.0 240.1 L872.1 240.3 L867.4 240.4 L862.8 240.4 L858.3 240.5 L854.0 240.5 L849.8 240.5 L845.8 240.5 L842.0 240.5 L838.3 240.5 L834.8 240.5 L831.4 240.4 L828.3 240.4 L825.3 240.2 L822.5 240.1 L819.9 239.9 L817.5 239.8 L815.4 239.6 L813.4 239.3 L811.8 239.1 L810.5 238.8 L809.5 238.5 L809.0 238.0Z" stroke="#000" fill="none" stroke-width="1"/><path d="M809.0 236.0h3v4h-3" stroke="#000" fill="none"/><rect x="835.3" y="231.0" width="6" height="3" fill="none" stroke="#000"/><rect x="835.3" y="238.0" width="6" height="3" fill="none" stroke="#000"/><path d="M867.1 232.2v-3h10v3" fill="none" stroke="#000"/><path d="M943.0 171.0 L943.5 170.1 L944.4 169.4 L945.7 168.8 L947.3 168.3 L949.2 167.8 L951.2 167.4 L953.6 167.0 L956.1 166.6 L958.8 166.4 L961.7 166.1 L964.8 165.9 L968.0 165.8 L971.4 165.8 L975.0 165.8 L978.7 165.8 L982.6 165.8 L986.7 165.8 L990.8 165.9 L995.2 166.0 L999.6 166.1 L1004.2 166.3 L1008.9 166.6 L1013.8 167.0 L1018.8 167.5 L1023.9 168.1 L1029.2 168.9 L1034.5 169.8 L1040.0 170.8 L1040.0 171.2 L1034.5 171.8 L1029.2 172.5 L1023.9 173.1 L1018.8 173.6 L1013.8 173.9 L1008.9 174.2 L1004.2 174.4 L999.6 174.5 L995.2 174.6 L990.8 174.7 L986.7 174.7 L982.6 174.8 L978.7 174.8 L975.0 174.8 L971.4 174.8 L968.0 174.7 L964.8 174.7 L961.7 174.5 L958.8 174.4 L956.1 174.2 L953.6 173.9 L951.2 173.6 L949.2 173.3 L947.3 173.0 L945.7 172.6 L944.4 172.2 L943.5 171.7 L943.0 171.0Z" stroke="#000" fill="none" stroke-width="1"/><path d="M943.0 169.0h3v4h-3" stroke="#000" fill="none"/><rect x="968.4" y="165.3" width="6" height="3" fill="none" stroke="#000"/><rect x="968.4" y="172.3" width="6" height="3" fill="none" stroke="#000"/><path d="M999.2 166.3v-3h10v3" fill="none" stroke="#000"/><path d="M939.0 182.0 L939.5 181.1 L940.5 180.4 L941.8 179.8 L943.4 179.3 L945.3 178.8 L947.4 178.4 L949.8 178.0 L952.3 177.6 L955.1 177.4 L958.1 177.1 L961.2 176.9 L964.5 176.8 L968.0 176.8 L971.7 176.8 L975.5 176.8 L979.4 176.8 L983.6 176.8 L987.8 176.9 L992.2 177.0 L996.8 177.1 L1001.5 177.3 L1006.3 177.6 L1011.3 178.0 L1016.4 178.5 L1021.6 179.1 L1026.9 179.9 L1032.4 180.8 L1038.0 181.8 L1038.0 182.2 L1032.4 182.8 L1026.9 183.5 L1021.6 184.1 L1016.4 184.6 L1011.3 184.9 L1006.3 185.2 L1001.5 185.4 L996.8 185.5 L992.2 185.6 L987.8 185.7 L983.6 185.7 L979.4 185.8 L975.5 185.8 L971.7 185.8 L968.0 185.8 L964.5 185.7 L961.2 185.7 L958.1 185.5 L955.1 185.4 L952.3 185.2 L949.8 184.9 L947.4 184.6 L945.3 184.3 L943.4 184.0 L941.8 183.6 L940.5 183.2 L939.5 182.7 L939.0 182.0Z" stroke="#000" fill="none" stroke-width="1"/><path d="M939.0 180.0h3v4h-3" stroke="#000" fill="none"/><rect x="965.0" y="176.3" width="6" height="3" fill="none" stroke="#000"/><rect x="965.0" y="183.3" width="6" height="3" fill="none" stroke="#000"/><path d="M996.5 177.3v-3h10v3" fill="none" stroke="#000"/><path d="M932.0 192.0 L932.5 191.1 L933.4 190.4 L934.7 189.8 L936.3 189.3 L938.1 188.8 L940.2 188.4 L942.4 188.0 L944.9 187.6 L947.6 187.4 L950.5 187.1 L953.5 186.9 L956.7 186.8 L960.1 186.8 L963.7 186.8 L967.4 186.8 L971.2 186.8 L975.2 186.8 L979.3 186.9 L983.6 187.0 L988.0 187.1 L992.6 187.3 L997.3 187.6 L1002.1 188.0 L1007.0 188.5 L1012.1 189.1 L1017.3 189.9 L1022.6 190.8 L1028.0 191.8 L1028.0 192.2 L1022.6 192.8 L1017.3 193.5 L1012.1 194.1 L1007.0 194.6 L1002.1 194.9 L997.3 195.2 L992.6 195.4 L988.0 195.5 L983.6 195.6 L979.3 195.7 L975.2 195.7 L971.2 195.8 L967.4 195.8 L963.7 195.8 L960.1 195.8 L956.7 195.7 L953.5 195.7 L950.5 195.5 L947.6 195.4 L944.9 195.2 L942.4 194.9 L940.2 194.6 L938.1 194.3 L936.3 194.0 L934.7 193.6 L933.4 193.2 L932.5 192.7 L932.0 192.0Z" stroke="#000" fill="none" stroke-width="1"/><path d="M932.0 190.0h3v4h-3" stroke="#000" fill="none"/><rect x="957.1" y="186.3" width="6" height="3" fill="none" stroke="#000"/><rect x="957.1" y="193.3" width="6" height="3" fill="none" stroke="#000"/><path d="M987.6 187.3v-3h10v3" fill="none" stroke="#000"/><path d="M926.5 198.5h4v2l28 3h-28v2h-4z" stroke="#000" fill="none" stroke-width="1"/><text x="447" y="255" font-size="5.5" font-weight="700" fill="#000" stroke="#000" stroke-width="0.15" textLength="44" lengthAdjust="spacingAndGlyphs">Seba 3mm, Offset 0,0</text><text x="544" y="255" font-size="5.5" font-weight="700" fill="#000" stroke="#000" stroke-width="0.15" textLength="17" lengthAdjust="spacingAndGlyphs">33/1,5/7</text><text x="623" y="255" font-size="5.5" font-weight="700" fill="#000" stroke="#000" stroke-width="0.15" textLength="12" lengthAdjust="spacingAndGlyphs">33/13</text><text x="757" y="255" font-size="5.5" font-weight="700" fill="#000" stroke="#000" stroke-width="0.15" textLength="14" lengthAdjust="spacingAndGlyphs">31+8</text><text x="885" y="255" font-size="5.5" font-weight="700" fill="#000" stroke="#000" stroke-width="0.15" textLength="14" lengthAdjust="spacingAndGlyphs">33806</text><text x="978" y="255" font-size="5.5" font-weight="700" fill="#000" stroke="#000" stroke-width="0.15" textLength="14" lengthAdjust="spacingAndGlyphs">33*09</text><path d="M449.0 272.0 L449.7 270.3 L451.2 269.1 L453.3 268.1 L455.8 267.1 L458.7 266.3 L461.9 265.6 L465.5 264.9 L469.5 264.3 L473.7 263.8 L478.3 263.5 L483.1 263.2 L488.2 263.0 L493.5 262.9 L499.1 263.0 L505.0 263.0 L511.1 263.1 L517.4 263.2 L524.0 263.3 L530.7 263.5 L537.7 263.8 L544.9 264.3 L552.3 264.8 L560.0 265.5 L567.8 266.5 L575.8 267.6 L584.0 269.1 L592.4 270.9 L601.0 272.6 L601.0 273.1 L592.4 273.8 L584.0 274.4 L575.8 274.9 L567.8 275.2 L560.0 275.5 L552.3 275.7 L544.9 275.9 L537.7 276.0 L530.7 276.0 L524.0 276.1 L517.4 276.1 L511.1 276.0 L505.0 276.0 L499.1 276.0 L493.5 275.9 L488.2 275.9 L483.1 275.7 L478.3 275.6 L473.7 275.4 L469.5 275.2 L465.5 274.9 L461.9 274.6 L458.7 274.3 L455.8 274.0 L453.3 273.6 L451.2 273.1 L449.7 272.7 L449.0 272.0Z" stroke="#000" fill="none" stroke-width="1"/><path d="M449.0 270.0h3v4h-3" stroke="#000" fill="none"/><rect x="490.5" y="262.4" width="6" height="3" fill="none" stroke="#000"/><rect x="490.5" y="273.4" width="6" height="3" fill="none" stroke="#000"/><path d="M539.9 264.3v-3h10v3" fill="none" stroke="#000"/><rect x="502.5" y="266.5" width="15" height="7" rx="2" fill="none" stroke="#ff1493" stroke-width="1.2"/><circle cx="495" cy="269" r="2" fill="none" stroke="#000"/><path d="M449.0 285.0 L449.7 283.3 L451.2 282.1 L453.2 281.1 L455.7 280.1 L458.5 279.3 L461.8 278.6 L465.3 277.9 L469.2 277.3 L473.4 276.8 L477.9 276.5 L482.6 276.2 L487.7 276.0 L492.9 275.9 L498.5 276.0 L504.3 276.0 L510.3 276.1 L516.5 276.2 L523.0 276.3 L529.7 276.5 L536.6 276.8 L543.7 277.3 L551.0 277.8 L558.5 278.5 L566.2 279.5 L574.1 280.6 L582.2 282.1 L590.5 283.9 L599.0 285.6 L599.0 286.1 L590.5 286.8 L582.2 287.4 L574.1 287.9 L566.2 288.2 L558.5 288.5 L551.0 288.7 L543.7 288.9 L536.6 289.0 L529.7 289.0 L523.0 289.1 L516.5 289.1 L510.3 289.0 L504.3 289.0 L498.5 289.0 L492.9 288.9 L487.7 288.9 L482.6 288.7 L477.9 288.6 L473.4 288.4 L469.2 288.2 L465.3 287.9 L461.8 287.6 L458.5 287.3 L455.7 287.0 L453.2 286.6 L451.2 286.1 L449.7 285.7 L449.0 285.0Z" stroke="#000" fill="none" stroke-width="1"/><path d="M449.0 283.0h3v4h-3" stroke="#000" fill="none"/><rect x="489.9" y="275.4" width="6" height="3" fill="none" stroke="#000"/><rect x="489.9" y="286.4" width="6" height="3" fill="none" stroke="#000"/><path d="M538.7 277.3v-3h10v3" fill="none" stroke="#000"/><rect x="504.5" y="281.5" width="15" height="6" rx="2" fill="none" stroke="#ff1493" stroke-width="1.2"/><circle cx="496" cy="284" r="2" fill="none" stroke="#000"/><path d="M449.0 301.0 L449.7 299.3 L451.2 298.1 L453.2 297.1 L455.6 296.1 L458.4 295.3 L461.6 294.6 L465.1 293.9 L468.9 293.3 L473.1 292.8 L477.5 292.5 L482.2 292.2 L487.2 292.0 L492.4 291.9 L497.8 292.0 L503.5 292.0 L509.5 292.1 L515.6 292.2 L522.0 292.3 L528.6 292.5 L535.4 292.8 L542.4 293.3 L549.6 293.8 L557.0 294.5 L564.7 295.5 L572.5 296.6 L580.5 298.1 L588.6 299.9 L597.0 301.6 L597.0 302.1 L588.6 302.8 L580.5 303.4 L572.5 303.9 L564.7 304.2 L557.0 304.5 L549.6 304.7 L542.4 304.9 L535.4 305.0 L528.6 305.0 L522.0 305.1 L515.6 305.1 L509.5 305.0 L503.5 305.0 L497.8 305.0 L492.4 304.9 L487.2 304.9 L482.2 304.7 L477.5 304.6 L473.1 304.4 L468.9 304.2 L465.1 303.9 L461.6 303.6 L458.4 303.3 L455.6 303.0 L453.2 302.6 L451.2 302.1 L449.7 301.7 L449.0 301.0Z" stroke="#000" fill="none" stroke-width="1"/><path d="M449.0 299.0h3v4h-3" stroke="#000" fill="none"/><rect x="489.4" y="291.4" width="6" height="3" fill="none" stroke="#000"/><rect x="489.4" y="302.4" width="6" height="3" fill="none" stroke="#000"/><path d="M537.4 293.3v-3h10v3" fill="none" stroke="#000"/><rect x="501.5" y="296.5" width="11" height="4" rx="2" fill="none" stroke="#ff1493" stroke-width="1.2"/><path d="M449.0 314.0 L449.7 312.3 L451.1 311.1 L453.1 310.1 L455.5 309.1 L458.3 308.3 L461.4 307.6 L464.9 306.9 L468.7 306.3 L472.8 305.8 L477.1 305.5 L481.7 305.2 L486.6 305.0 L491.8 304.9 L497.2 305.0 L502.8 305.0 L508.6 305.1 L514.7 305.2 L521.0 305.3 L527.5 305.5 L534.2 305.8 L541.1 306.3 L548.3 306.8 L555.6 307.5 L563.1 308.5 L570.8 309.6 L578.7 311.1 L586.7 312.9 L595.0 314.6 L595.0 315.1 L586.7 315.8 L578.7 316.4 L570.8 316.9 L563.1 317.2 L555.6 317.5 L548.3 317.7 L541.1 317.9 L534.2 318.0 L527.5 318.0 L521.0 318.1 L514.7 318.1 L508.6 318.0 L502.8 318.0 L497.2 318.0 L491.8 317.9 L486.6 317.9 L481.7 317.7 L477.1 317.6 L472.8 317.4 L468.7 317.2 L464.9 316.9 L461.4 316.6 L458.3 316.3 L455.5 316.0 L453.1 315.6 L451.1 315.1 L449.7 314.7 L449.0 314.0Z" stroke="#000" fill="none" stroke-width="1"/><path d="M449.0 312.0h3v4h-3" stroke="#000" fill="none"/><rect x="488.8" y="304.4" width="6" height="3" fill="none" stroke="#000"/><rect x="488.8" y="315.4" width="6" height="3" fill="none" stroke="#000"/><path d="M536.1 306.3v-3h10v3" fill="none" stroke="#000"/><rect x="500.5" y="309.5" width="12" height="6" rx="2" fill="none" stroke="#ff1493" stroke-width="1.2"/><path d="M449.0 327.0 L449.7 325.3 L451.1 324.1 L453.0 323.1 L455.4 322.1 L458.1 321.3 L461.2 320.6 L464.7 319.9 L468.4 319.3 L472.4 318.8 L476.7 318.5 L481.3 318.2 L486.1 318.0 L491.2 317.9 L496.5 318.0 L502.0 318.0 L507.8 318.1 L513.8 318.2 L520.0 318.3 L526.4 318.5 L533.1 318.8 L539.9 319.3 L546.9 319.8 L554.1 320.5 L561.5 321.5 L569.1 322.6 L576.9 324.1 L584.9 325.9 L593.0 327.6 L593.0 328.1 L584.9 328.8 L576.9 329.4 L569.1 329.9 L561.5 330.2 L554.1 330.5 L546.9 330.7 L539.9 330.9 L533.1 331.0 L526.4 331.0 L520.0 331.1 L513.8 331.1 L507.8 331.0 L502.0 331.0 L496.5 331.0 L491.2 330.9 L486.1 330.9 L481.3 330.7 L476.7 330.6 L472.4 330.4 L468.4 330.2 L464.7 329.9 L461.2 329.6 L458.1 329.3 L455.4 329.0 L453.0 328.6 L451.1 328.1 L449.7 327.7 L449.0 327.0Z" stroke="#000" fill="none" stroke-width="1"/><path d="M449.0 325.0h3v4h-3" stroke="#000" fill="none"/><rect x="488.2" y="317.4" width="6" height="3" fill="none" stroke="#000"/><rect x="488.2" y="328.4" width="6" height="3" fill="none" stroke="#000"/><path d="M534.9 319.3v-3h10v3" fill="none" stroke="#000"/><rect x="500.5" y="323.5" width="12" height="4" rx="2" fill="none" stroke="#ff1493" stroke-width="1.2"/><path d="M719.0 267.0 L718.3 266.4 L717.0 266.0 L715.1 265.6 L712.9 265.2 L710.2 264.9 L707.3 264.7 L704.0 264.4 L700.4 264.2 L696.6 264.0 L692.4 263.9 L688.1 263.7 L683.4 263.7 L678.6 263.6 L673.5 263.6 L668.2 263.6 L662.6 263.7 L656.9 263.7 L650.9 263.7 L644.8 263.8 L638.4 263.9 L631.9 264.0 L625.2 264.2 L618.3 264.4 L611.2 264.7 L603.9 265.1 L596.4 265.6 L588.8 266.2 L581.0 266.9 L581.0 267.3 L588.8 268.9 L596.4 270.5 L603.9 271.8 L611.2 272.8 L618.3 273.6 L625.2 274.3 L631.9 274.7 L638.4 275.1 L644.8 275.3 L650.9 275.5 L656.9 275.6 L662.6 275.6 L668.2 275.6 L673.5 275.6 L678.6 275.6 L683.4 275.6 L688.1 275.4 L692.4 275.1 L696.6 274.7 L700.4 274.2 L704.0 273.7 L707.3 273.0 L710.2 272.3 L712.9 271.5 L715.1 270.6 L717.0 269.7 L718.3 268.5 L719.0 267.0Z" stroke="#000" fill="none" stroke-width="1"/><path d="M719.0 265.0h-3v4h3" stroke="#000" fill="none"/><rect x="675.6" y="263.1" width="6" height="3" fill="none" stroke="#000"/><rect x="675.6" y="273.1" width="6" height="3" fill="none" stroke="#000"/><path d="M626.9 264.0v-3h10v3" fill="none" stroke="#000"/><rect x="660.5" y="266.5" width="11" height="5" rx="2" fill="none" stroke="#ff1493" stroke-width="1.2"/><path d="M718.0 280.0 L717.4 279.4 L716.0 279.0 L714.2 278.6 L712.0 278.2 L709.5 277.9 L706.6 277.7 L703.4 277.4 L699.9 277.2 L696.2 277.0 L692.2 276.9 L687.9 276.7 L683.5 276.7 L678.7 276.6 L673.8 276.6 L668.6 276.6 L663.3 276.7 L657.7 276.7 L651.9 276.7 L645.9 276.8 L639.8 276.9 L633.4 277.0 L626.9 277.2 L620.2 277.4 L613.3 277.7 L606.2 278.1 L599.0 278.6 L591.6 279.2 L584.0 279.9 L584.0 280.3 L591.6 281.9 L599.0 283.5 L606.2 284.8 L613.3 285.8 L620.2 286.6 L626.9 287.3 L633.4 287.7 L639.8 288.1 L645.9 288.3 L651.9 288.5 L657.7 288.6 L663.3 288.6 L668.6 288.6 L673.8 288.6 L678.7 288.6 L683.5 288.6 L687.9 288.4 L692.2 288.1 L696.2 287.7 L699.9 287.2 L703.4 286.7 L706.6 286.0 L709.5 285.3 L712.0 284.5 L714.2 283.6 L716.0 282.7 L717.4 281.5 L718.0 280.0Z" stroke="#000" fill="none" stroke-width="1"/><path d="M718.0 278.0h-3v4h3" stroke="#000" fill="none"/><rect x="675.7" y="276.1" width="6" height="3" fill="none" stroke="#000"/><rect x="675.7" y="286.1" width="6" height="3" fill="none" stroke="#000"/><path d="M628.4 277.0v-3h10v3" fill="none" stroke="#000"/><rect x="659.5" y="279.5" width="12" height="5" rx="2" fill="none" stroke="#ff1493" stroke-width="1.2"/><path d="M710.0 294.0 L709.4 293.4 L708.2 293.0 L706.5 292.6 L704.5 292.2 L702.2 291.9 L699.5 291.7 L696.6 291.4 L693.4 291.2 L690.0 291.0 L686.3 290.9 L682.4 290.7 L678.3 290.7 L674.0 290.6 L669.4 290.6 L664.7 290.6 L659.8 290.7 L654.6 290.7 L649.3 290.7 L643.9 290.8 L638.2 290.9 L632.4 291.0 L626.4 291.2 L620.2 291.4 L613.9 291.7 L607.4 292.1 L600.8 292.6 L594.0 293.2 L587.0 293.9 L587.0 294.3 L594.0 295.9 L600.8 297.5 L607.4 298.8 L613.9 299.8 L620.2 300.6 L626.4 301.3 L632.4 301.7 L638.2 302.1 L643.9 302.3 L649.3 302.5 L654.6 302.6 L659.8 302.6 L664.7 302.6 L669.4 302.6 L674.0 302.6 L678.3 302.6 L682.4 302.4 L686.3 302.1 L690.0 301.7 L693.4 301.2 L696.6 300.7 L699.5 300.0 L702.2 299.3 L704.5 298.5 L706.5 297.6 L708.2 296.7 L709.4 295.5 L710.0 294.0Z" stroke="#000" fill="none" stroke-width="1"/><path d="M710.0 292.0h-3v4h3" stroke="#000" fill="none"/><rect x="671.0" y="290.1" width="6" height="3" fill="none" stroke="#000"/><rect x="671.0" y="300.1" width="6" height="3" fill="none" stroke="#000"/><path d="M627.4 291.0v-3h10v3" fill="none" stroke="#000"/><rect x="651.5" y="292.5" width="12" height="4" rx="2" fill="none" stroke="#ff1493" stroke-width="1.2"/><path d="M706.0 306.0 L705.4 305.4 L704.3 305.0 L702.7 304.6 L700.8 304.2 L698.6 303.9 L696.1 303.7 L693.4 303.4 L690.4 303.2 L687.1 303.0 L683.7 302.9 L680.0 302.7 L676.1 302.7 L672.0 302.6 L667.7 302.6 L663.3 302.6 L658.6 302.7 L653.8 302.7 L648.8 302.7 L643.6 302.8 L638.3 302.9 L632.8 303.0 L627.1 303.2 L621.3 303.4 L615.4 303.7 L609.2 304.1 L603.0 304.6 L596.6 305.2 L590.0 305.9 L590.0 306.3 L596.6 307.9 L603.0 309.5 L609.2 310.8 L615.4 311.8 L621.3 312.6 L627.1 313.3 L632.8 313.7 L638.3 314.1 L643.6 314.3 L648.8 314.5 L653.8 314.6 L658.6 314.6 L663.3 314.6 L667.7 314.6 L672.0 314.6 L676.1 314.6 L680.0 314.4 L683.7 314.1 L687.1 313.7 L690.4 313.2 L693.4 312.7 L696.1 312.0 L698.6 311.3 L700.8 310.5 L702.7 309.6 L704.3 308.7 L705.4 307.5 L706.0 306.0Z" stroke="#000" fill="none" stroke-width="1"/><path d="M706.0 304.0h-3v4h3" stroke="#000" fill="none"/><rect x="669.0" y="302.1" width="6" height="3" fill="none" stroke="#000"/><rect x="669.0" y="312.1" width="6" height="3" fill="none" stroke="#000"/><path d="M627.8 303.0v-3h10v3" fill="none" stroke="#000"/><rect x="648.5" y="305.5" width="11" height="5" rx="2" fill="none" stroke="#ff1493" stroke-width="1.2"/><path d="M705.0 318.0 L704.5 317.4 L703.4 317.0 L701.9 316.6 L700.0 316.2 L697.9 315.9 L695.5 315.7 L692.8 315.4 L689.9 315.2 L686.8 315.0 L683.4 314.9 L679.9 314.7 L676.1 314.7 L672.2 314.6 L668.1 314.6 L663.7 314.6 L659.3 314.7 L654.6 314.7 L649.8 314.7 L644.8 314.8 L639.6 314.9 L634.3 315.0 L628.9 315.2 L623.2 315.4 L617.5 315.7 L611.6 316.1 L605.5 316.6 L599.3 317.2 L593.0 317.9 L593.0 318.3 L599.3 319.9 L605.5 321.5 L611.6 322.8 L617.5 323.8 L623.2 324.6 L628.9 325.3 L634.3 325.7 L639.6 326.1 L644.8 326.3 L649.8 326.5 L654.6 326.6 L659.3 326.6 L663.7 326.6 L668.1 326.6 L672.2 326.6 L676.1 326.6 L679.9 326.4 L683.4 326.1 L686.8 325.7 L689.9 325.2 L692.8 324.7 L695.5 324.0 L697.9 323.3 L700.0 322.5 L701.9 321.6 L703.4 320.7 L704.5 319.5 L705.0 318.0Z" stroke="#000" fill="none" stroke-width="1"/><path d="M705.0 316.0h-3v4h3" stroke="#000" fill="none"/><rect x="669.2" y="314.1" width="6" height="3" fill="none" stroke="#000"/><rect x="669.2" y="324.1" width="6" height="3" fill="none" stroke="#000"/><path d="M629.3 315.0v-3h10v3" fill="none" stroke="#000"/><rect x="646.5" y="318.5" width="11" height="4" rx="2" fill="none" stroke="#ff1493" stroke-width="1.2"/><path d="M577.0 335.0 L577.6 333.6 L578.9 332.6 L580.7 331.7 L582.8 330.9 L585.3 330.1 L588.1 329.5 L591.3 328.9 L594.7 328.4 L598.3 328.0 L602.2 327.6 L606.4 327.3 L610.8 327.2 L615.4 327.1 L620.2 327.1 L625.3 327.1 L630.5 327.1 L636.0 327.2 L641.6 327.2 L647.4 327.4 L653.5 327.6 L659.7 327.9 L666.1 328.3 L672.6 328.9 L679.4 329.7 L686.3 330.6 L693.4 331.8 L700.6 333.2 L708.0 334.7 L708.0 335.1 L700.6 335.7 L693.4 336.3 L686.3 336.7 L679.4 337.1 L672.6 337.4 L666.1 337.6 L659.7 337.8 L653.5 337.9 L647.4 338.0 L641.6 338.0 L636.0 338.0 L630.5 338.1 L625.3 338.1 L620.2 338.1 L615.4 338.1 L610.8 338.0 L606.4 338.0 L602.2 337.9 L598.3 337.7 L594.7 337.6 L591.3 337.4 L588.1 337.1 L585.3 336.9 L582.8 336.6 L580.7 336.3 L578.9 336.0 L577.6 335.6 L577.0 335.0Z" stroke="#000" fill="none" stroke-width="1"/><path d="M577.0 333.0h3v4h-3" stroke="#000" fill="none"/><rect x="612.4" y="326.6" width="6" height="3" fill="none" stroke="#000"/><rect x="612.4" y="335.6" width="6" height="3" fill="none" stroke="#000"/><path d="M654.7 327.9v-3h10v3" fill="none" stroke="#000"/><rect x="623.5" y="331.5" width="11" height="4" rx="2" fill="none" stroke="#ff1493" stroke-width="1.2"/><path d="M719.0 268.0 L719.6 267.1 L720.9 266.5 L722.6 265.9 L724.6 265.4 L727.1 265.0 L729.8 264.5 L732.8 264.2 L736.1 263.9 L739.7 263.6 L743.5 263.4 L747.5 263.2 L751.7 263.1 L756.2 263.1 L760.9 263.1 L765.8 263.1 L770.9 263.1 L776.2 263.1 L781.6 263.2 L787.3 263.2 L793.1 263.4 L799.1 263.6 L805.3 263.8 L811.7 264.2 L818.2 264.7 L824.9 265.2 L831.8 266.0 L838.8 266.9 L846.0 267.8 L846.0 268.2 L838.8 269.4 L831.8 270.5 L824.9 271.4 L818.2 272.1 L811.7 272.6 L805.3 273.1 L799.1 273.4 L793.1 273.6 L787.3 273.8 L781.6 273.9 L776.2 274.0 L770.9 274.0 L765.8 274.0 L760.9 274.0 L756.2 274.0 L751.7 274.0 L747.5 273.9 L743.5 273.6 L739.7 273.4 L736.1 273.0 L732.8 272.7 L729.8 272.2 L727.1 271.7 L724.6 271.2 L722.6 270.6 L720.9 269.9 L719.6 269.1 L719.0 268.0Z" stroke="#000" fill="none" stroke-width="1"/><path d="M719.0 266.0h3v4h-3" stroke="#000" fill="none"/><rect x="753.2" y="262.6" width="6" height="3" fill="none" stroke="#000"/><rect x="753.2" y="271.5" width="6" height="3" fill="none" stroke="#000"/><path d="M794.1 263.6v-3h10v3" fill="none" stroke="#000"/><rect x="762.5" y="268.5" width="11" height="5" rx="2" fill="none" stroke="#ff1493" stroke-width="1.2"/><path d="M718.0 281.0 L718.6 280.1 L719.9 279.5 L721.6 278.9 L723.7 278.4 L726.1 278.0 L728.9 277.5 L731.9 277.2 L735.2 276.9 L738.8 276.6 L742.6 276.4 L746.7 276.2 L751.0 276.1 L755.5 276.1 L760.2 276.1 L765.2 276.1 L770.3 276.1 L775.6 276.1 L781.1 276.2 L786.8 276.2 L792.7 276.4 L798.8 276.6 L805.0 276.8 L811.4 277.2 L818.0 277.7 L824.8 278.2 L831.7 279.0 L838.8 279.9 L846.0 280.8 L846.0 281.2 L838.8 282.4 L831.7 283.5 L824.8 284.4 L818.0 285.1 L811.4 285.6 L805.0 286.1 L798.8 286.4 L792.7 286.6 L786.8 286.8 L781.1 286.9 L775.6 287.0 L770.3 287.0 L765.2 287.0 L760.2 287.0 L755.5 287.0 L751.0 287.0 L746.7 286.9 L742.6 286.6 L738.8 286.4 L735.2 286.0 L731.9 285.7 L728.9 285.2 L726.1 284.7 L723.7 284.2 L721.6 283.6 L719.9 282.9 L718.6 282.1 L718.0 281.0Z" stroke="#000" fill="none" stroke-width="1"/><path d="M718.0 279.0h3v4h-3" stroke="#000" fill="none"/><rect x="752.5" y="275.6" width="6" height="3" fill="none" stroke="#000"/><rect x="752.5" y="284.5" width="6" height="3" fill="none" stroke="#000"/><path d="M793.8 276.6v-3h10v3" fill="none" stroke="#000"/><rect x="762.5" y="280.5" width="11" height="4" rx="2" fill="none" stroke="#ff1493" stroke-width="1.2"/><path d="M712.0 294.0 L712.6 293.1 L713.8 292.5 L715.5 291.9 L717.6 291.4 L719.9 291.0 L722.6 290.5 L725.6 290.2 L728.8 289.9 L732.3 289.6 L736.1 289.4 L740.0 289.2 L744.2 289.1 L748.6 289.1 L753.2 289.1 L758.0 289.1 L763.1 289.1 L768.3 289.1 L773.6 289.2 L779.2 289.2 L785.0 289.4 L790.9 289.6 L797.0 289.8 L803.2 290.2 L809.7 290.7 L816.3 291.2 L823.0 292.0 L829.9 292.9 L837.0 293.8 L837.0 294.2 L829.9 295.4 L823.0 296.5 L816.3 297.4 L809.7 298.1 L803.2 298.6 L797.0 299.1 L790.9 299.4 L785.0 299.6 L779.2 299.8 L773.6 299.9 L768.3 300.0 L763.1 300.0 L758.0 300.0 L753.2 300.0 L748.6 300.0 L744.2 300.0 L740.0 299.9 L736.1 299.6 L732.3 299.4 L728.8 299.0 L725.6 298.7 L722.6 298.2 L719.9 297.7 L717.6 297.2 L715.5 296.6 L713.8 295.9 L712.6 295.1 L712.0 294.0Z" stroke="#000" fill="none" stroke-width="1"/><path d="M712.0 292.0h3v4h-3" stroke="#000" fill="none"/><rect x="745.6" y="288.6" width="6" height="3" fill="none" stroke="#000"/><rect x="745.6" y="297.5" width="6" height="3" fill="none" stroke="#000"/><path d="M785.9 289.6v-3h10v3" fill="none" stroke="#000"/><rect x="756.5" y="291.5" width="11" height="5" rx="2" fill="none" stroke="#ff1493" stroke-width="1.2"/><path d="M706.0 306.0 L706.6 305.1 L707.8 304.5 L709.5 303.9 L711.6 303.4 L713.9 303.0 L716.6 302.5 L719.6 302.2 L722.8 301.9 L726.3 301.6 L730.1 301.4 L734.0 301.2 L738.2 301.1 L742.6 301.1 L747.2 301.1 L752.0 301.1 L757.1 301.1 L762.3 301.1 L767.6 301.2 L773.2 301.2 L779.0 301.4 L784.9 301.6 L791.0 301.8 L797.2 302.2 L803.7 302.7 L810.3 303.2 L817.0 304.0 L823.9 304.9 L831.0 305.8 L831.0 306.2 L823.9 307.4 L817.0 308.5 L810.3 309.4 L803.7 310.1 L797.2 310.6 L791.0 311.1 L784.9 311.4 L779.0 311.6 L773.2 311.8 L767.6 311.9 L762.3 312.0 L757.1 312.0 L752.0 312.0 L747.2 312.0 L742.6 312.0 L738.2 312.0 L734.0 311.9 L730.1 311.6 L726.3 311.4 L722.8 311.0 L719.6 310.7 L716.6 310.2 L713.9 309.7 L711.6 309.2 L709.5 308.6 L707.8 307.9 L706.6 307.1 L706.0 306.0Z" stroke="#000" fill="none" stroke-width="1"/><path d="M706.0 304.0h3v4h-3" stroke="#000" fill="none"/><rect x="739.6" y="300.6" width="6" height="3" fill="none" stroke="#000"/><rect x="739.6" y="309.5" width="6" height="3" fill="none" stroke="#000"/><path d="M779.9 301.6v-3h10v3" fill="none" stroke="#000"/><rect x="750.5" y="303.5" width="12" height="5" rx="2" fill="none" stroke="#ff1493" stroke-width="1.2"/><path d="M704.0 318.0 L704.6 317.1 L705.8 316.5 L707.4 315.9 L709.4 315.4 L711.7 315.0 L714.4 314.5 L717.3 314.2 L720.4 313.9 L723.8 313.6 L727.5 313.4 L731.4 313.2 L735.4 313.1 L739.7 313.1 L744.2 313.1 L748.9 313.1 L753.8 313.1 L758.9 313.1 L764.2 313.2 L769.6 313.2 L775.2 313.4 L781.0 313.6 L786.9 313.8 L793.1 314.2 L799.3 314.7 L805.8 315.2 L812.4 316.0 L819.1 316.9 L826.0 317.8 L826.0 318.2 L819.1 319.4 L812.4 320.5 L805.8 321.4 L799.3 322.1 L793.1 322.6 L786.9 323.1 L781.0 323.4 L775.2 323.6 L769.6 323.8 L764.2 323.9 L758.9 324.0 L753.8 324.0 L748.9 324.0 L744.2 324.0 L739.7 324.0 L735.4 324.0 L731.4 323.9 L727.5 323.6 L723.8 323.4 L720.4 323.0 L717.3 322.7 L714.4 322.2 L711.7 321.7 L709.4 321.2 L707.4 320.6 L705.8 319.9 L704.6 319.1 L704.0 318.0Z" stroke="#000" fill="none" stroke-width="1"/><path d="M704.0 316.0h3v4h-3" stroke="#000" fill="none"/><rect x="736.7" y="312.6" width="6" height="3" fill="none" stroke="#000"/><rect x="736.7" y="321.5" width="6" height="3" fill="none" stroke="#000"/><path d="M776.0 313.6v-3h10v3" fill="none" stroke="#000"/><rect x="748.5" y="314.5" width="11" height="4" rx="2" fill="none" stroke="#ff1493" stroke-width="1.2"/><path d="M695.0 330.0 L695.6 329.1 L696.7 328.5 L698.3 327.9 L700.2 327.4 L702.4 327.0 L704.9 326.5 L707.7 326.2 L710.8 325.9 L714.0 325.6 L717.5 325.4 L721.2 325.2 L725.2 325.1 L729.3 325.1 L733.6 325.1 L738.1 325.1 L742.8 325.1 L747.7 325.1 L752.7 325.2 L757.9 325.2 L763.3 325.4 L768.8 325.6 L774.5 325.8 L780.4 326.2 L786.4 326.7 L792.6 327.2 L798.9 328.0 L805.4 328.9 L812.0 329.8 L812.0 330.2 L805.4 331.4 L798.9 332.5 L792.6 333.4 L786.4 334.1 L780.4 334.6 L774.5 335.1 L768.8 335.4 L763.3 335.6 L757.9 335.8 L752.7 335.9 L747.7 336.0 L742.8 336.0 L738.1 336.0 L733.6 336.0 L729.3 336.0 L725.2 336.0 L721.2 335.9 L717.5 335.6 L714.0 335.4 L710.8 335.0 L707.7 334.7 L704.9 334.2 L702.4 333.7 L700.2 333.2 L698.3 332.6 L696.7 331.9 L695.6 331.1 L695.0 330.0Z" stroke="#000" fill="none" stroke-width="1"/><path d="M695.0 328.0h3v4h-3" stroke="#000" fill="none"/><rect x="726.3" y="324.6" width="6" height="3" fill="none" stroke="#000"/><rect x="726.3" y="333.5" width="6" height="3" fill="none" stroke="#000"/><path d="M763.8 325.6v-3h10v3" fill="none" stroke="#000"/><rect x="737.5" y="325.5" width="11" height="4" rx="2" fill="none" stroke="#ff1493" stroke-width="1.2"/><path d="M938.0 267.0 L937.4 266.2 L936.3 265.6 L934.8 265.1 L932.9 264.6 L930.7 264.2 L928.2 263.9 L925.5 263.5 L922.5 263.2 L919.3 263.0 L915.9 262.8 L912.2 262.6 L908.4 262.5 L904.3 262.5 L900.1 262.5 L895.6 262.5 L891.0 262.5 L886.2 262.5 L881.3 262.6 L876.2 262.7 L870.9 262.8 L865.4 263.0 L859.8 263.2 L854.1 263.5 L848.1 264.0 L842.1 264.5 L835.9 265.2 L829.5 266.0 L823.0 266.8 L823.0 267.2 L829.5 268.2 L835.9 269.2 L842.1 270.1 L848.1 270.7 L854.1 271.2 L859.8 271.6 L865.4 271.9 L870.9 272.1 L876.2 272.3 L881.3 272.4 L886.2 272.4 L891.0 272.5 L895.6 272.5 L900.1 272.5 L904.3 272.5 L908.4 272.4 L912.2 272.3 L915.9 272.1 L919.3 271.9 L922.5 271.6 L925.5 271.2 L928.2 270.8 L930.7 270.4 L932.9 269.9 L934.8 269.3 L936.3 268.7 L937.4 268.0 L938.0 267.0Z" stroke="#000" fill="none" stroke-width="1"/><path d="M938.0 265.0h-3v4h3" stroke="#000" fill="none"/><rect x="901.3" y="262.0" width="6" height="3" fill="none" stroke="#000"/><rect x="901.3" y="270.0" width="6" height="3" fill="none" stroke="#000"/><path d="M860.4 263.0v-3h10v3" fill="none" stroke="#000"/><rect x="885.5" y="266.5" width="12" height="4" rx="2" fill="none" stroke="#ff1493" stroke-width="1.2"/><path d="M936.0 278.0 L935.4 277.2 L934.3 276.6 L932.8 276.1 L930.9 275.6 L928.8 275.2 L926.3 274.9 L923.6 274.5 L920.6 274.2 L917.5 274.0 L914.0 273.8 L910.4 273.6 L906.6 273.5 L902.6 273.5 L898.4 273.5 L894.0 273.5 L889.4 273.5 L884.7 273.5 L879.8 273.6 L874.7 273.7 L869.5 273.8 L864.1 274.0 L858.5 274.2 L852.8 274.5 L846.9 275.0 L840.9 275.5 L834.7 276.2 L828.4 277.0 L822.0 277.8 L822.0 278.2 L828.4 279.2 L834.7 280.2 L840.9 281.1 L846.9 281.7 L852.8 282.2 L858.5 282.6 L864.1 282.9 L869.5 283.1 L874.7 283.3 L879.8 283.4 L884.7 283.4 L889.4 283.5 L894.0 283.5 L898.4 283.5 L902.6 283.5 L906.6 283.4 L910.4 283.3 L914.0 283.1 L917.5 282.9 L920.6 282.6 L923.6 282.2 L926.3 281.8 L928.8 281.4 L930.9 280.9 L932.8 280.3 L934.3 279.7 L935.4 279.0 L936.0 278.0Z" stroke="#000" fill="none" stroke-width="1"/><path d="M936.0 276.0h-3v4h3" stroke="#000" fill="none"/><rect x="899.6" y="273.0" width="6" height="3" fill="none" stroke="#000"/><rect x="899.6" y="281.0" width="6" height="3" fill="none" stroke="#000"/><path d="M859.1 274.0v-3h10v3" fill="none" stroke="#000"/><rect x="884.5" y="277.5" width="12" height="5" rx="2" fill="none" stroke="#ff1493" stroke-width="1.2"/><path d="M928.0 289.0 L927.5 288.2 L926.4 287.6 L924.9 287.1 L923.1 286.6 L920.9 286.2 L918.6 285.9 L915.9 285.5 L913.0 285.2 L909.9 285.0 L906.6 284.8 L903.1 284.6 L899.4 284.5 L895.5 284.5 L891.4 284.5 L887.1 284.5 L882.7 284.5 L878.0 284.5 L873.3 284.6 L868.3 284.7 L863.2 284.8 L857.9 285.0 L852.5 285.2 L847.0 285.5 L841.3 286.0 L835.4 286.5 L829.4 287.2 L823.3 288.0 L817.0 288.8 L817.0 289.2 L823.3 290.2 L829.4 291.2 L835.4 292.1 L841.3 292.7 L847.0 293.2 L852.5 293.6 L857.9 293.9 L863.2 294.1 L868.3 294.3 L873.3 294.4 L878.0 294.4 L882.7 294.5 L887.1 294.5 L891.4 294.5 L895.5 294.5 L899.4 294.4 L903.1 294.3 L906.6 294.1 L909.9 293.9 L913.0 293.6 L915.9 293.2 L918.6 292.8 L920.9 292.4 L923.1 291.9 L924.9 291.3 L926.4 290.7 L927.5 290.0 L928.0 289.0Z" stroke="#000" fill="none" stroke-width="1"/><path d="M928.0 287.0h-3v4h3" stroke="#000" fill="none"/><rect x="892.5" y="284.0" width="6" height="3" fill="none" stroke="#000"/><rect x="892.5" y="292.0" width="6" height="3" fill="none" stroke="#000"/><path d="M852.9 285.0v-3h10v3" fill="none" stroke="#000"/><rect x="876.5" y="288.5" width="13" height="5" rx="2" fill="none" stroke="#ff1493" stroke-width="1.2"/><path d="M919.0 300.0 L918.5 299.2 L917.4 298.6 L916.0 298.1 L914.2 297.6 L912.2 297.2 L909.9 296.9 L907.4 296.5 L904.6 296.2 L901.6 296.0 L898.4 295.8 L895.0 295.6 L891.4 295.5 L887.6 295.5 L883.7 295.5 L879.6 295.5 L875.3 295.5 L870.8 295.5 L866.2 295.6 L861.5 295.7 L856.5 295.8 L851.5 296.0 L846.3 296.2 L840.9 296.5 L835.4 297.0 L829.7 297.5 L824.0 298.2 L818.0 299.0 L812.0 299.8 L812.0 300.2 L818.0 301.2 L824.0 302.2 L829.7 303.1 L835.4 303.7 L840.9 304.2 L846.3 304.6 L851.5 304.9 L856.5 305.1 L861.5 305.3 L866.2 305.4 L870.8 305.4 L875.3 305.5 L879.6 305.5 L883.7 305.5 L887.6 305.5 L891.4 305.4 L895.0 305.3 L898.4 305.1 L901.6 304.9 L904.6 304.6 L907.4 304.2 L909.9 303.8 L912.2 303.4 L914.2 302.9 L916.0 302.3 L917.4 301.7 L918.5 301.0 L919.0 300.0Z" stroke="#000" fill="none" stroke-width="1"/><path d="M919.0 298.0h-3v4h3" stroke="#000" fill="none"/><rect x="884.6" y="295.0" width="6" height="3" fill="none" stroke="#000"/><rect x="884.6" y="303.0" width="6" height="3" fill="none" stroke="#000"/><path d="M846.5 296.0v-3h10v3" fill="none" stroke="#000"/><path d="M910.0 311.0 L909.5 310.2 L908.5 309.6 L907.1 309.1 L905.4 308.6 L903.4 308.2 L901.2 307.9 L898.7 307.5 L896.0 307.2 L893.1 307.0 L890.0 306.8 L886.7 306.6 L883.2 306.5 L879.5 306.5 L875.7 306.5 L871.7 306.5 L867.5 306.5 L863.2 306.5 L858.7 306.6 L854.1 306.7 L849.3 306.8 L844.4 307.0 L839.3 307.2 L834.1 307.5 L828.7 308.0 L823.2 308.5 L817.6 309.2 L811.9 310.0 L806.0 310.8 L806.0 311.2 L811.9 312.2 L817.6 313.2 L823.2 314.1 L828.7 314.7 L834.1 315.2 L839.3 315.6 L844.4 315.9 L849.3 316.1 L854.1 316.3 L858.7 316.4 L863.2 316.4 L867.5 316.5 L871.7 316.5 L875.7 316.5 L879.5 316.5 L883.2 316.4 L886.7 316.3 L890.0 316.1 L893.1 315.9 L896.0 315.6 L898.7 315.2 L901.2 314.8 L903.4 314.4 L905.4 313.9 L907.1 313.3 L908.5 312.7 L909.5 312.0 L910.0 311.0Z" stroke="#000" fill="none" stroke-width="1"/><path d="M910.0 309.0h-3v4h3" stroke="#000" fill="none"/><rect x="876.5" y="306.0" width="6" height="3" fill="none" stroke="#000"/><rect x="876.5" y="314.0" width="6" height="3" fill="none" stroke="#000"/><path d="M839.4 307.0v-3h10v3" fill="none" stroke="#000"/><path d="M893.0 322.0 L892.5 321.2 L891.5 320.6 L890.2 320.1 L888.6 319.6 L886.6 319.2 L884.5 318.9 L882.1 318.5 L879.5 318.2 L876.7 318.0 L873.7 317.8 L870.6 317.6 L867.2 317.5 L863.7 317.5 L860.0 317.5 L856.2 317.5 L852.2 317.5 L848.0 317.5 L843.7 317.6 L839.2 317.7 L834.6 317.8 L829.9 318.0 L825.0 318.2 L820.0 318.5 L814.9 319.0 L809.6 319.5 L804.2 320.2 L798.7 321.0 L793.0 321.8 L793.0 322.2 L798.7 323.2 L804.2 324.2 L809.6 325.1 L814.9 325.7 L820.0 326.2 L825.0 326.6 L829.9 326.9 L834.6 327.1 L839.2 327.3 L843.7 327.4 L848.0 327.4 L852.2 327.5 L856.2 327.5 L860.0 327.5 L863.7 327.5 L867.2 327.4 L870.6 327.3 L873.7 327.1 L876.7 326.9 L879.5 326.6 L882.1 326.2 L884.5 325.8 L886.6 325.4 L888.6 324.9 L890.2 324.3 L891.5 323.7 L892.5 323.0 L893.0 322.0Z" stroke="#000" fill="none" stroke-width="1"/><path d="M893.0 320.0h-3v4h3" stroke="#000" fill="none"/><rect x="860.7" y="317.0" width="6" height="3" fill="none" stroke="#000"/><rect x="860.7" y="325.0" width="6" height="3" fill="none" stroke="#000"/><path d="M824.9 318.0v-3h10v3" fill="none" stroke="#000"/><path d="M809.0 335.0 L809.5 333.8 L810.5 333.0 L811.8 332.3 L813.4 331.6 L815.4 331.0 L817.5 330.5 L819.9 330.0 L822.5 329.6 L825.3 329.2 L828.3 328.9 L831.4 328.7 L834.8 328.6 L838.3 328.5 L842.0 328.5 L845.8 328.5 L849.8 328.5 L854.0 328.6 L858.3 328.7 L862.8 328.8 L867.4 329.0 L872.1 329.2 L877.0 329.6 L882.0 330.0 L887.1 330.6 L892.4 331.4 L897.8 332.4 L903.3 333.6 L909.0 334.7 L909.0 335.1 L903.3 335.6 L897.8 336.0 L892.4 336.4 L887.1 336.7 L882.0 336.9 L877.0 337.1 L872.1 337.3 L867.4 337.4 L862.8 337.4 L858.3 337.5 L854.0 337.5 L849.8 337.5 L845.8 337.5 L842.0 337.5 L838.3 337.5 L834.8 337.5 L831.4 337.4 L828.3 337.4 L825.3 337.2 L822.5 337.1 L819.9 336.9 L817.5 336.8 L815.4 336.6 L813.4 336.3 L811.8 336.1 L810.5 335.8 L809.5 335.5 L809.0 335.0Z" stroke="#000" fill="none" stroke-width="1"/><path d="M809.0 333.0h3v4h-3" stroke="#000" fill="none"/><rect x="835.3" y="328.0" width="6" height="3" fill="none" stroke="#000"/><rect x="835.3" y="335.0" width="6" height="3" fill="none" stroke="#000"/><path d="M867.1 329.2v-3h10v3" fill="none" stroke="#000"/><path d="M943.0 268.0 L943.5 267.1 L944.4 266.4 L945.7 265.8 L947.3 265.3 L949.2 264.8 L951.2 264.4 L953.6 264.0 L956.1 263.6 L958.8 263.4 L961.7 263.1 L964.8 262.9 L968.0 262.8 L971.4 262.8 L975.0 262.8 L978.7 262.8 L982.6 262.8 L986.7 262.8 L990.8 262.9 L995.2 263.0 L999.6 263.1 L1004.2 263.3 L1008.9 263.6 L1013.8 264.0 L1018.8 264.5 L1023.9 265.1 L1029.2 265.9 L1034.5 266.8 L1040.0 267.8 L1040.0 268.2 L1034.5 268.8 L1029.2 269.5 L1023.9 270.1 L1018.8 270.6 L1013.8 270.9 L1008.9 271.2 L1004.2 271.4 L999.6 271.5 L995.2 271.6 L990.8 271.7 L986.7 271.7 L982.6 271.8 L978.7 271.8 L975.0 271.8 L971.4 271.8 L968.0 271.7 L964.8 271.7 L961.7 271.5 L958.8 271.4 L956.1 271.2 L953.6 270.9 L951.2 270.6 L949.2 270.3 L947.3 270.0 L945.7 269.6 L944.4 269.2 L943.5 268.7 L943.0 268.0Z" stroke="#000" fill="none" stroke-width="1"/><path d="M943.0 266.0h3v4h-3" stroke="#000" fill="none"/><rect x="968.4" y="262.3" width="6" height="3" fill="none" stroke="#000"/><rect x="968.4" y="269.3" width="6" height="3" fill="none" stroke="#000"/><path d="M999.2 263.3v-3h10v3" fill="none" stroke="#000"/><path d="M939.0 279.0 L939.5 278.1 L940.5 277.4 L941.8 276.8 L943.4 276.3 L945.3 275.8 L947.4 275.4 L949.8 275.0 L952.3 274.6 L955.1 274.4 L958.1 274.1 L961.2 273.9 L964.5 273.8 L968.0 273.8 L971.7 273.8 L975.5 273.8 L979.4 273.8 L983.6 273.8 L987.8 273.9 L992.2 274.0 L996.8 274.1 L1001.5 274.3 L1006.3 274.6 L1011.3 275.0 L1016.4 275.5 L1021.6 276.1 L1026.9 276.9 L1032.4 277.8 L1038.0 278.8 L1038.0 279.2 L1032.4 279.8 L1026.9 280.5 L1021.6 281.1 L1016.4 281.6 L1011.3 281.9 L1006.3 282.2 L1001.5 282.4 L996.8 282.5 L992.2 282.6 L987.8 282.7 L983.6 282.7 L979.4 282.8 L975.5 282.8 L971.7 282.8 L968.0 282.8 L964.5 282.7 L961.2 282.7 L958.1 282.5 L955.1 282.4 L952.3 282.2 L949.8 281.9 L947.4 281.6 L945.3 281.3 L943.4 281.0 L941.8 280.6 L940.5 280.2 L939.5 279.7 L939.0 279.0Z" stroke="#000" fill="none" stroke-width="1"/><path d="M939.0 277.0h3v4h-3" stroke="#000" fill="none"/><rect x="965.0" y="273.3" width="6" height="3" fill="none" stroke="#000"/><rect x="965.0" y="280.3" width="6" height="3" fill="none" stroke="#000"/><path d="M996.5 274.3v-3h10v3" fill="none" stroke="#000"/><path d="M932.0 289.0 L932.5 288.1 L933.4 287.4 L934.7 286.8 L936.3 286.3 L938.1 285.8 L940.2 285.4 L942.4 285.0 L944.9 284.6 L947.6 284.4 L950.5 284.1 L953.5 283.9 L956.7 283.8 L960.1 283.8 L963.7 283.8 L967.4 283.8 L971.2 283.8 L975.2 283.8 L979.3 283.9 L983.6 284.0 L988.0 284.1 L992.6 284.3 L997.3 284.6 L1002.1 285.0 L1007.0 285.5 L1012.1 286.1 L1017.3 286.9 L1022.6 287.8 L1028.0 288.8 L1028.0 289.2 L1022.6 289.8 L1017.3 290.5 L1012.1 291.1 L1007.0 291.6 L1002.1 291.9 L997.3 292.2 L992.6 292.4 L988.0 292.5 L983.6 292.6 L979.3 292.7 L975.2 292.7 L971.2 292.8 L967.4 292.8 L963.7 292.8 L960.1 292.8 L956.7 292.7 L953.5 292.7 L950.5 292.5 L947.6 292.4 L944.9 292.2 L942.4 291.9 L940.2 291.6 L938.1 291.3 L936.3 291.0 L934.7 290.6 L933.4 290.2 L932.5 289.7 L932.0 289.0Z" stroke="#000" fill="none" stroke-width="1"/><path d="M932.0 287.0h3v4h-3" stroke="#000" fill="none"/><rect x="957.1" y="283.3" width="6" height="3" fill="none" stroke="#000"/><rect x="957.1" y="290.3" width="6" height="3" fill="none" stroke="#000"/><path d="M987.6 284.3v-3h10v3" fill="none" stroke="#000"/><path d="M926.5 295.5h4v2l28 3h-28v2h-4z" stroke="#000" fill="none" stroke-width="1"/><text x="447" y="353" font-size="5.5" font-weight="700" fill="#000" stroke="#000" stroke-width="0.15" textLength="52" lengthAdjust="spacingAndGlyphs">Seba 5mm, Offset 0,12mm</text><path d="M452.0 360.0 L472.0 359.0 L585.0 359.0 L586.0 362.0 L584.0 364.0 L586.0 368.0 L563.0 368.0 L560.0 364.0 L558.0 364.0 L556.0 368.0 L539.0 368.0 L536.0 364.0 L534.0 364.0 L532.0 368.0 L512.0 368.0 L509.0 364.0 L507.0 364.0 L505.0 368.0 L485.0 368.0 L482.0 364.0 L480.0 364.0 L478.0 368.0 L458.0 368.0 L455.0 364.0 L452.0 364.0Z" stroke="#ff8000" fill="none" stroke-width="1"/><path d="M454.0 371.0 L474.0 370.0 L587.0 370.0 L588.0 373.0 L586.0 375.0 L588.0 378.0 L565.0 378.0 L562.0 374.0 L560.0 374.0 L558.0 378.0 L541.0 378.0 L538.0 374.0 L536.0 374.0 L534.0 378.0 L514.0 378.0 L511.0 374.0 L509.0 374.0 L507.0 378.0 L487.0 378.0 L484.0 374.0 L482.0 374.0 L480.0 378.0 L460.0 378.0 L457.0 374.0 L454.0 374.0Z" stroke="#ff8000" fill="none" stroke-width="1"/><path d="M589.0 375.5 L597.0 359.5 L619.0 359.5 L619.0 357.0 L633.5 357.0 L633.5 359.5 L646.0 359.5 L662.5 365.5 L662.5 376.5 L638.0 376.5 L638.0 378.5 L627.0 378.5 L627.0 376.5Z" stroke="#ff8000" fill="none" stroke-width="1"/><path d="M674.0 377.5 L683.0 361.0 L704.5 361.0 L704.5 358.0 L718.5 358.0 L718.5 361.0 L732.0 361.0 L747.5 366.0 L747.5 377.5 L724.5 377.5 L724.5 379.5 L713.0 379.5 L713.0 377.5Z" stroke="#ff8000" fill="none" stroke-width="1"/><path d="M449.0 384.0 L454.0 381.0 L461.0 380.0 L488.0 380.0 L491.0 383.0 L491.0 389.0 L488.0 392.0 L461.0 392.0 L454.0 391.0 L449.0 388.0Z" stroke="#000" fill="none" stroke-width="1"/><path d="M449.5 384.5h5v3h-5" fill="none" stroke="#000"/><path d="M495.0 384.2 L500.0 383.5 L507.0 382.5 L514.0 382.5 L517.0 385.5 L517.0 387.0 L514.0 390.0 L507.0 390.0 L500.0 389.0 L495.0 388.2Z" stroke="#000" fill="none" stroke-width="1"/><path d="M495.5 384.75h5v3h-5" fill="none" stroke="#000"/><path d="M765.0 365.5 L784.2 361.6 L818.0 359.5 L820.0 360.5 L820.0 372.5 L818.0 373.5 L784.2 371.4 L765.0 367.5Z" stroke="#000" fill="none" stroke-width="1"/><path d="M771.0 381.0 L776.0 377.0 L783.0 376.0 L815.0 376.0 L818.0 379.0 L818.0 387.0 L815.0 390.0 L783.0 390.0 L776.0 389.0 L771.0 385.0Z" stroke="#000" fill="none" stroke-width="1"/><path d="M771.5 381.5h5v3h-5" fill="none" stroke="#000"/><path d="M847.0 362.5 L852.0 360.0 L859.0 359.0 L880.0 359.0 L883.0 362.0 L883.0 367.0 L880.0 370.0 L859.0 370.0 L852.0 369.0 L847.0 366.5Z" stroke="#000" fill="none" stroke-width="1"/><path d="M847.5 363.0h5v3h-5" fill="none" stroke="#000"/><path d="M894.0 360.8 L899.0 359.0 L906.0 358.0 L920.0 358.0 L923.0 361.0 L923.0 364.5 L920.0 367.5 L906.0 367.5 L899.0 366.5 L894.0 364.8Z" stroke="#000" fill="none" stroke-width="1"/><path d="M894.5 361.25h5v3h-5" fill="none" stroke="#000"/><path d="M928.0 360.0 L931.0 357.5 L942.0 357.5 L952.0 359.5 L964.0 360.5 L964.0 363.5 L952.0 364.5 L942.0 366.5 L931.0 366.5 L928.0 364.0Z" stroke="#000" fill="none" stroke-width="1"/><path d="M1193.0 363.5 L1208.0 360.6 L1234.0 359.0 L1236.0 360.0 L1236.0 369.0 L1234.0 370.0 L1208.0 368.4 L1193.0 365.5Z" stroke="#000" fill="none" stroke-width="1"/><path d="M848.0 423.5 L869.4 419.2 L907.0 417.0 L909.0 418.0 L909.0 431.0 L907.0 432.0 L869.4 429.8 L848.0 425.5Z" stroke="#000" fill="none" stroke-width="1"/><path d="M961.0 424.0 L944.2 420.4 L915.0 418.5 L913.0 419.5 L913.0 430.5 L915.0 431.5 L944.2 429.6 L961.0 426.0Z" stroke="#000" fill="none" stroke-width="1"/><rect x="926.5" y="423.0" width="12" height="5.5" fill="none" stroke="#000"/><path d="M1013.0 423.0 L995.9 420.1 L966.0 418.5 L964.0 419.5 L964.0 428.5 L966.0 429.5 L995.9 427.9 L1013.0 425.0Z" stroke="#000" fill="none" stroke-width="1"/><path d="M1080.0 422.5 L1057.6 417.9 L1018.0 415.5 L1016.0 416.5 L1016.0 430.5 L1018.0 431.5 L1057.6 429.1 L1080.0 424.5Z" stroke="#000" fill="none" stroke-width="1"/><rect x="1035.5" y="422.0" width="11" height="5.5" fill="none" stroke="#000"/><path d="M452.0 401.0 L452.0 396.5 L550.0 389.0 L640.0 381.5 L650.0 382.0 L740.0 389.0 L826.0 397.0 L826.0 400.5 L740.0 393.0 L650.0 387.5 L640.0 387.0 L550.0 394.0 L455.0 401.5Z" stroke="#0000ff" fill="none" stroke-width="1"/><path d="M477 399.6v-2h3v2" fill="none" stroke="#0000ff"/><path d="M511 396.9v-2h3v2" fill="none" stroke="#0000ff"/><path d="M541 394.6v-2h3v2" fill="none" stroke="#0000ff"/><path d="M572 392.2v-2h3v2" fill="none" stroke="#0000ff"/><path d="M604 389.7v-2h3v2" fill="none" stroke="#0000ff"/><path d="M636 387.2v-2h3v2" fill="none" stroke="#0000ff"/><path d="M667 389.0v-2h3v2" fill="none" stroke="#0000ff"/><path d="M698 391.3v-2h3v2" fill="none" stroke="#0000ff"/><path d="M729 393.5v-2h3v2" fill="none" stroke="#0000ff"/><path d="M760 395.7v-2h3v2" fill="none" stroke="#0000ff"/><path d="M790 397.9v-2h3v2" fill="none" stroke="#0000ff"/><path d="M448.0 431.0 L448.0 421.0 L450.0 414.0 L453.0 410.0 L640.0 388.0 L832.0 409.5 L835.0 413.0 L837.0 418.0 L837.0 431.0Z" stroke="#0000ff" fill="none" stroke-width="1"/><path d="M852.0 401.5 L852.0 391.5 L854.0 384.0 L857.0 379.5 L1046.0 359.3 L1237.0 379.3 L1240.0 383.0 L1241.0 388.0 L1241.0 401.5Z" stroke="#0000ff" fill="none" stroke-width="1"/><path d="M862.0 412.5 L862.0 406.0 L865.0 406.0 L865.0 404.0 L878.0 404.0 L878.0 406.0 L881.0 406.0 L881.0 404.0 L910.0 404.0 L910.0 406.0 L913.0 406.0 L913.0 404.0 L942.0 404.0 L942.0 406.0 L945.0 406.0 L945.0 404.0 L974.0 404.0 L974.0 406.0 L977.0 406.0 L977.0 404.0 L1006.0 404.0 L1006.0 406.0 L1009.0 406.0 L1009.0 404.0 L1035.0 404.0 L1035.0 406.0 L1038.0 406.0 L1038.0 404.0 L1062.0 404.0 L1062.0 406.0 L1065.0 406.0 L1065.0 404.0 L1091.0 404.0 L1091.0 406.0 L1094.0 406.0 L1094.0 404.0 L1123.0 404.0 L1123.0 406.0 L1126.0 406.0 L1126.0 404.0 L1155.0 404.0 L1155.0 406.0 L1158.0 406.0 L1158.0 404.0 L1187.0 404.0 L1187.0 406.0 L1190.0 406.0 L1190.0 404.0 L1219.0 404.0 L1219.0 406.0 L1222.0 406.0 L1222.0 404.0 L1231.0 404.0 L1231.0 406.0 L1237.0 406.0 L1237.0 412.5Z" stroke="#0000ff" fill="none" stroke-width="1"/><path d="M1083.5 422.0V417.5q1-3.5 5-3.5H1112.5V422.0z" fill="none" stroke="#0000ff"/><path d="M1084.5 432.0V427.5q1-3.5 5-3.5H1112.5V432.0z" fill="none" stroke="#0000ff"/><path d="M1116.5 423.0V419q1-3.5 5-3.5H1145.5V423.0z" fill="none" stroke="#0000ff"/><path d="M1116.5 432.0V427.5q1-3.5 5-3.5H1145.5V432.0z" fill="none" stroke="#0000ff"/><rect x="1148.5" y="418.5" width="17" height="4" fill="none" stroke="#0000ff"/><rect x="1165.5" y="418.5" width="18" height="4" fill="none" stroke="#0000ff"/><rect x="1148.5" y="422.5" width="17" height="4" fill="none" stroke="#0000ff"/><rect x="1165.5" y="422.5" width="18" height="4" fill="none" stroke="#0000ff"/><rect x="1148.5" y="426.5" width="17" height="4" fill="none" stroke="#0000ff"/><rect x="1165.5" y="426.5" width="18" height="4" fill="none" stroke="#0000ff"/><rect x="1186.5" y="413.5" width="28" height="3.5" fill="none" stroke="#0000ff" stroke-width="1.2"/><rect x="1212.5" y="413.5" width="27" height="3.5" fill="none" stroke="#0000ff" stroke-width="1.2"/><rect x="1186.5" y="417.5" width="28" height="3.5" fill="none" stroke="#0000ff" stroke-width="1.2"/><rect x="1212.5" y="417.5" width="27" height="3.5" fill="none" stroke="#0000ff" stroke-width="1.2"/><rect x="1186.5" y="421.5" width="28" height="3.5" fill="none" stroke="#0000ff" stroke-width="1.2"/><rect x="1212.5" y="421.5" width="27" height="3.5" fill="none" stroke="#0000ff" stroke-width="1.2"/><rect x="1186.5" y="425.5" width="28" height="3.5" fill="none" stroke="#0000ff" stroke-width="1.2"/><rect x="1212.5" y="425.5" width="27" height="3.5" fill="none" stroke="#0000ff" stroke-width="1.2"/><rect x="1186.5" y="429" width="28" height="3.5" fill="none" stroke="#0000ff" stroke-width="1.2"/><rect x="1212.5" y="429" width="27" height="3.5" fill="none" stroke="#0000ff" stroke-width="1.2"/><text x="447" y="455" font-size="5.5" font-weight="700" fill="#000" stroke="#000" stroke-width="0.15" textLength="67" lengthAdjust="spacingAndGlyphs">Sklejka Lotnicza 0,8mm, Offset 0,00</text><rect x="450.5" y="461.5" width="33" height="34" fill="none" stroke="#000" stroke-width="1.3"/><rect x="452.5" y="466.5" width="20" height="3" rx="1" fill="none" stroke="#000"/><rect x="452" y="463" width="2" height="2" fill="#000"/><rect x="479" y="463" width="2" height="2" fill="#000"/><rect x="452" y="492" width="2" height="2" fill="#000"/><rect x="479" y="492" width="2" height="2" fill="#000"/><rect x="485.5" y="461.5" width="33" height="34" fill="none" stroke="#000" stroke-width="1.3"/><rect x="487.5" y="466.5" width="20" height="3" rx="1" fill="none" stroke="#000"/><rect x="487" y="463" width="2" height="2" fill="#000"/><rect x="514" y="463" width="2" height="2" fill="#000"/><rect x="487" y="492" width="2" height="2" fill="#000"/><rect x="514" y="492" width="2" height="2" fill="#000"/><text x="448" y="513" font-size="5.5" font-weight="700" fill="#000" stroke="#000" stroke-width="0.15" textLength="64" lengthAdjust="spacingAndGlyphs">Sklejka Lotnicza 3mm, Offset 0,00</text><text x="434" y="537" font-size="5.5" font-weight="700" fill="#000" stroke="#000" stroke-width="0.15" textLength="5" lengthAdjust="spacingAndGlyphs">01</text><text x="434" y="552" font-size="5.5" font-weight="700" fill="#000" stroke="#000" stroke-width="0.15" textLength="5" lengthAdjust="spacingAndGlyphs">04</text><text x="434" y="566" font-size="5.5" font-weight="700" fill="#000" stroke="#000" stroke-width="0.15" textLength="5" lengthAdjust="spacingAndGlyphs">01</text><text x="434" y="581" font-size="5.5" font-weight="700" fill="#000" stroke="#000" stroke-width="0.15" textLength="5" lengthAdjust="spacingAndGlyphs">04</text><path d="M450.0 535.0 L450.7 533.3 L452.3 532.1 L454.3 531.0 L456.9 530.1 L459.8 529.2 L463.2 528.4 L466.9 527.7 L470.9 527.1 L475.2 526.5 L479.8 526.1 L484.8 525.7 L490.0 525.5 L495.4 525.3 L501.1 525.3 L507.1 525.3 L513.3 525.3 L519.8 525.3 L526.4 525.3 L533.3 525.5 L540.5 525.7 L547.8 526.0 L555.4 526.5 L563.1 527.1 L571.1 527.9 L579.3 529.0 L587.7 530.3 L596.2 532.0 L605.0 533.6 L605.0 534.1 L596.2 534.9 L587.7 535.6 L579.3 536.2 L571.1 536.7 L563.1 537.1 L555.4 537.4 L547.8 537.6 L540.5 537.8 L533.3 538.0 L526.4 538.1 L519.8 538.2 L513.3 538.2 L507.1 538.3 L501.1 538.3 L495.4 538.3 L490.0 538.3 L484.8 538.3 L479.8 538.2 L475.2 538.1 L470.9 537.9 L466.9 537.7 L463.2 537.5 L459.8 537.2 L456.9 536.9 L454.3 536.5 L452.3 536.1 L450.7 535.6 L450.0 535.0Z" stroke="#000" fill="none" stroke-width="1"/><path d="M450.0 533.0h3v4h-3" stroke="#000" fill="none"/><rect x="492.4" y="524.8" width="6" height="3" fill="none" stroke="#000"/><rect x="492.4" y="535.8" width="6" height="3" fill="none" stroke="#000"/><path d="M542.8 526.0v-3h10v3" fill="none" stroke="#000"/><rect x="504.5" y="528.5" width="18" height="7.5" rx="2" fill="none" stroke="#ff1493" stroke-width="1.2"/><circle cx="497.5" cy="530" r="2" fill="none" stroke="#000"/><path d="M450.0 550.0 L450.7 548.3 L452.2 547.1 L454.2 546.0 L456.7 545.1 L459.5 544.2 L462.8 543.4 L466.3 542.7 L470.2 542.1 L474.4 541.5 L478.9 541.1 L483.6 540.7 L488.7 540.5 L493.9 540.3 L499.5 540.3 L505.3 540.3 L511.3 540.3 L517.5 540.3 L524.0 540.3 L530.7 540.5 L537.6 540.7 L544.7 541.0 L552.0 541.5 L559.5 542.1 L567.2 542.9 L575.1 544.0 L583.2 545.3 L591.5 547.0 L600.0 548.6 L600.0 549.1 L591.5 549.9 L583.2 550.6 L575.1 551.2 L567.2 551.7 L559.5 552.1 L552.0 552.4 L544.7 552.6 L537.6 552.8 L530.7 553.0 L524.0 553.1 L517.5 553.2 L511.3 553.2 L505.3 553.3 L499.5 553.3 L493.9 553.3 L488.7 553.3 L483.6 553.3 L478.9 553.2 L474.4 553.1 L470.2 552.9 L466.3 552.7 L462.8 552.5 L459.5 552.2 L456.7 551.9 L454.2 551.5 L452.2 551.1 L450.7 550.6 L450.0 550.0Z" stroke="#000" fill="none" stroke-width="1"/><path d="M450.0 548.0h3v4h-3" stroke="#000" fill="none"/><rect x="490.9" y="539.8" width="6" height="3" fill="none" stroke="#000"/><rect x="490.9" y="550.8" width="6" height="3" fill="none" stroke="#000"/><path d="M539.7 541.0v-3h10v3" fill="none" stroke="#000"/><rect x="505.5" y="544.0" width="15" height="6.0" rx="2" fill="none" stroke="#ff1493" stroke-width="1.2"/><circle cx="497.5" cy="545" r="2" fill="none" stroke="#000"/><path d="M450.0 564.0 L450.7 562.3 L452.3 561.1 L454.3 560.0 L456.8 559.0 L459.8 558.1 L463.1 557.3 L466.8 556.6 L470.7 556.0 L475.1 555.4 L479.7 555.0 L484.5 554.6 L489.7 554.3 L495.1 554.2 L500.8 554.1 L506.7 554.1 L512.9 554.1 L519.3 554.1 L525.9 554.1 L532.8 554.2 L539.9 554.4 L547.2 554.7 L554.7 555.1 L562.4 555.7 L570.3 556.5 L578.5 557.5 L586.8 558.9 L595.3 560.5 L604.0 562.1 L604.0 562.6 L595.3 563.4 L586.8 564.1 L578.5 564.8 L570.3 565.3 L562.4 565.7 L554.7 566.0 L547.2 566.3 L539.9 566.5 L532.8 566.7 L525.9 566.8 L519.3 566.9 L512.9 567.0 L506.7 567.1 L500.8 567.1 L495.1 567.2 L489.7 567.2 L484.5 567.2 L479.7 567.1 L475.1 567.0 L470.7 566.8 L466.8 566.6 L463.1 566.4 L459.8 566.1 L456.8 565.8 L454.3 565.5 L452.3 565.1 L450.7 564.6 L450.0 564.0Z" stroke="#000" fill="none" stroke-width="1"/><path d="M450.0 562.0h3v4h-3" stroke="#000" fill="none"/><rect x="492.1" y="553.7" width="6" height="3" fill="none" stroke="#000"/><rect x="492.1" y="564.7" width="6" height="3" fill="none" stroke="#000"/><path d="M542.2 554.7v-3h10v3" fill="none" stroke="#000"/><rect x="504.5" y="557.5" width="18" height="7" rx="2" fill="none" stroke="#ff1493" stroke-width="1.2"/><circle cx="497.5" cy="558" r="2" fill="none" stroke="#000"/><path d="M450.0 578.5 L450.7 576.8 L452.2 575.6 L454.2 574.5 L456.7 573.6 L459.5 572.7 L462.8 571.9 L466.3 571.2 L470.2 570.6 L474.4 570.0 L478.9 569.6 L483.6 569.2 L488.7 569.0 L493.9 568.8 L499.5 568.8 L505.3 568.8 L511.3 568.8 L517.5 568.8 L524.0 568.8 L530.7 569.0 L537.6 569.2 L544.7 569.5 L552.0 570.0 L559.5 570.6 L567.2 571.4 L575.1 572.5 L583.2 573.8 L591.5 575.5 L600.0 577.1 L600.0 577.6 L591.5 578.4 L583.2 579.1 L575.1 579.7 L567.2 580.2 L559.5 580.6 L552.0 580.9 L544.7 581.1 L537.6 581.3 L530.7 581.5 L524.0 581.6 L517.5 581.7 L511.3 581.7 L505.3 581.8 L499.5 581.8 L493.9 581.8 L488.7 581.8 L483.6 581.8 L478.9 581.7 L474.4 581.6 L470.2 581.4 L466.3 581.2 L462.8 581.0 L459.5 580.7 L456.7 580.4 L454.2 580.0 L452.2 579.6 L450.7 579.1 L450.0 578.5Z" stroke="#000" fill="none" stroke-width="1"/><path d="M450.0 576.5h3v4h-3" stroke="#000" fill="none"/><rect x="490.9" y="568.3" width="6" height="3" fill="none" stroke="#000"/><rect x="490.9" y="579.3" width="6" height="3" fill="none" stroke="#000"/><path d="M539.7 569.5v-3h10v3" fill="none" stroke="#000"/><rect x="505.5" y="572.5" width="15" height="6.5" rx="2" fill="none" stroke="#ff1493" stroke-width="1.2"/><circle cx="497.5" cy="573" r="2" fill="none" stroke="#000"/><rect x="450.5" y="593.5" width="41" height="53" fill="none" stroke="#ff0080" stroke-width="1.2"/><path d="M459.5 599.5H483.5V617.5q3 3 0 6V639.5H459.5V623.5q-3-3 0-6z" fill="none" stroke="#ff0080" stroke-width="1.2"/><rect x="494.5" y="583.5" width="33" height="34.5" fill="none" stroke="#000" stroke-width="1.2"/><rect x="497.5" y="586.5" width="27" height="28.5" rx="4" fill="none" stroke="#000"/><rect x="494.5" y="623.0" width="33" height="33.0" fill="none" stroke="#000" stroke-width="1.2"/><rect x="497.5" y="626.0" width="27" height="27.0" rx="4" fill="none" stroke="#000"/><path d="M534.5 607.0 L557.0 585.0 L596.5 600.5 L600.5 603.0 L600.5 620.0 L534.5 620.0 L534.5 616.0 L532.5 616.0 L532.5 610.0 L534.5 610.0Z" stroke="#000" fill="none" stroke-width="1.2"/><path d="M547.5 606.0 L559.5 595.5 L583.5 602.0 L585.0 612.0 L549.0 612.0Z" stroke="#000" fill="none" stroke-width="1"/><path d="M534.5 622.5 L598.5 622.5 L598.5 636.0 L573.5 657.0 L535.0 641.0 L535.0 636.0 L533.0 636.0 L533.0 629.0 L534.5 629.0Z" stroke="#000" fill="none" stroke-width="1.2"/><path d="M546.0 637.0 L551.0 630.0 L583.5 630.0 L586.0 634.0 L573.0 646.0 L563.0 646.0Z" stroke="#000" fill="none" stroke-width="1"/><circle cx="557" cy="586" r="2" fill="none" stroke="#000"/><circle cx="573.5" cy="654" r="1.8" fill="none" stroke="#000"/><text x="447" y="676" font-size="5.5" font-weight="700" fill="#000" stroke="#000" stroke-width="0.15" textLength="82" lengthAdjust="spacingAndGlyphs">Sklejka Lotnicza 1mm, (0,8+0,2)Bawey, offset 0,00</text><path d="M461.0 681.0 L462.8 681.2 L464.5 681.7 L466.2 682.6 L467.8 683.9 L469.2 685.4 L470.4 687.2 L471.4 689.2 L472.2 691.4 L472.8 693.7 L473.0 696.0 L472.9 698.3 L472.6 700.6 L471.9 702.8 L471.0 704.8 L469.8 706.6 L468.3 708.1 L466.7 709.4 L464.9 710.3 L463.0 710.8 L461.0 711.0 L459.0 710.8 L457.1 710.3 L455.3 709.4 L453.7 708.1 L452.2 706.6 L451.0 704.8 L450.1 702.8 L449.4 700.6 L449.1 698.3 L449.0 696.0 L449.2 693.7 L449.8 691.4 L450.6 689.2 L451.6 687.2 L452.8 685.4 L454.2 683.9 L455.8 682.6 L457.5 681.7 L459.2 681.2Z" stroke="#0000ff" fill="none"/><path d="M459.5 681V689H462.5V681" stroke="#0000ff" fill="none"/><rect x="449.5" y="705.5" width="11.0" height="28" rx="0" fill="none" stroke="#0000ff"/><rect x="462.5" y="705.5" width="11.0" height="28" rx="0" fill="none" stroke="#0000ff"/><path d="M496.0 681.0 L498.8 681.4 L501.6 682.4 L504.3 684.1 L506.8 686.4 L509.1 689.3 L511.2 692.7 L513.0 696.6 L514.4 700.7 L515.4 705.0 L516.0 709.5 L516.1 714.0 L515.6 718.3 L514.6 722.4 L513.1 726.3 L511.1 729.7 L508.7 732.6 L505.9 734.9 L502.8 736.6 L499.4 737.6 L496.0 738.0 L492.6 737.6 L489.2 736.6 L486.1 734.9 L483.3 732.6 L480.9 729.7 L478.9 726.3 L477.4 722.4 L476.4 718.3 L475.9 714.0 L476.0 709.5 L476.6 705.0 L477.6 700.7 L479.0 696.6 L480.8 692.7 L482.9 689.3 L485.2 686.4 L487.7 684.1 L490.4 682.4 L493.2 681.4Z" stroke="#0000ff" fill="none"/><path d="M494.5 681V689H497.5V681" stroke="#0000ff" fill="none"/><path d="M484.0 692.0 L507.0 692.0 L509.0 697.0 L509.0 707.0 L512.0 711.0 L512.0 722.0 L507.0 731.0 L485.0 731.0 L480.0 723.0 L480.0 711.0 L483.0 707.0 L483.0 697.0Z" stroke="#0000ff" fill="none" stroke-width="1"/><rect x="479.5" y="723.5" width="15.0" height="30" rx="0" fill="none" stroke="#0000ff"/><rect x="497.5" y="723.5" width="15.0" height="30" rx="0" fill="none" stroke="#0000ff"/><path d="M518 687H523V682H528V690H524V702Q524 716 542.0 716Q560 716 560 702V690H556V682H561V687H566V704Q566 722 542.0 722Q518 722 518 704z" stroke="#0000ff" fill="none"/><path d="M521 708L526 735H559L563 708M540.5 716V735M543.5 716V735" stroke="#0000ff" fill="none"/><path d="M567 686H572V681H577V689H573V701Q573 722 595.5 722Q618 722 618 701V689H614V681H619V686H624V703Q624 729 595.5 729Q567 729 567 703z" stroke="#0000ff" fill="none"/><path d="M570 710L579 740H613L621 710M594.0 722V740M597.0 722V740" stroke="#0000ff" fill="none"/><path d="M586.5 683.0 L587.4 683.2 L588.2 683.8 L589.0 684.9 L589.7 686.2 L590.4 688.0 L590.9 690.0 L591.4 692.3 L591.7 694.7 L591.9 697.3 L592.0 700.0 L591.9 702.7 L591.7 705.3 L591.4 707.7 L590.9 710.0 L590.4 712.0 L589.7 713.8 L589.0 715.1 L588.2 716.2 L587.4 716.8 L586.5 717.0 L585.6 716.8 L584.8 716.2 L584.0 715.1 L583.3 713.8 L582.6 712.0 L582.1 710.0 L581.6 707.7 L581.3 705.3 L581.1 702.7 L581.0 700.0 L581.1 697.3 L581.3 694.7 L581.6 692.3 L582.1 690.0 L582.6 688.0 L583.3 686.2 L584.0 684.9 L584.8 683.8 L585.6 683.2Z" stroke="#0000ff" fill="none"/><path d="M626 686H631V681H637V689H633V701Q633 726 657.0 726Q681 726 681 701V689H677V681H683V686H688V703Q688 733 657.0 733Q626 733 626 703z" stroke="#0000ff" fill="none"/><path d="M629 712L640 745H674L685 712M655.5 726V745M658.5 726V745" stroke="#0000ff" fill="none"/><path d="M634.0 709.0 L645.0 690.0 L668.0 690.0 L678.0 709.0 L674.0 711.0 L662.0 696.0 L650.0 696.0 L638.0 711.0Z" stroke="#0000ff" fill="none" stroke-width="1"/><path d="M676 686H681V681H688V689H684V701Q684 712 714.5 712Q745 712 745 701V689H741V681H748V686H753V703Q753 741 714.5 741Q676 741 676 703z" stroke="#0000ff" fill="none"/><path d="M679 725L704 751H736L750 725M713.0 712V751M716.0 712V751" stroke="#0000ff" fill="none"/><path d="M698.0 725.0 L703.0 718.0 L740.0 718.0 L743.0 724.0 L735.0 734.0 L706.0 734.0Z" stroke="#0000ff" fill="none" stroke-width="1"/><path d="M754 686H759V681H766V689H762V701Q762 718 788.0 718Q814 718 814 701V689H810V681H817V686H822V703Q822 746 788.0 746Q754 746 754 703z" stroke="#0000ff" fill="none"/><path d="M757 730L772 756H805L819 730M786.5 718V756M789.5 718V756" stroke="#0000ff" fill="none"/><path d="M767.0 730.0 L772.0 724.0 L807.0 724.0 L810.0 730.0 L802.0 740.0 L775.0 740.0Z" stroke="#0000ff" fill="none" stroke-width="1"/><path d="M860.0 681.0 L863.9 681.6 L867.8 683.5 L871.6 686.6 L875.5 690.8 L879.2 696.1 L882.8 702.2 L886.1 709.1 L889.0 716.6 L891.3 724.4 L893.0 732.5 L893.9 740.6 L893.8 748.4 L892.7 755.9 L890.6 762.8 L887.5 768.9 L883.3 774.2 L878.3 778.4 L872.6 781.5 L866.4 783.4 L860.0 784.0 L853.6 783.4 L847.4 781.5 L841.7 778.4 L836.7 774.2 L832.5 768.9 L829.4 762.8 L827.3 755.9 L826.2 748.4 L826.1 740.6 L827.0 732.5 L828.7 724.4 L831.0 716.6 L833.9 709.1 L837.2 702.2 L840.8 696.1 L844.5 690.8 L848.4 686.6 L852.2 683.5 L856.1 681.6Z" stroke="#0000ff" fill="none"/><path d="M838 697H825V703H834M880 697H895V703H886" stroke="#0000ff" fill="none"/><path d="M860.5 703.0 L865.0 703.5 L869.3 704.8 L873.4 707.1 L877.3 710.2 L880.7 714.0 L883.6 718.5 L885.9 723.5 L887.6 728.9 L888.6 734.6 L889.0 740.5 L888.6 746.4 L887.6 752.1 L885.9 757.5 L883.6 762.5 L880.7 767.0 L877.3 770.8 L873.4 773.9 L869.3 776.2 L865.0 777.5 L860.5 778.0 L856.0 777.5 L851.7 776.2 L847.6 773.9 L843.7 770.8 L840.3 767.0 L837.4 762.5 L835.1 757.5 L833.4 752.1 L832.4 746.4 L832.0 740.5 L832.4 734.6 L833.4 728.9 L835.1 723.5 L837.4 718.5 L840.3 714.0 L843.7 710.2 L847.6 707.1 L851.7 704.8 L856.0 703.5Z" stroke="#0000ff" fill="none"/><path d="M846.0 697.0 L851.0 688.0 L868.0 688.0 L873.0 697.0Z" stroke="#0000ff" fill="none" stroke-width="1"/><path d="M840.0 706.0 L879.0 706.0 L866.0 776.0 L853.0 776.0Z" stroke="#00ff00" fill="none" stroke-width="1"/><rect x="857.5" y="715.5" width="2" height="16" rx="0" fill="none" stroke="#00ff00"/><rect x="857.5" y="754.5" width="2" height="16" rx="0" fill="none" stroke="#00ff00"/><path d="M836.0 783.0 L860.0 783.0 L856.0 796.0 L842.0 796.0Z" stroke="#0000ff" fill="none" stroke-width="1"/><path d="M861.0 783.0 L884.0 783.0 L879.0 796.0 L864.0 796.0Z" stroke="#0000ff" fill="none" stroke-width="1"/><path d="M931.0 683.0 L934.9 683.6 L938.8 685.4 L942.6 688.4 L946.5 692.5 L950.2 697.5 L953.8 703.4 L957.1 710.0 L960.0 717.2 L962.3 724.8 L964.0 732.5 L964.9 740.2 L964.8 747.8 L963.7 755.0 L961.6 761.6 L958.5 767.5 L954.3 772.5 L949.3 776.6 L943.6 779.6 L937.4 781.4 L931.0 782.0 L924.6 781.4 L918.4 779.6 L912.7 776.6 L907.7 772.5 L903.5 767.5 L900.4 761.6 L898.3 755.0 L897.2 747.8 L897.1 740.2 L898.0 732.5 L899.7 724.8 L902.0 717.2 L904.9 710.0 L908.2 703.4 L911.8 697.5 L915.5 692.5 L919.4 688.4 L923.2 685.4 L927.1 683.6Z" stroke="#0000ff" fill="none"/><path d="M912 697H896V705H906M950 697H966V705H956" stroke="#0000ff" fill="none"/><path d="M905 708H957Q962 730 959 752Q958 754 955 754H908Q903 754 903 750Q902 730 905 708z" stroke="#0000ff" fill="none"/><path d="M916.0 727.0 L928.0 710.0 L930.0 721.0 L945.0 727.0 L916.0 727.0Z" stroke="#0000ff" fill="none" stroke-width="1"/><path d="M929.5 735.0 L933.6 735.1 L937.7 735.4 L941.5 735.8 L945.1 736.4 L948.2 737.2 L950.9 738.1 L953.1 739.1 L954.7 740.2 L955.7 741.3 L956.0 742.5 L955.7 743.7 L954.7 744.8 L953.1 745.9 L950.9 746.9 L948.2 747.8 L945.1 748.6 L941.5 749.2 L937.7 749.6 L933.6 749.9 L929.5 750.0 L925.4 749.9 L921.3 749.6 L917.5 749.2 L913.9 748.6 L910.8 747.8 L908.1 746.9 L905.9 745.9 L904.3 744.8 L903.3 743.7 L903.0 742.5 L903.3 741.3 L904.3 740.2 L905.9 739.1 L908.1 738.1 L910.8 737.2 L913.9 736.4 L917.5 735.8 L921.3 735.4 L925.4 735.1Z" stroke="#0000ff" fill="none"/><rect x="927.5" y="741.5" width="19" height="9" rx="0" fill="none" stroke="#5050a0"/><path d="M919.0 697.0 L925.0 689.0 L938.0 689.0 L944.0 697.0Z" stroke="#0000ff" fill="none" stroke-width="1"/><path d="M929.5 683V689H932.5V683" stroke="#0000ff" fill="none"/><rect x="920.5" y="757.5" width="1" height="7" rx="0" fill="none" stroke="#ff0080"/><rect x="940.5" y="757.5" width="1" height="7" rx="0" fill="none" stroke="#ff0080"/><rect x="914.5" y="778.5" width="15.5" height="19" rx="0" fill="none" stroke="#0000ff"/><rect x="932.0" y="778.5" width="15.5" height="19" rx="0" fill="none" stroke="#0000ff"/><path d="M1001.0 682.0 L1005.0 682.6 L1009.0 684.4 L1013.0 687.3 L1016.9 691.4 L1020.8 696.4 L1024.5 702.2 L1027.9 708.8 L1030.8 715.9 L1033.3 723.3 L1035.0 731.0 L1035.9 738.7 L1035.8 746.1 L1034.7 753.2 L1032.5 759.8 L1029.3 765.6 L1025.0 770.6 L1019.9 774.7 L1014.0 777.6 L1007.6 779.4 L1001.0 780.0 L994.4 779.4 L988.0 777.6 L982.1 774.7 L977.0 770.6 L972.7 765.6 L969.5 759.8 L967.3 753.2 L966.2 746.1 L966.1 738.7 L967.0 731.0 L968.7 723.3 L971.2 715.9 L974.1 708.8 L977.5 702.2 L981.2 696.4 L985.1 691.4 L989.0 687.3 L993.0 684.4 L997.0 682.6Z" stroke="#0000ff" fill="none"/><path d="M982 699H963V705H975M1022 699H1039V705H1027" stroke="#0000ff" fill="none"/><path d="M978 706H1024Q1029 725 1027 744Q1026 746 1023 746H979Q976 746 975 744Q974 725 978 706z" stroke="#0000ff" fill="none"/><path d="M990.0 718.0 L998.0 718.0 L998.0 716.0 L1004.0 716.0 L1004.0 718.0 L1012.0 718.0 L1012.0 733.0 L1004.0 733.0 L1004.0 735.0 L998.0 735.0 L998.0 733.0 L990.0 733.0Z" stroke="#0000ff" fill="none" stroke-width="1"/><path d="M988.0 697.0 L994.0 689.0 L1008.0 689.0 L1014.0 697.0Z" stroke="#0000ff" fill="none" stroke-width="1"/><path d="M999.5 682V688H1002.5V682" stroke="#0000ff" fill="none"/><rect x="991.5" y="751.5" width="2" height="6" rx="0" fill="none" stroke="#ff0080"/><rect x="1010.5" y="751.5" width="2" height="6" rx="0" fill="none" stroke="#ff0080"/><rect x="986.5" y="771.5" width="15.5" height="26" rx="0" fill="none" stroke="#0000ff"/><rect x="1004.0" y="771.5" width="15.5" height="26" rx="0" fill="none" stroke="#0000ff"/><path d="M1066.5 682.0 L1070.4 682.5 L1074.3 684.1 L1078.1 686.7 L1081.7 690.2 L1085.1 694.6 L1088.3 699.7 L1091.0 705.5 L1093.3 711.7 L1095.0 718.3 L1096.0 725.0 L1096.3 731.7 L1095.9 738.3 L1094.6 744.5 L1092.5 750.3 L1089.6 755.4 L1085.9 759.8 L1081.7 763.3 L1076.9 765.9 L1071.8 767.5 L1066.5 768.0 L1061.2 767.5 L1056.1 765.9 L1051.3 763.3 L1047.1 759.8 L1043.4 755.4 L1040.5 750.3 L1038.4 744.5 L1037.1 738.3 L1036.7 731.7 L1037.0 725.0 L1038.0 718.3 L1039.7 711.7 L1042.0 705.5 L1044.7 699.7 L1047.9 694.6 L1051.3 690.2 L1054.9 686.7 L1058.7 684.1 L1062.6 682.5Z" stroke="#0000ff" fill="none"/><path d="M1066.5 690.0 L1070.0 690.4 L1073.4 691.7 L1076.6 693.9 L1079.7 696.8 L1082.6 700.4 L1085.2 704.6 L1087.3 709.4 L1089.1 714.5 L1090.3 719.9 L1091.0 725.5 L1091.1 731.1 L1090.5 736.5 L1089.3 741.6 L1087.5 746.4 L1085.0 750.6 L1082.1 754.2 L1078.6 757.1 L1074.8 759.3 L1070.7 760.6 L1066.5 761.0 L1062.3 760.6 L1058.2 759.3 L1054.4 757.1 L1050.9 754.2 L1048.0 750.6 L1045.5 746.4 L1043.7 741.6 L1042.5 736.5 L1041.9 731.1 L1042.0 725.5 L1042.7 719.9 L1043.9 714.5 L1045.7 709.4 L1047.8 704.6 L1050.4 700.4 L1053.3 696.8 L1056.4 693.9 L1059.6 691.7 L1063.0 690.4Z" stroke="#0000ff" fill="none"/><path d="M1066.5 705.0 L1069.0 705.3 L1071.4 706.1 L1073.7 707.5 L1076.0 709.3 L1078.0 711.6 L1079.8 714.3 L1081.4 717.3 L1082.6 720.5 L1083.5 724.0 L1084.0 727.5 L1084.1 731.0 L1083.7 734.5 L1082.8 737.7 L1081.5 740.7 L1079.7 743.4 L1077.6 745.7 L1075.2 747.5 L1072.4 748.9 L1069.5 749.7 L1066.5 750.0 L1063.5 749.7 L1060.6 748.9 L1057.8 747.5 L1055.4 745.7 L1053.3 743.4 L1051.5 740.7 L1050.2 737.7 L1049.3 734.5 L1048.9 731.0 L1049.0 727.5 L1049.5 724.0 L1050.4 720.5 L1051.6 717.3 L1053.2 714.3 L1055.0 711.6 L1057.0 709.3 L1059.3 707.5 L1061.6 706.1 L1064.0 705.3Z" stroke="#0000ff" fill="none"/><path d="M1066.0 716.0 L1067.7 716.2 L1069.4 716.7 L1071.0 717.5 L1072.5 718.7 L1073.8 720.1 L1074.9 721.8 L1075.8 723.6 L1076.5 725.7 L1076.9 727.8 L1077.0 730.0 L1076.9 732.2 L1076.5 734.3 L1075.8 736.4 L1074.9 738.2 L1073.8 739.9 L1072.5 741.3 L1071.0 742.5 L1069.4 743.3 L1067.7 743.8 L1066.0 744.0 L1064.3 743.8 L1062.6 743.3 L1061.0 742.5 L1059.5 741.3 L1058.2 739.9 L1057.1 738.2 L1056.2 736.4 L1055.5 734.3 L1055.1 732.2 L1055.0 730.0 L1055.1 727.8 L1055.5 725.7 L1056.2 723.6 L1057.1 721.8 L1058.2 720.1 L1059.5 718.7 L1061.0 717.5 L1062.6 716.7 L1064.3 716.2Z" stroke="#0000ff" fill="none"/><path d="M1064.5 682V689H1067.5V682" stroke="#0000ff" fill="none"/><rect x="1050.5" y="764.5" width="15.5" height="32" rx="0" fill="none" stroke="#0000ff"/><rect x="1068.0" y="764.5" width="15.5" height="32" rx="0" fill="none" stroke="#0000ff"/><path d="M1126.5 681.0 L1130.2 681.5 L1133.8 683.0 L1137.3 685.4 L1140.7 688.7 L1143.9 692.9 L1146.8 697.7 L1149.3 703.1 L1151.4 709.0 L1153.0 715.2 L1154.0 721.5 L1154.3 727.8 L1153.9 734.0 L1152.7 739.9 L1150.7 745.3 L1148.0 750.1 L1144.6 754.3 L1140.7 757.6 L1136.2 760.0 L1131.4 761.5 L1126.5 762.0 L1121.6 761.5 L1116.8 760.0 L1112.3 757.6 L1108.4 754.3 L1105.0 750.1 L1102.3 745.3 L1100.3 739.9 L1099.1 734.0 L1098.7 727.8 L1099.0 721.5 L1100.0 715.2 L1101.6 709.0 L1103.7 703.1 L1106.2 697.7 L1109.1 692.9 L1112.3 688.7 L1115.7 685.4 L1119.2 683.0 L1122.8 681.5Z" stroke="#0000ff" fill="none"/><path d="M1126.0 690.0 L1129.1 690.4 L1132.2 691.6 L1135.1 693.5 L1137.9 696.2 L1140.5 699.5 L1142.8 703.4 L1144.7 707.7 L1146.3 712.5 L1147.4 717.4 L1148.0 722.5 L1148.1 727.6 L1147.6 732.5 L1146.5 737.3 L1144.8 741.6 L1142.7 745.5 L1140.0 748.8 L1136.9 751.5 L1133.4 753.4 L1129.8 754.6 L1126.0 755.0 L1122.2 754.6 L1118.6 753.4 L1115.1 751.5 L1112.0 748.8 L1109.3 745.5 L1107.2 741.6 L1105.5 737.3 L1104.4 732.5 L1103.9 727.6 L1104.0 722.5 L1104.6 717.4 L1105.7 712.5 L1107.3 707.7 L1109.2 703.4 L1111.5 699.5 L1114.1 696.2 L1116.9 693.5 L1119.8 691.6 L1122.9 690.4Z" stroke="#0000ff" fill="none"/><path d="M1124.5 681V688H1127.5V681" stroke="#0000ff" fill="none"/><rect x="1110.5" y="758.5" width="15.5" height="37" rx="0" fill="none" stroke="#0000ff"/><rect x="1128.0" y="758.5" width="15.5" height="37" rx="0" fill="none" stroke="#0000ff"/><path d="M1130 712V737Q1114 730 1114 724Q1115 716 1130 712zM1115 723h10v2h-10" stroke="#ff8000" fill="none"/><path d="M1162 684Q1151 740 1160 802Q1172 740 1162 684z" stroke="#0000ff" fill="none"/><path d="M1182 684Q1171 740 1180 802Q1191 740 1182 684z" stroke="#0000ff" fill="none"/><rect x="1203.5" y="682.5" width="15.5" height="42" rx="0" fill="none" stroke="#0000ff"/><rect x="1221.0" y="682.5" width="15.5" height="42" rx="0" fill="none" stroke="#0000ff"/><path d="M1220.0 719.0 L1224.2 719.4 L1228.3 720.8 L1232.1 722.9 L1235.5 725.9 L1238.4 729.5 L1240.8 733.8 L1242.5 738.7 L1243.7 743.9 L1244.1 749.4 L1244.0 755.0 L1243.3 760.6 L1242.0 766.1 L1240.2 771.3 L1238.0 776.2 L1235.5 780.5 L1232.7 784.1 L1229.7 787.1 L1226.6 789.2 L1223.3 790.6 L1220.0 791.0 L1216.7 790.6 L1213.4 789.2 L1210.3 787.1 L1207.3 784.1 L1204.5 780.5 L1202.0 776.2 L1199.8 771.3 L1198.0 766.1 L1196.7 760.6 L1196.0 755.0 L1195.9 749.4 L1196.3 743.9 L1197.5 738.7 L1199.2 733.8 L1201.6 729.5 L1204.5 725.9 L1207.9 722.9 L1211.7 720.8 L1215.8 719.4Z" stroke="#0000ff" fill="none"/><path d="M1220.0 726.0 L1223.4 726.4 L1226.7 727.4 L1229.8 729.2 L1232.5 731.6 L1234.9 734.6 L1236.7 738.2 L1238.1 742.1 L1238.9 746.4 L1239.2 750.9 L1239.0 755.5 L1238.3 760.1 L1237.2 764.6 L1235.8 768.9 L1234.0 772.8 L1232.0 776.4 L1229.8 779.4 L1227.5 781.8 L1225.0 783.6 L1222.5 784.6 L1220.0 785.0 L1217.5 784.6 L1215.0 783.6 L1212.5 781.8 L1210.2 779.4 L1208.0 776.4 L1206.0 772.8 L1204.2 768.9 L1202.8 764.6 L1201.7 760.1 L1201.0 755.5 L1200.8 750.9 L1201.1 746.4 L1201.9 742.1 L1203.3 738.2 L1205.1 734.6 L1207.5 731.6 L1210.2 729.2 L1213.3 727.4 L1216.6 726.4Z" stroke="#0000ff" fill="none"/><path d="M1196 777h6q4 20 18 20q15 0 18-20h6q-2 20-24 29q-22-9-24-29z" stroke="#0000ff" fill="none"/><path d="M448.0 754.0 L481.0 754.0 L474.0 816.0 L456.0 816.0Z" stroke="#0000ff" fill="none" stroke-width="1"/><path d="M464 754V816M466 754V816" stroke="#0000ff"/><path d="M464.5 816.0 L466.1 816.3 L467.6 817.2 L469.0 818.6 L470.3 820.5 L471.5 822.9 L472.4 825.7 L473.2 828.8 L473.7 832.2 L474.0 835.8 L474.0 839.5 L473.8 843.2 L473.4 846.8 L472.8 850.2 L472.0 853.3 L471.0 856.1 L469.9 858.5 L468.6 860.4 L467.3 861.8 L465.9 862.7 L464.5 863.0 L463.1 862.7 L461.7 861.8 L460.4 860.4 L459.1 858.5 L458.0 856.1 L457.0 853.3 L456.2 850.2 L455.6 846.8 L455.2 843.2 L455.0 839.5 L455.0 835.8 L455.3 832.2 L455.8 828.8 L456.6 825.7 L457.5 822.9 L458.7 820.5 L460.0 818.6 L461.4 817.2 L462.9 816.3Z" stroke="#0000ff" fill="none"/><path d="M464.5 823.0 L465.4 823.2 L466.2 823.8 L467.0 824.9 L467.7 826.2 L468.4 828.0 L468.9 830.0 L469.4 832.3 L469.7 834.7 L469.9 837.3 L470.0 840.0 L469.9 842.7 L469.7 845.3 L469.4 847.7 L468.9 850.0 L468.4 852.0 L467.7 853.8 L467.0 855.1 L466.2 856.2 L465.4 856.8 L464.5 857.0 L463.6 856.8 L462.8 856.2 L462.0 855.1 L461.3 853.8 L460.6 852.0 L460.1 850.0 L459.6 847.7 L459.3 845.3 L459.1 842.7 L459.0 840.0 L459.1 837.3 L459.3 834.7 L459.6 832.3 L460.1 830.0 L460.6 828.0 L461.3 826.2 L462.0 824.9 L462.8 823.8 L463.6 823.2Z" stroke="#0000ff" fill="none"/><path d="M493.5 754.0 L495.8 754.3 L498.1 755.3 L500.3 756.8 L502.4 759.0 L504.3 761.6 L506.1 764.7 L507.5 768.2 L508.7 772.0 L509.5 775.9 L510.0 780.0 L510.1 784.1 L509.7 788.0 L508.9 791.8 L507.6 795.3 L506.0 798.4 L504.0 801.0 L501.7 803.2 L499.1 804.7 L496.3 805.7 L493.5 806.0 L490.7 805.7 L487.9 804.7 L485.3 803.2 L483.0 801.0 L481.0 798.4 L479.4 795.3 L478.1 791.8 L477.3 788.0 L476.9 784.1 L477.0 780.0 L477.5 775.9 L478.3 772.0 L479.5 768.2 L480.9 764.7 L482.7 761.6 L484.6 759.0 L486.7 756.8 L488.9 755.3 L491.2 754.3Z" stroke="#0000ff" fill="none"/><path d="M493.5 767.0 L495.1 767.2 L496.6 767.7 L498.0 768.6 L499.3 769.8 L500.5 771.2 L501.4 773.0 L502.2 774.9 L502.7 777.0 L503.0 779.2 L503.0 781.5 L502.8 783.8 L502.4 786.0 L501.8 788.1 L501.0 790.0 L500.0 791.8 L498.9 793.2 L497.6 794.4 L496.3 795.3 L494.9 795.8 L493.5 796.0 L492.1 795.8 L490.7 795.3 L489.4 794.4 L488.1 793.2 L487.0 791.8 L486.0 790.0 L485.2 788.1 L484.6 786.0 L484.2 783.8 L484.0 781.5 L484.0 779.2 L484.3 777.0 L484.8 774.9 L485.6 773.0 L486.5 771.2 L487.7 769.8 L489.0 768.6 L490.4 767.7 L491.9 767.2Z" stroke="#0000ff" fill="none"/><rect x="477.5" y="806.5" width="15.5" height="55" rx="0" fill="none" stroke="#0000ff"/><rect x="495.0" y="806.5" width="15.5" height="55" rx="0" fill="none" stroke="#0000ff"/><path d="M514 782V736H548V782M530 736V778M532 736V778" stroke="#0000ff" fill="none"/><path d="M530.5 778.0 L534.3 778.4 L537.9 779.7 L541.3 781.7 L544.4 784.5 L547.0 788.0 L549.1 792.0 L550.7 796.6 L551.7 801.5 L552.1 806.7 L552.0 812.0 L551.3 817.3 L550.2 822.5 L548.6 827.4 L546.7 832.0 L544.4 836.0 L541.9 839.5 L539.2 842.3 L536.4 844.3 L533.5 845.6 L530.5 846.0 L527.5 845.6 L524.6 844.3 L521.8 842.3 L519.1 839.5 L516.6 836.0 L514.3 832.0 L512.4 827.4 L510.8 822.5 L509.7 817.3 L509.0 812.0 L508.9 806.7 L509.3 801.5 L510.3 796.6 L511.9 792.0 L514.0 788.0 L516.6 784.5 L519.7 781.7 L523.1 779.7 L526.7 778.4Z" stroke="#0000ff" fill="none"/><path d="M530.5 785.0 L533.3 785.3 L536.0 786.2 L538.5 787.6 L540.7 789.6 L542.6 792.0 L544.1 794.9 L545.3 798.1 L545.9 801.6 L546.2 805.2 L546.0 809.0 L545.4 812.8 L544.6 816.4 L543.4 819.9 L541.9 823.1 L540.3 826.0 L538.5 828.4 L536.6 830.4 L534.6 831.8 L532.6 832.7 L530.5 833.0 L528.4 832.7 L526.4 831.8 L524.4 830.4 L522.5 828.4 L520.7 826.0 L519.1 823.1 L517.6 819.9 L516.4 816.4 L515.6 812.8 L515.0 809.0 L514.8 805.2 L515.1 801.6 L515.7 798.1 L516.9 794.9 L518.4 792.0 L520.3 789.6 L522.5 787.6 L525.0 786.2 L527.7 785.3Z" stroke="#0000ff" fill="none"/><path d="M571.0 736.0 L573.7 736.4 L576.3 737.5 L578.8 739.3 L581.2 741.8 L583.3 744.9 L585.1 748.6 L586.7 752.7 L587.9 757.1 L588.6 761.7 L589.0 766.5 L588.9 771.3 L588.4 775.9 L587.4 780.3 L586.0 784.4 L584.2 788.1 L582.0 791.2 L579.5 793.7 L576.8 795.5 L574.0 796.6 L571.0 797.0 L568.0 796.6 L565.2 795.5 L562.5 793.7 L560.0 791.2 L557.8 788.1 L556.0 784.4 L554.6 780.3 L553.6 775.9 L553.1 771.3 L553.0 766.5 L553.4 761.7 L554.1 757.1 L555.3 752.7 L556.9 748.6 L558.7 744.9 L560.8 741.8 L563.2 739.3 L565.7 737.5 L568.3 736.4Z" stroke="#0000ff" fill="none"/><path d="M570.5 746.0 L572.6 746.3 L574.5 747.1 L576.4 748.3 L578.1 750.1 L579.7 752.3 L580.9 754.9 L581.9 757.7 L582.6 760.9 L582.9 764.1 L583.0 767.5 L582.7 770.9 L582.2 774.1 L581.4 777.3 L580.3 780.1 L579.0 782.7 L577.6 784.9 L575.9 786.7 L574.2 787.9 L572.4 788.7 L570.5 789.0 L568.6 788.7 L566.8 787.9 L565.1 786.7 L563.4 784.9 L562.0 782.7 L560.7 780.1 L559.6 777.3 L558.8 774.1 L558.3 770.9 L558.0 767.5 L558.1 764.1 L558.4 760.9 L559.1 757.7 L560.1 754.9 L561.3 752.3 L562.9 750.1 L564.6 748.3 L566.5 747.1 L568.4 746.3Z" stroke="#0000ff" fill="none"/><rect x="554.5" y="797.5" width="15.5" height="48" rx="0" fill="none" stroke="#0000ff"/><rect x="572.0" y="797.5" width="15.5" height="48" rx="0" fill="none" stroke="#0000ff"/><path d="M603.0 741.0 L604.8 741.4 L606.6 742.4 L608.4 744.2 L610.0 746.5 L611.5 749.5 L612.9 753.0 L614.1 756.8 L615.0 761.0 L615.6 765.5 L616.0 770.0 L616.0 774.5 L615.7 779.0 L615.1 783.2 L614.1 787.0 L612.8 790.5 L611.3 793.5 L609.4 795.8 L607.4 797.6 L605.2 798.6 L603.0 799.0 L600.8 798.6 L598.6 797.6 L596.6 795.8 L594.7 793.5 L593.2 790.5 L591.9 787.0 L590.9 783.2 L590.3 779.0 L590.0 774.5 L590.0 770.0 L590.4 765.5 L591.0 761.0 L591.9 756.8 L593.1 753.0 L594.5 749.5 L596.0 746.5 L597.6 744.2 L599.4 742.4 L601.2 741.4Z" stroke="#0000ff" fill="none"/><rect x="597.5" y="756.5" width="13" height="31" rx="3" fill="none" stroke="#0000ff"/><rect x="602.5" y="748.5" width="4" height="5" rx="0" fill="none" stroke="#0000ff"/><path d="M588.0 799.0 L603.0 799.0 L600.0 851.0 L592.0 851.0Z" stroke="#0000ff" fill="none" stroke-width="1"/><path d="M604.0 799.0 L619.0 799.0 L616.0 851.0 L606.0 851.0Z" stroke="#0000ff" fill="none" stroke-width="1"/><path d="M616.0 746.0 L648.0 746.0 L640.0 862.0 L627.0 862.0Z" stroke="#0000ff" fill="none" stroke-width="1"/><path d="M632.0 812.0 L633.1 812.3 L634.2 813.1 L635.2 814.4 L636.1 816.2 L636.9 818.4 L637.7 821.1 L638.2 824.0 L638.7 827.2 L638.9 830.6 L639.0 834.0 L638.9 837.4 L638.7 840.8 L638.2 844.0 L637.7 846.9 L636.9 849.6 L636.1 851.8 L635.2 853.6 L634.2 854.9 L633.1 855.7 L632.0 856.0 L630.9 855.7 L629.8 854.9 L628.8 853.6 L627.9 851.8 L627.1 849.6 L626.3 846.9 L625.8 844.0 L625.3 840.8 L625.1 837.4 L625.0 834.0 L625.1 830.6 L625.3 827.2 L625.8 824.0 L626.3 821.1 L627.1 818.4 L627.9 816.2 L628.8 814.4 L629.8 813.1 L630.9 812.3Z" stroke="#0000ff" fill="none"/><path d="M632 746V810M634 746V810" stroke="#0000ff"/><path d="M654.0 758.0 L720.0 758.0 L760.0 760.0 L793.0 763.0 L793.0 769.0 L730.0 771.0 L654.0 772.0 L654.0 768.0 L656.0 765.0 L654.0 762.0Z" stroke="#0000ff" fill="none" stroke-width="1"/><rect x="702.5" y="762.5" width="1" height="5" rx="0" fill="none" stroke="#0000ff"/><rect x="736.5" y="762.5" width="2" height="4" rx="0" fill="none" stroke="#0000ff"/><rect x="734.5" y="763.5" width="10" height="1" rx="0" fill="none" stroke="#00ff00"/><rect x="774.5" y="764.5" width="2" height="3" rx="0" fill="none" stroke="#0000ff"/><path d="M645 782.5Q660 775 720 775Q760 778 805 788V790H720Q660 790 645 782.5z" stroke="#000" fill="none"/><rect x="659.5" y="781.0" width="2" height="4.0" rx="0" fill="none" stroke="#ff0080"/><rect x="701.5" y="779.0" width="2" height="8.0" rx="0" fill="none" stroke="#ff0080"/><rect x="704.5" y="779.0" width="18" height="8" rx="3" fill="none" stroke="#ff0080"/><circle cx="697" cy="779.5" r="2" fill="none" stroke="#000"/><rect x="766.5" y="783.0" width="2" height="2.0" rx="0" fill="none" stroke="#ff0080"/><path d="M645 799.5Q660 791 720 791Q760 794 805 806V808H720Q660 808 645 799.5z" stroke="#000" fill="none"/><rect x="659.5" y="798.0" width="2" height="4.0" rx="0" fill="none" stroke="#ff0080"/><rect x="701.5" y="796.0" width="2" height="8.0" rx="0" fill="none" stroke="#ff0080"/><rect x="704.5" y="796.0" width="18" height="8" rx="3" fill="none" stroke="#ff0080"/><circle cx="697" cy="796.5" r="2" fill="none" stroke="#000"/><rect x="766.5" y="800.0" width="2" height="2.0" rx="0" fill="none" stroke="#ff0080"/><path d="M640 851Q645 805 670 810Q695 805 700 851H692Q685 832 682 835H658Q655 832 648 851z" stroke="#0000ff" fill="none"/><circle cx="661" cy="826" r="3.5" fill="none" stroke="#000"/><circle cx="678" cy="826" r="3.5" fill="none" stroke="#000"/><path d="M700 851Q707 805 732 810Q757 805 764 851H756Q747 832 744 835H720Q717 832 708 851z" stroke="#0000ff" fill="none"/><circle cx="723" cy="826" r="3.5" fill="none" stroke="#000"/><circle cx="740" cy="826" r="3.5" fill="none" stroke="#000"/><path d="M668.5 810V815H671.5V810" stroke="#0000ff" fill="none"/><rect x="655.5" y="841.5" width="26" height="25" rx="0" fill="none" stroke="#ff00ff"/><circle cx="672" cy="854" r="1" fill="#ff00ff"/><path d="M721 862l4-5l3 2l4-5l3 1l3-5l3 3l-3 6l-4-1l-3 5l-3-1l-4 5z" stroke="#000" fill="none"/><path d="M761 867.5Q776.75 821 792.5 826Q808.25 821 824 867.5z" stroke="#0000ff" fill="none"/><path d="M791.5 826V846H793.5V826" stroke="#0000ff" fill="none"/><path d="M480 910.5Q494.0 872 508.0 877Q522.0 872 536 910.5z" stroke="#0000ff" fill="none"/><path d="M507.0 877V897H509.0V877" stroke="#0000ff" fill="none"/><path d="M513 849.5H574Q565 885 543 888Q521 885 513 849.5z" stroke="#0000ff" fill="none"/><path d="M541.5 867V888H544.5V867" stroke="#0000ff" fill="none"/><path d="M575.0 870.0 L640.0 860.0 L600.0 873.0Z" stroke="#0000ff" fill="none" stroke-width="1"/><path d="M549.0 892.0 L640.0 879.0 L737.0 876.0 L720.0 915.5 L569.0 915.5Z" stroke="#00ff00" fill="none" stroke-width="1"/><rect x="605.5" y="898.5" width="2" height="17" rx="0" fill="none" stroke="#00ff00"/><rect x="646.5" y="898.5" width="2" height="17" rx="0" fill="none" stroke="#00ff00"/><rect x="686.5" y="898.5" width="2" height="17" rx="0" fill="none" stroke="#00ff00"/><path d="M512 868Q470 882 452 897Q447 905 452 910L465 917.5L520 922.7L583 926.5L650 928.4L764 922.2L822 916.4L837 917L838 921.6H852Q855 921.6 855 925V930Q855 933 852 933H831.6V938.5H464V917.5" stroke="#ff8000" fill="none"/><path d="M512 873Q476 886 464 895V901H457V904.3H464V909L528 916.4L650 923.3L764 916.5L765 921.5L746 923.5" stroke="#ff8000" fill="none"/><path d="M485 911v2h2v-2" stroke="#ff8000" fill="none"/><path d="M506 913.5v2h2v-2" stroke="#ff8000" fill="none"/><path d="M527 916v2h2v-2" stroke="#ff8000" fill="none"/><path d="M566 919v2h2v-2" stroke="#ff8000" fill="none"/><path d="M606 921v2h2v-2" stroke="#ff8000" fill="none"/><path d="M645 923v2h2v-2" stroke="#ff8000" fill="none"/><path d="M681 921.5v2h2v-2" stroke="#ff8000" fill="none"/><path d="M720 919v2h2v-2" stroke="#ff8000" fill="none"/><path d="M810.0 805.0 L1000.0 801.0 L1239.0 809.0 L1239.0 813.0 L1235.0 816.5 L1000.0 808.5 L840.0 807.5 L810.0 811.0Z" stroke="#ff8000" fill="none" stroke-width="1"/><path d="M842 807.1v-2h2v2" stroke="#ff8000" fill="none"/><path d="M884 808.8v-2h2v2" stroke="#ff8000" fill="none"/><path d="M949 811.4v-2h2v2" stroke="#ff8000" fill="none"/><path d="M997 813.3v-2h2v2" stroke="#ff8000" fill="none"/><path d="M1045 815.2v-2h2v2" stroke="#ff8000" fill="none"/><path d="M1093 817.1v-2h2v2" stroke="#ff8000" fill="none"/><path d="M1141 819.0v-2h2v2" stroke="#ff8000" fill="none"/><path d="M1189 821.0v-2h2v2" stroke="#ff8000" fill="none"/><path d="M826.0 816.5 L1003.0 813.0 L1003.0 827.5 L940.0 826.0 L826.0 824.5Z" stroke="#0000ff" fill="none" stroke-width="1"/><rect x="862.5" y="817.5" width="2" height="6" rx="0" fill="none" stroke="#00ff00"/><rect x="893.5" y="817.5" width="2" height="6" rx="0" fill="none" stroke="#00ff00"/><rect x="924.5" y="817.5" width="2" height="6" rx="0" fill="none" stroke="#00ff00"/><rect x="950.5" y="817.5" width="2" height="6" rx="0" fill="none" stroke="#00ff00"/><rect x="979.5" y="817.5" width="2" height="6" rx="0" fill="none" stroke="#00ff00"/><rect x="826.5" y="819.5" width="24" height="1" rx="0" fill="none" stroke="#00ff00"/><rect x="957.5" y="819.5" width="13" height="1" rx="0" fill="none" stroke="#00ff00"/><path d="M820 825Q850 834 890 835L1010 830L1052 831L1058 839L1050 835Q1030 834 1022 838L1018 842Q1000 836 985 840L982 845Q960 836 950 840L947 845Q930 836 920 840L917 845Q900 836 888 840L885 846L878 842L860 853L849 845L840 853L830 845L820 849" stroke="#0000ff" fill="none"/><path d="M862 838l4 5M864 836l4 5" stroke="#0000ff"/><path d="M888 838l4 5M890 836l4 5" stroke="#0000ff"/><path d="M918 838l4 5M920 836l4 5" stroke="#0000ff"/><path d="M948 838l4 5M950 836l4 5" stroke="#0000ff"/><path d="M980 838l4 5M982 836l4 5" stroke="#0000ff"/><path d="M1016 838l4 5M1018 836l4 5" stroke="#0000ff"/><path d="M870.0 852.0 L1024.0 843.5 L1025.0 853.0 L872.0 866.5 L869.0 860.0Z" stroke="#0000ff" fill="none" stroke-width="1"/><rect x="898.5" y="850.5" width="2" height="7" rx="0" fill="none" stroke="#00ff00"/><rect x="930.5" y="850.5" width="2" height="7" rx="0" fill="none" stroke="#00ff00"/><rect x="961.5" y="850.5" width="2" height="7" rx="0" fill="none" stroke="#00ff00"/><rect x="992.5" y="850.5" width="2" height="7" rx="0" fill="none" stroke="#00ff00"/><rect x="876.5" y="858.5" width="16" height="1" rx="0" fill="none" stroke="#00ff00"/><rect x="1001.5" y="848.5" width="15" height="1" rx="0" fill="none" stroke="#00ff00"/><path d="M1077 824Q1082 819.5 1110 819.5H1165Q1171 820 1171 825V830Q1171 835.5 1165 835.5H1110Q1082 835.5 1077 830V828H1085V826H1077z" stroke="#0000ff" fill="none"/><rect x="1149.5" y="826.5" width="8" height="2" rx="0" fill="none" stroke="#00ff00"/><rect x="1159.5" y="826.5" width="4" height="2" rx="0" fill="none" stroke="#00ff00"/><path d="M738.0 886.0 L1213.0 833.0 L1213.0 820.0 L1240.5 831.0 L1210.0 841.0 L741.0 892.5Z" stroke="#ff8000" fill="none" stroke-width="1"/><path d="M786 887.3v3h2v-3" stroke="#ff8000" fill="none"/><path d="M835 882.0v3h2v-3" stroke="#ff8000" fill="none"/><path d="M882 876.9v3h2v-3" stroke="#ff8000" fill="none"/><path d="M930 871.7v3h2v-3" stroke="#ff8000" fill="none"/><path d="M978 866.5v3h2v-3" stroke="#ff8000" fill="none"/><path d="M1026 861.3v3h2v-3" stroke="#ff8000" fill="none"/><path d="M1074 856.1v3h2v-3" stroke="#ff8000" fill="none"/><path d="M1122 850.9v3h2v-3" stroke="#ff8000" fill="none"/><path d="M1170 845.7v3h2v-3" stroke="#ff8000" fill="none"/><path d="M747.0 893.0 L747.0 898.0 L765.0 898.0 L765.0 909.0 L742.0 909.5 L742.0 915.0 L1210.0 914.5 L1210.0 889.0 L1213.0 889.0 L1213.0 865.0 L1210.0 865.0 L1210.0 841.0" stroke="#ff8000" fill="none" stroke-width="1"/><path d="M856 916Q900 930 1050 933L1179.5 924.5L1174 934L1050 939Q930 936 870 922z" stroke="#0000ff" fill="none"/><rect x="447.5" y="164.5" width="799" height="80" fill="none" stroke="#00ff00" stroke-width="1.3"/><rect x="447.5" y="261.5" width="799" height="80" fill="none" stroke="#00ff00" stroke-width="1.3"/><rect x="447.5" y="355.5" width="799" height="79" fill="none" stroke="#00ff00" stroke-width="1.3"/><rect x="447.5" y="459.5" width="73" height="38" fill="none" stroke="#00ff00" stroke-width="1.3"/><rect x="447.5" y="520.5" width="161" height="140" fill="none" stroke="#00ff00" stroke-width="1.3"/><rect x="447.5" y="680.5" width="799" height="263" fill="none" stroke="#00ff00" stroke-width="1.3"/></g>
</svg>
</body></html>
